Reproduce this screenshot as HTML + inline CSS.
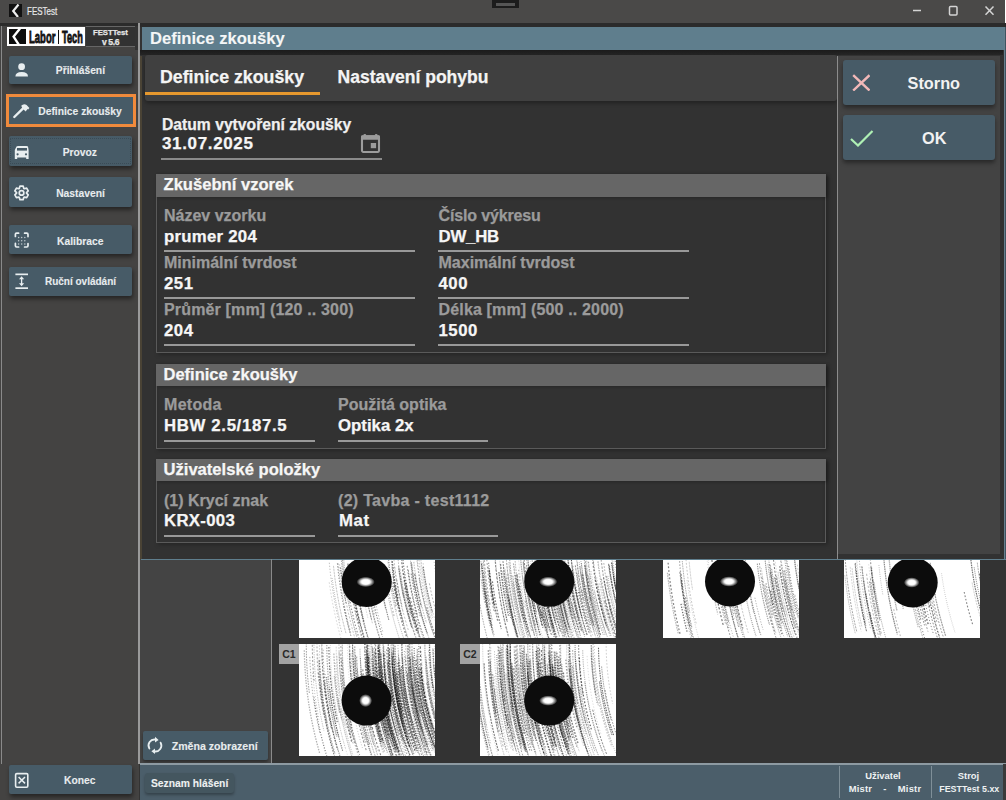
<!DOCTYPE html>
<html><head><meta charset="utf-8"><style>
html,body{margin:0;padding:0;width:1006px;height:800px;overflow:hidden;background:#333;}
body{position:relative;font-family:"Liberation Sans",sans-serif;}
body>div,body>svg{position:absolute;}
.t{white-space:nowrap;-webkit-text-stroke:0.25px currentColor;}
</style></head><body>
<div style="left:0px;top:0px;width:1006px;height:23px;background:#4a4948"></div>
<div style="left:1005px;top:0px;width:1px;height:23px;background:#ffffff"></div>
<div style="left:0px;top:23px;width:1006px;height:3px;background:#2b2b2b"></div>
<div style="left:492px;top:0px;width:27px;height:8px;background:#1c1c1c"></div>
<div style="left:496px;top:3px;width:19px;height:3px;background:#555"></div>
<div style="left:9px;top:4px;width:13px;height:13px;background:#111"></div>
<svg style="left:9px;top:4px" width="13" height="13"><path d="M9.5 0.5 L4.2 7 L9 13" stroke="#eee" stroke-width="2.2" fill="none"/></svg>
<div class="t" style="left:26.5px;top:6.46px;font-size:10.8px;line-height:10.8px;color:#e8e8e8;font-weight:normal;transform:scaleX(0.74);transform-origin:left;-webkit-text-stroke:0.2px currentColor;">FESTest</div>
<svg style="left:910px;top:4px" width="90" height="14"><path d="M3 6.5 H11" stroke="#d4d4d4" stroke-width="1.5"/><rect x="39.5" y="2.5" width="7.5" height="8.5" rx="1" fill="none" stroke="#d4d4d4" stroke-width="1.5"/><path d="M75.5 2.5 L83.5 10.8 M83.5 2.5 L75.5 10.8" stroke="#d4d4d4" stroke-width="1.5"/></svg>
<div style="left:0px;top:26px;width:139px;height:774px;background:#444342"></div>
<div style="left:1px;top:26px;width:1px;height:738px;background:#8a8a8a"></div>
<div style="left:7px;top:27px;width:78px;height:19px;background:#ffffff"></div>
<svg style="left:8.8px;top:28.8px" width="17" height="15.2"><rect width="17" height="15.2" fill="#0d0d0d"/><path d="M11 -0.5 L4.6 7.6 L9.8 15.7" stroke="#fff" stroke-width="2.4" fill="none"/></svg>
<div class="t" style="left:28.6px;top:28.71px;font-size:17px;line-height:17px;color:#111;font-weight:bold;transform:scaleX(0.56);transform-origin:left;-webkit-text-stroke:0.9px #111;">Labor</div>
<div style="left:58px;top:29.5px;width:1.2px;height:14.5px;background:#111"></div>
<div class="t" style="left:61.6px;top:28.71px;font-size:17px;line-height:17px;color:#111;font-weight:bold;transform:scaleX(0.54);transform-origin:left;-webkit-text-stroke:0.9px #111;">Tech</div>
<div style="left:86px;top:26px;width:49px;height:1px;background:#666"></div>
<div style="left:86px;top:46px;width:49px;height:1px;background:#666"></div>
<div style="left:86px;top:27px;width:49px;height:19px;background:#323232"></div>
<div style="left:135px;top:26px;width:3px;height:24px;background:#333"></div>
<div class="t" style="left:-89.5px;top:28.58px;font-size:7.7px;line-height:7.7px;color:#e6e6e6;font-weight:bold;width:400px;text-align:center;">FESTTest</div>
<div class="t" style="left:-89.5px;top:37.52px;font-size:8.6px;line-height:8.6px;color:#e6e6e6;font-weight:bold;letter-spacing:-0.4px;width:400px;text-align:center;">v 5.6</div>
<div style="left:9px;top:56px;width:123px;height:28px;background:#475b67;border-radius:2px;box-shadow:1px 3px 4px rgba(0,0,0,0.45)"></div>
<div class="t" style="left:-119.6px;top:66.38px;font-size:10.3px;line-height:10.3px;color:#e8ecee;font-weight:bold;width:400px;text-align:center;-webkit-text-stroke:0.1px currentColor">Přihlášení</div>
<div style="left:6px;top:94px;width:130px;height:33px;background:#f08a3c"></div>
<div style="left:9px;top:97px;width:124px;height:27px;background:#475b67"></div>
<div class="t" style="left:-120.0px;top:107.08px;font-size:10.3px;line-height:10.3px;color:#e8ecee;font-weight:bold;width:400px;text-align:center;-webkit-text-stroke:0.1px currentColor">Definice zkoušky</div>
<div style="left:9px;top:136px;width:123px;height:30px;background:#475b67;border-radius:2px;box-shadow:1px 3px 4px rgba(0,0,0,0.45)"></div>
<div class="t" style="left:-120.2px;top:148.48px;font-size:10.3px;line-height:10.3px;color:#e8ecee;font-weight:bold;width:400px;text-align:center;-webkit-text-stroke:0.1px currentColor">Provoz</div>
<div style="left:10px;top:138px;width:121px;height:26px;border:1px dotted rgba(30,40,48,0.3);box-sizing:border-box"></div>
<div style="left:9px;top:177px;width:123px;height:30px;background:#475b67;border-radius:2px;box-shadow:1px 3px 4px rgba(0,0,0,0.45)"></div>
<div class="t" style="left:-119.5px;top:188.88px;font-size:10.3px;line-height:10.3px;color:#e8ecee;font-weight:bold;width:400px;text-align:center;-webkit-text-stroke:0.1px currentColor">Nastavení</div>
<div style="left:9px;top:225px;width:123px;height:29px;background:#475b67;border-radius:2px;box-shadow:1px 3px 4px rgba(0,0,0,0.45)"></div>
<div class="t" style="left:-119.8px;top:236.58px;font-size:10.3px;line-height:10.3px;color:#e8ecee;font-weight:bold;width:400px;text-align:center;-webkit-text-stroke:0.1px currentColor">Kalibrace</div>
<div style="left:9px;top:267px;width:123px;height:29px;background:#475b67;border-radius:2px;box-shadow:1px 3px 4px rgba(0,0,0,0.45)"></div>
<div class="t" style="left:-119.5px;top:277.04px;font-size:10.0px;line-height:10.0px;color:#e8ecee;font-weight:bold;width:400px;text-align:center;-webkit-text-stroke:0.1px currentColor">Ruční ovládání</div>
<div style="left:9px;top:765px;width:123px;height:29px;background:#475b67;border-radius:2px;box-shadow:1px 3px 4px rgba(0,0,0,0.45)"></div>
<div class="t" style="left:-120.3px;top:775.78px;font-size:10.3px;line-height:10.3px;color:#e8ecee;font-weight:bold;width:400px;text-align:center;-webkit-text-stroke:0.1px currentColor">Konec</div>
<svg style="left:10px;top:58px" width="24" height="24" viewBox="0 0 24 24"><circle cx="11.6" cy="8.7" r="3.4" fill="#e8eef0"/><path d="M5.4 18.6 Q5.4 14 11.7 14 Q18 14 18 18.6 Z" fill="#e8eef0"/></svg>
<svg style="left:10px;top:98px" width="24" height="24" viewBox="0 0 24 24"><path d="M4.3 19 L13.6 9.8" stroke="#e8eef0" stroke-width="2.4" stroke-linecap="round"/><path d="M11.2 7.8 Q13.6 5 16.6 6.9 L19.4 10 L18.2 11.6 L17.6 11.1 L15.6 13.4 L12.6 10.4 Z" fill="#e8eef0"/></svg>
<svg style="left:10px;top:139px" width="24" height="24" viewBox="0 0 24 24"><path d="M6.5 7.5 Q7 6.9 8 6.9 L16.5 6.9 Q17.5 6.9 18 7.6 L18.6 11 L18.6 20 L16.2 20 L16.2 18.6 L7.2 18.6 L7.2 20 L4.8 20 L4.8 11 Z" fill="#e8eef0"/><rect x="7" y="9" width="10" height="2.6" fill="#475b67"/><circle cx="7.6" cy="15.3" r="1.1" fill="#475b67"/><circle cx="16" cy="15.3" r="1.1" fill="#475b67"/></svg>
<svg style="left:10px;top:180px" width="24" height="24" viewBox="0 0 24 24"><path d="M9.28 8.44 L9.98 6.08 L13.12 6.08 L13.82 8.44 L14.27 8.71 L16.67 8.13 L18.24 10.85 L16.54 12.64 L16.54 13.16 L18.24 14.95 L16.67 17.67 L14.27 17.09 L13.82 17.36 L13.12 19.72 L9.98 19.72 L9.28 17.36 L8.83 17.09 L6.43 17.67 L4.86 14.95 L6.56 13.16 L6.56 12.64 L4.86 10.85 L6.43 8.13 L8.83 8.71Z" fill="none" stroke="#e8eef0" stroke-width="1.7" stroke-linejoin="round"/><circle cx="11.55" cy="12.9" r="2.3" fill="none" stroke="#e8eef0" stroke-width="1.7"/></svg>
<svg style="left:10px;top:228px" width="24" height="24" viewBox="0 0 24 24"><path d="M5.4 8.5 V6.2 Q5.4 5.2 6.6 5.2 H8.6 M14.6 5.2 H16.8 Q18 5.2 18 6.4 V8.6 M5.4 15.4 V17.8 Q5.4 19 6.6 19 H8.6 M14.6 19 H16.8 Q18 19 18 17.8 V15.6" fill="none" stroke="#e8eef0" stroke-width="1.7" stroke-linecap="round"/><circle cx="8.6" cy="9.6" r="0.75" fill="#e8eef0" opacity="0.75"/><circle cx="8.6" cy="12.8" r="0.75" fill="#e8eef0" opacity="0.75"/><circle cx="8.6" cy="16" r="0.75" fill="#e8eef0" opacity="0.75"/><circle cx="11.7" cy="9.6" r="0.75" fill="#e8eef0" opacity="0.75"/><circle cx="11.7" cy="12.8" r="0.75" fill="#e8eef0" opacity="0.75"/><circle cx="11.7" cy="16" r="0.75" fill="#e8eef0" opacity="0.75"/><circle cx="14.8" cy="9.6" r="0.75" fill="#e8eef0" opacity="0.75"/><circle cx="14.8" cy="12.8" r="0.75" fill="#e8eef0" opacity="0.75"/><circle cx="14.8" cy="16" r="0.75" fill="#e8eef0" opacity="0.75"/></svg>
<svg style="left:10px;top:270px" width="24" height="24" viewBox="0 0 24 24"><rect x="5.4" y="3.5" width="12.6" height="1.7" fill="#e8eef0"/><rect x="5.4" y="17.3" width="12.6" height="1.7" fill="#e8eef0"/><path d="M11.6 8 V14.5" stroke="#e8eef0" stroke-width="1.3"/><path d="M9 9.3 L11.6 6.2 L14.2 9.3 Z M9 13.2 L11.6 16.3 L14.2 13.2 Z" fill="#e8eef0"/></svg>
<svg style="left:10px;top:768px" width="24" height="24" viewBox="0 0 24 24"><rect x="5.6" y="5.6" width="12.2" height="13.6" rx="1.2" fill="none" stroke="#e8eef0" stroke-width="1.6"/><path d="M8.6 9 L15 15.4 M15 9 L8.6 15.4" stroke="#e8eef0" stroke-width="1.5"/></svg>
<div style="left:140px;top:23px;width:866px;height:4px;background:#2b2b2b"></div>
<div style="left:142px;top:27px;width:863px;height:23px;background:#5f7e8d"></div>
<div style="left:1004px;top:27px;width:1px;height:23px;background:#66808e"></div>
<div style="left:1005px;top:27px;width:1px;height:23px;background:#3f5360"></div>
<div class="t" style="left:150px;top:30.95px;font-size:16.6px;line-height:16.6px;color:#f4f6f7;font-weight:bold;-webkit-text-stroke:0.1px currentColor">Definice zkoušky</div>
<div style="left:140px;top:50px;width:866px;height:509px;background:#323232"></div>
<div style="left:1004px;top:50px;width:1px;height:509px;background:#66808e"></div>
<div style="left:1005px;top:50px;width:1px;height:509px;background:#3f5360"></div>
<div style="left:140px;top:50px;width:863px;height:5px;background:linear-gradient(#1b1b1b,#262626)"></div>
<div style="left:145px;top:55px;width:692px;height:46px;background:#404040;border-radius:3px;box-shadow:0 2px 4px rgba(0,0,0,0.35)"></div>
<div style="left:145px;top:92px;width:175px;height:3px;background:#e6982e"></div>
<div class="t" style="left:160px;top:68.57px;font-size:17.75px;line-height:17.75px;color:#f4f4f4;font-weight:bold;">Definice zkoušky</div>
<div class="t" style="left:337.5px;top:68.74px;font-size:17.55px;line-height:17.55px;color:#f4f4f4;font-weight:bold;">Nastavení pohybu</div>
<div style="left:837px;top:56px;width:1px;height:503px;background:#8c8c8c"></div>
<div style="left:838px;top:56px;width:162px;height:498px;background:#434343"></div>
<div style="left:843px;top:60px;width:152px;height:45px;background:#475b67;border-radius:3px;box-shadow:0 3px 4px rgba(0,0,0,0.4)"></div>
<div class="t" style="left:733.8px;top:74.90px;font-size:16.3px;line-height:16.3px;color:#f2f2f2;font-weight:bold;width:400px;text-align:center;-webkit-text-stroke:0">Storno</div>
<div style="left:843px;top:115px;width:152px;height:45px;background:#475b67;border-radius:3px;box-shadow:0 3px 4px rgba(0,0,0,0.4)"></div>
<div class="t" style="left:734.2px;top:129.60px;font-size:16.3px;line-height:16.3px;color:#f2f2f2;font-weight:bold;width:400px;text-align:center;-webkit-text-stroke:0">OK</div>
<svg style="left:852px;top:74px" width="18" height="17"><path d="M1.2 1.2 L17.5 16.5 M17.5 1.2 L1.2 16.5" stroke="#f2b8b8" stroke-width="2.4"/></svg>
<svg style="left:850px;top:129px" width="24" height="18"><path d="M1 10 L8 16.5 L22.5 2" stroke="#aef0b4" stroke-width="2.2" fill="none"/></svg>
<div class="t" style="left:162px;top:116.81px;font-size:15.7px;line-height:15.7px;color:#f0f0f0;font-weight:bold;">Datum vytvoření zkoušky</div>
<div class="t" style="left:162px;top:134.71px;font-size:17px;line-height:17px;color:#f6f6f6;font-weight:bold;letter-spacing:0.65px;">31.07.2025</div>
<div style="left:161px;top:158px;width:221px;height:2px;background:#8a8a8a"></div>
<svg style="left:360px;top:133px" width="21" height="20"><rect x="2" y="3.2" width="17" height="15.8" rx="1.6" fill="none" stroke="#9c9c9c" stroke-width="2.1"/><rect x="1" y="2.2" width="19" height="4.6" rx="1.2" fill="#9c9c9c"/><ellipse cx="4.8" cy="1.9" rx="1.4" ry="1" fill="#9c9c9c"/><ellipse cx="16.2" cy="1.9" rx="1.4" ry="1" fill="#9c9c9c"/><rect x="10.8" y="10" width="5.3" height="5.2" fill="#9c9c9c"/></svg>
<div style="left:156px;top:174px;width:670px;height:179px;border:1.5px solid #5a5a5a;box-sizing:border-box;box-shadow:2px 2px 4px rgba(0,0,0,0.25), inset 0 4px 5px -2px rgba(0,0,0,0.3)"></div>
<div style="left:156px;top:174px;width:670px;height:23px;background:#666666;box-shadow:2px 1px 3px rgba(0,0,0,0.25)"></div>
<div class="t" style="left:163.5px;top:177.25px;font-size:16.6px;line-height:16.6px;color:#f6f6f6;font-weight:bold;">Zkušební vzorek</div>
<div class="t" style="left:164px;top:208.26px;font-size:16px;line-height:16px;color:#9b9b9b;font-weight:bold;">Název vzorku</div>
<div class="t" style="left:164px;top:229.28px;font-size:16.8px;line-height:16.8px;color:#f6f6f6;font-weight:bold;letter-spacing:0.25px;">prumer 204</div>
<div style="left:163.5px;top:250.0px;width:251px;height:2px;background:#999999"></div>
<div class="t" style="left:164px;top:255.26px;font-size:16px;line-height:16px;color:#9b9b9b;font-weight:bold;">Minimální tvrdost</div>
<div class="t" style="left:164px;top:276.28px;font-size:16.8px;line-height:16.8px;color:#f6f6f6;font-weight:bold;letter-spacing:0.5px;">251</div>
<div style="left:163.5px;top:297.0px;width:251px;height:2px;background:#999999"></div>
<div class="t" style="left:164px;top:302.26px;font-size:16px;line-height:16px;color:#9b9b9b;font-weight:bold;letter-spacing:0.16px;">Průměr [mm] (120 .. 300)</div>
<div class="t" style="left:164px;top:323.28px;font-size:16.8px;line-height:16.8px;color:#f6f6f6;font-weight:bold;letter-spacing:0.5px;">204</div>
<div style="left:163.5px;top:344.0px;width:251px;height:2px;background:#999999"></div>
<div class="t" style="left:438.5px;top:208.26px;font-size:16px;line-height:16px;color:#9b9b9b;font-weight:bold;letter-spacing:-0.15px;">Číslo výkresu</div>
<div class="t" style="left:438.5px;top:229.28px;font-size:16.8px;line-height:16.8px;color:#f6f6f6;font-weight:bold;letter-spacing:-0.2px;">DW_HB</div>
<div style="left:438.0px;top:250.0px;width:251px;height:2px;background:#999999"></div>
<div class="t" style="left:438.5px;top:255.26px;font-size:16px;line-height:16px;color:#9b9b9b;font-weight:bold;">Maximální tvrdost</div>
<div class="t" style="left:438.5px;top:276.28px;font-size:16.8px;line-height:16.8px;color:#f6f6f6;font-weight:bold;letter-spacing:0.5px;">400</div>
<div style="left:438.0px;top:297.0px;width:251px;height:2px;background:#999999"></div>
<div class="t" style="left:438.5px;top:302.26px;font-size:16px;line-height:16px;color:#9b9b9b;font-weight:bold;letter-spacing:0.16px;">Délka [mm] (500 .. 2000)</div>
<div class="t" style="left:438.5px;top:323.28px;font-size:16.8px;line-height:16.8px;color:#f6f6f6;font-weight:bold;letter-spacing:0.5px;">1500</div>
<div style="left:438.0px;top:344.0px;width:251px;height:2px;background:#999999"></div>
<div style="left:156px;top:364px;width:670px;height:84.5px;border:1.5px solid #5a5a5a;box-sizing:border-box;box-shadow:2px 2px 4px rgba(0,0,0,0.25), inset 0 4px 5px -2px rgba(0,0,0,0.3)"></div>
<div style="left:156px;top:364px;width:670px;height:22px;background:#666666;box-shadow:2px 1px 3px rgba(0,0,0,0.25)"></div>
<div class="t" style="left:163.5px;top:365.73px;font-size:16.5px;line-height:16.5px;color:#f6f6f6;font-weight:bold;">Definice zkoušky</div>
<div class="t" style="left:164px;top:397.06px;font-size:16px;line-height:16px;color:#9b9b9b;font-weight:bold;letter-spacing:0.3px;">Metoda</div>
<div class="t" style="left:164px;top:418.28px;font-size:16.8px;line-height:16.8px;color:#f6f6f6;font-weight:bold;letter-spacing:0.65px;">HBW 2.5/187.5</div>
<div style="left:163.5px;top:440.0px;width:151px;height:2px;background:#999999"></div>
<div class="t" style="left:338px;top:397.06px;font-size:16px;line-height:16px;color:#9b9b9b;font-weight:bold;">Použitá optika</div>
<div class="t" style="left:338px;top:418.28px;font-size:16.8px;line-height:16.8px;color:#f6f6f6;font-weight:bold;">Optika 2x</div>
<div style="left:337.5px;top:440.0px;width:150px;height:2px;background:#999999"></div>
<div style="left:156px;top:458.5px;width:670px;height:84.5px;border:1.5px solid #5a5a5a;box-sizing:border-box;box-shadow:2px 2px 4px rgba(0,0,0,0.25), inset 0 4px 5px -2px rgba(0,0,0,0.3)"></div>
<div style="left:156px;top:458.5px;width:670px;height:22px;background:#666666;box-shadow:2px 1px 3px rgba(0,0,0,0.25)"></div>
<div class="t" style="left:163.5px;top:461.95px;font-size:16.6px;line-height:16.6px;color:#f6f6f6;font-weight:bold;">Uživatelské položky</div>
<div class="t" style="left:164px;top:492.76px;font-size:16px;line-height:16px;color:#9b9b9b;font-weight:bold;">(1) Krycí znak</div>
<div class="t" style="left:164px;top:513.28px;font-size:16.8px;line-height:16.8px;color:#f6f6f6;font-weight:bold;letter-spacing:0.3px;">KRX-003</div>
<div style="left:163.5px;top:535.0px;width:151px;height:2px;background:#999999"></div>
<div class="t" style="left:338px;top:492.76px;font-size:16px;line-height:16px;color:#9b9b9b;font-weight:bold;letter-spacing:0.3px;">(2) Tavba - test1112</div>
<div class="t" style="left:339px;top:513.28px;font-size:16.8px;line-height:16.8px;color:#f6f6f6;font-weight:bold;letter-spacing:0.6px;">Mat</div>
<div style="left:337.5px;top:535.0px;width:160px;height:2px;background:#999999"></div>
<div style="left:140px;top:559px;width:866px;height:205px;background:#333333"></div>
<div style="left:140px;top:559px;width:131px;height:205px;background:#444444"></div>
<div style="left:141px;top:559px;width:865px;height:1px;background:#5f7e8d"></div>
<div style="left:138px;top:762.5px;width:134px;height:1.5px;background:#9a9a9a"></div>
<div style="left:138px;top:23px;width:2px;height:741px;background:#9a9a9a"></div>
<div style="left:140px;top:56px;width:1.5px;height:503px;background:#4a4335"></div>
<div style="left:271px;top:559px;width:1px;height:205px;background:#8a8a8a"></div>
<div style="left:143px;top:731px;width:125px;height:29px;background:#475b67;border-radius:2px;box-shadow:0 2px 3px rgba(0,0,0,0.35)"></div>
<div class="t" style="left:171.7px;top:741.13px;font-size:10.6px;line-height:10.6px;color:#e8ecee;font-weight:bold;-webkit-text-stroke:0.1px currentColor">Změna zobrazení</div>
<svg style="left:143px;top:733px" width="24" height="24" viewBox="0 0 24 24"><path d="M6.4 15.6 A6 6 0 0 1 12.6 6.6" fill="none" stroke="#e8eef0" stroke-width="1.8" stroke-linecap="round"/><path d="M12 3.8 L15.6 7 L12 9.6 Z" fill="#e8eef0"/><path d="M17.6 9.6 A6 6 0 0 1 11.4 18.4" fill="none" stroke="#e8eef0" stroke-width="1.8" stroke-linecap="round"/><path d="M12 15.4 L8.4 18.2 L12 21 Z" fill="#e8eef0"/></svg>
<svg style="left:299px;top:559.5px" width="136" height="78.5" viewBox="0 0 136 78.5"><defs><radialGradient id="g1"><stop offset="0" stop-color="#fff"/><stop offset="0.5" stop-color="#f0f0f0"/><stop offset="1" stop-color="#fff" stop-opacity="0"/></radialGradient></defs><rect width="136" height="78.5" fill="#ffffff"/><path d="M64.7 19.4 A379.1 379.1 0 0 0 72.6 59.5" stroke="#000" stroke-opacity="0.38" stroke-width="1.0" stroke-dasharray="1.9 0.7" fill="none"/><path d="M30.3 2.7 A411.3 411.3 0 0 0 43.1 73.7" stroke="#000" stroke-opacity="0.50" stroke-width="0.5" stroke-dasharray="1.4 1.6" fill="none"/><path d="M76.4 -3.4 A364.8 364.8 0 0 0 80.0 25.2" stroke="#000" stroke-opacity="0.42" stroke-width="1.3" stroke-dasharray="1.3 0.9" fill="none"/><path d="M99.6 8.7 A343.0 343.0 0 0 0 104.4 37.1" stroke="#000" stroke-opacity="0.38" stroke-width="0.9" stroke-dasharray="1.1 0.9" fill="none"/><path d="M44.8 46.4 A403.3 403.3 0 0 0 51.4 73.8" stroke="#000" stroke-opacity="0.42" stroke-width="1.0" stroke-dasharray="1.1 2.0" fill="none"/><path d="M115.7 13.9 A327.8 327.8 0 0 0 122.4 47.2" stroke="#000" stroke-opacity="0.49" stroke-width="1.1" stroke-dasharray="2.1 1.2" fill="none"/><path d="M106.9 22.7 A337.9 337.9 0 0 0 122.0 80.0" stroke="#000" stroke-opacity="0.54" stroke-width="0.9" stroke-dasharray="1.6 0.6" fill="none"/><path d="M39.2 3.3 A402.5 402.5 0 0 0 51.7 72.3" stroke="#000" stroke-opacity="0.27" stroke-width="0.9" stroke-dasharray="1.8 1.5" fill="none"/><path d="M34.5 5.9 A407.4 407.4 0 0 0 47.1 73.8" stroke="#000" stroke-opacity="0.36" stroke-width="0.9" stroke-dasharray="0.8 0.7" fill="none"/><path d="M118.0 0.9 A323.9 323.9 0 0 0 136.7 79.7" stroke="#000" stroke-opacity="0.36" stroke-width="0.6" stroke-dasharray="1.5 2.0" fill="none"/><path d="M81.6 20.9 A362.6 362.6 0 0 0 89.8 59.9" stroke="#000" stroke-opacity="0.58" stroke-width="1.0" stroke-dasharray="1.4 1.0" fill="none"/><path d="M102.1 -4.9 A339.2 339.2 0 0 0 118.1 72.8" stroke="#000" stroke-opacity="0.51" stroke-width="1.2" stroke-dasharray="2.0 1.6" fill="none"/><path d="M89.4 -2.7 A352.0 352.0 0 0 0 97.4 47.0" stroke="#000" stroke-opacity="0.55" stroke-width="1.0" stroke-dasharray="1.1 1.3" fill="none"/><path d="M109.3 10.2 A333.7 333.7 0 0 0 118.7 56.0" stroke="#000" stroke-opacity="0.42" stroke-width="1.0" stroke-dasharray="1.7 1.2" fill="none"/><path d="M52.7 22.0 A391.3 391.3 0 0 0 65.4 79.3" stroke="#000" stroke-opacity="0.52" stroke-width="1.1" stroke-dasharray="1.9 1.0" fill="none"/><path d="M120.4 -2.8 A321.1 321.1 0 0 0 133.0 60.1" stroke="#000" stroke-opacity="0.21" stroke-width="0.5" stroke-dasharray="1.9 0.9" fill="none"/><path d="M40.6 4.4 A401.2 401.2 0 0 0 44.7 35.0" stroke="#000" stroke-opacity="0.41" stroke-width="0.6" stroke-dasharray="1.2 1.6" fill="none"/><path d="M102.0 16.7 A341.8 341.8 0 0 0 111.5 60.5" stroke="#000" stroke-opacity="0.21" stroke-width="0.8" stroke-dasharray="1.4 0.9" fill="none"/><path d="M65.5 26.2 A379.3 379.3 0 0 0 73.6 63.9" stroke="#000" stroke-opacity="0.53" stroke-width="0.5" stroke-dasharray="0.8 0.8" fill="none"/><path d="M104.0 33.3 A342.7 342.7 0 0 0 112.9 68.1" stroke="#000" stroke-opacity="0.47" stroke-width="0.9" stroke-dasharray="1.1 2.0" fill="none"/><path d="M99.6 6.1 A342.7 342.7 0 0 0 112.6 67.3" stroke="#000" stroke-opacity="0.43" stroke-width="0.8" stroke-dasharray="1.7 0.7" fill="none"/><path d="M48.5 4.4 A393.4 393.4 0 0 0 64.2 82.2" stroke="#000" stroke-opacity="0.32" stroke-width="1.2" stroke-dasharray="1.2 1.9" fill="none"/><path d="M108.4 49.7 A342.0 342.0 0 0 0 116.3 76.3" stroke="#000" stroke-opacity="0.22" stroke-width="1.2" stroke-dasharray="2.1 1.4" fill="none"/><path d="M55.4 10.7 A387.2 387.2 0 0 0 70.9 83.1" stroke="#000" stroke-opacity="0.48" stroke-width="0.9" stroke-dasharray="1.3 1.1" fill="none"/><path d="M42.4 0.5 A399.0 399.0 0 0 0 47.5 37.7" stroke="#000" stroke-opacity="0.47" stroke-width="0.7" stroke-dasharray="1.5 1.1" fill="none"/><path d="M94.6 -4.7 A346.6 346.6 0 0 0 109.3 70.0" stroke="#000" stroke-opacity="0.28" stroke-width="0.8" stroke-dasharray="2.2 1.7" fill="none"/><path d="M55.0 11.5 A387.7 387.7 0 0 0 70.2 82.3" stroke="#000" stroke-opacity="0.34" stroke-width="1.2" stroke-dasharray="1.8 1.3" fill="none"/><path d="M139.7 31.7 A307.4 307.4 0 0 0 150.9 70.4" stroke="#000" stroke-opacity="0.23" stroke-width="0.6" stroke-dasharray="2.1 0.9" fill="none"/><path d="M86.2 9.7 A356.5 356.5 0 0 0 95.1 56.1" stroke="#000" stroke-opacity="0.32" stroke-width="1.2" stroke-dasharray="1.6 1.9" fill="none"/><path d="M95.5 25.7 A349.6 349.6 0 0 0 103.1 59.5" stroke="#000" stroke-opacity="0.24" stroke-width="0.5" stroke-dasharray="0.9 1.8" fill="none"/><path d="M120.1 18.4 A324.1 324.1 0 0 0 135.6 77.3" stroke="#000" stroke-opacity="0.35" stroke-width="1.0" stroke-dasharray="1.1 0.7" fill="none"/><path d="M38.4 3.4 A403.3 403.3 0 0 0 52.3 77.3" stroke="#000" stroke-opacity="0.57" stroke-width="0.9" stroke-dasharray="1.2 1.7" fill="none"/><path d="M135.1 1.8 A307.0 307.0 0 0 0 140.6 33.8" stroke="#000" stroke-opacity="0.55" stroke-width="0.5" stroke-dasharray="1.1 2.0" fill="none"/><path d="M113.0 4.6 A329.3 329.3 0 0 0 118.6 37.7" stroke="#000" stroke-opacity="0.30" stroke-width="1.1" stroke-dasharray="0.9 1.9" fill="none"/><path d="M79.2 7.0 A363.1 363.1 0 0 0 86.6 49.5" stroke="#000" stroke-opacity="0.39" stroke-width="0.6" stroke-dasharray="1.7 0.7" fill="none"/><path d="M43.3 -2.1 A397.9 397.9 0 0 0 57.8 76.8" stroke="#000" stroke-opacity="0.44" stroke-width="0.9" stroke-dasharray="1.2 0.7" fill="none"/><path d="M154.2 7.4 A288.8 288.8 0 0 0 161.0 40.5" stroke="#000" stroke-opacity="0.45" stroke-width="1.3" stroke-dasharray="1.6 1.6" fill="none"/><path d="M105.2 21.6 A339.3 339.3 0 0 0 114.5 62.0" stroke="#000" stroke-opacity="0.32" stroke-width="0.7" stroke-dasharray="0.9 1.0" fill="none"/><path d="M90.7 21.6 A353.7 353.7 0 0 0 105.9 81.9" stroke="#000" stroke-opacity="0.36" stroke-width="0.7" stroke-dasharray="1.3 1.0" fill="none"/><path d="M118.2 -0.5 A323.6 323.6 0 0 0 134.9 73.7" stroke="#000" stroke-opacity="0.33" stroke-width="0.9" stroke-dasharray="1.6 1.4" fill="none"/><path d="M62.7 27.5 A382.3 382.3 0 0 0 68.9 57.9" stroke="#000" stroke-opacity="0.23" stroke-width="0.6" stroke-dasharray="1.7 1.0" fill="none"/><path d="M115.9 26.4 A329.6 329.6 0 0 0 130.2 78.8" stroke="#000" stroke-opacity="0.26" stroke-width="0.9" stroke-dasharray="1.9 0.7" fill="none"/><path d="M124.1 3.1 A318.1 318.1 0 0 0 143.7 81.8" stroke="#000" stroke-opacity="0.33" stroke-width="0.6" stroke-dasharray="1.5 1.9" fill="none"/><path d="M69.8 -2.9 A371.6 371.6 0 0 0 83.7 71.4" stroke="#000" stroke-opacity="0.56" stroke-width="0.5" stroke-dasharray="1.2 1.9" fill="none"/><path d="M138.2 10.8 A305.1 305.1 0 0 0 155.8 76.9" stroke="#000" stroke-opacity="0.27" stroke-width="0.8" stroke-dasharray="1.0 1.6" fill="none"/><path d="M93.1 -1.8 A348.4 348.4 0 0 0 99.2 38.7" stroke="#000" stroke-opacity="0.59" stroke-width="1.1" stroke-dasharray="1.6 1.4" fill="none"/><path d="M95.5 6.6 A346.9 346.9 0 0 0 103.8 51.5" stroke="#000" stroke-opacity="0.21" stroke-width="1.0" stroke-dasharray="1.4 1.4" fill="none"/><path d="M53.1 1.1 A388.5 388.5 0 0 0 60.1 46.9" stroke="#000" stroke-opacity="0.25" stroke-width="0.7" stroke-dasharray="2.0 1.2" fill="none"/><path d="M105.5 28.1 A340.3 340.3 0 0 0 111.6 55.1" stroke="#000" stroke-opacity="0.40" stroke-width="1.0" stroke-dasharray="1.4 1.6" fill="none"/><path d="M105.4 19.9 A338.9 338.9 0 0 0 114.1 59.2" stroke="#000" stroke-opacity="0.39" stroke-width="0.7" stroke-dasharray="1.4 1.4" fill="none"/><path d="M121.6 -3.6 A319.8 319.8 0 0 0 133.7 57.9" stroke="#000" stroke-opacity="0.23" stroke-width="0.9" stroke-dasharray="2.0 0.8" fill="none"/><path d="M104.0 -0.2 A337.7 337.7 0 0 0 119.9 73.5" stroke="#000" stroke-opacity="0.48" stroke-width="1.2" stroke-dasharray="1.3 1.6" fill="none"/><path d="M84.8 9.0 A357.8 357.8 0 0 0 101.8 82.9" stroke="#000" stroke-opacity="0.43" stroke-width="0.6" stroke-dasharray="1.2 0.9" fill="none"/><path d="M92.1 -3.8 A349.2 349.2 0 0 0 104.7 63.4" stroke="#000" stroke-opacity="0.47" stroke-width="1.1" stroke-dasharray="1.3 1.3" fill="none"/><path d="M48.9 3.1 A392.9 392.9 0 0 0 64.5 81.7" stroke="#000" stroke-opacity="0.45" stroke-width="0.7" stroke-dasharray="2.1 1.9" fill="none"/><path d="M46.5 12.7 A396.3 396.3 0 0 0 60.6 80.3" stroke="#000" stroke-opacity="0.46" stroke-width="1.1" stroke-dasharray="1.4 1.9" fill="none"/><path d="M88.9 1.6 A352.9 352.9 0 0 0 97.6 51.6" stroke="#000" stroke-opacity="0.33" stroke-width="0.6" stroke-dasharray="2.1 1.9" fill="none"/><path d="M66.4 7.5 A375.9 375.9 0 0 0 77.7 66.1" stroke="#000" stroke-opacity="0.25" stroke-width="0.7" stroke-dasharray="1.1 1.6" fill="none"/><path d="M59.0 33.7 A387.0 387.0 0 0 0 64.9 61.3" stroke="#000" stroke-opacity="0.44" stroke-width="1.2" stroke-dasharray="1.1 1.0" fill="none"/><path d="M130.4 23.4 A314.9 314.9 0 0 0 140.9 64.4" stroke="#000" stroke-opacity="0.30" stroke-width="1.0" stroke-dasharray="1.9 1.7" fill="none"/><path d="M93.1 8.0 A349.4 349.4 0 0 0 109.7 79.8" stroke="#000" stroke-opacity="0.43" stroke-width="0.8" stroke-dasharray="1.2 0.8" fill="none"/><path d="M111.1 37.3 A336.5 336.5 0 0 0 119.9 69.8" stroke="#000" stroke-opacity="0.42" stroke-width="1.3" stroke-dasharray="1.9 2.0" fill="none"/><path d="M33.2 18.2 A410.1 410.1 0 0 0 41.1 61.3" stroke="#000" stroke-opacity="0.34" stroke-width="0.9" stroke-dasharray="0.8 1.2" fill="none"/><path d="M112.2 13.7 A331.2 331.2 0 0 0 121.4 56.7" stroke="#000" stroke-opacity="0.51" stroke-width="1.0" stroke-dasharray="1.5 1.5" fill="none"/><path d="M52.2 23.6 A392.1 392.1 0 0 0 60.6 64.9" stroke="#000" stroke-opacity="0.55" stroke-width="1.2" stroke-dasharray="1.5 2.0" fill="none"/><path d="M112.2 2.4 A329.8 329.8 0 0 0 128.2 73.4" stroke="#000" stroke-opacity="0.50" stroke-width="1.3" stroke-dasharray="1.2 0.8" fill="none"/><path d="M97.8 19.5 A346.3 346.3 0 0 0 103.2 46.4" stroke="#000" stroke-opacity="0.37" stroke-width="0.8" stroke-dasharray="2.0 1.4" fill="none"/><path d="M108.2 5.9 A334.2 334.2 0 0 0 125.9 80.0" stroke="#000" stroke-opacity="0.40" stroke-width="1.1" stroke-dasharray="1.7 1.5" fill="none"/><path d="M94.1 22.0 A350.4 350.4 0 0 0 109.3 81.8" stroke="#000" stroke-opacity="0.51" stroke-width="1.2" stroke-dasharray="1.9 1.7" fill="none"/><path d="M124.1 6.8 A318.5 318.5 0 0 0 133.4 52.3" stroke="#000" stroke-opacity="0.48" stroke-width="1.2" stroke-dasharray="1.6 0.8" fill="none"/><path d="M95.7 25.9 A349.4 349.4 0 0 0 102.1 54.9" stroke="#000" stroke-opacity="0.50" stroke-width="0.8" stroke-dasharray="1.3 1.5" fill="none"/><path d="M54.1 28.6 A390.9 390.9 0 0 0 66.6 81.7" stroke="#000" stroke-opacity="0.48" stroke-width="0.8" stroke-dasharray="1.8 1.4" fill="none"/><path d="M56.4 -1.4 A385.0 385.0 0 0 0 62.2 39.9" stroke="#000" stroke-opacity="0.53" stroke-width="0.9" stroke-dasharray="1.3 1.3" fill="none"/><path d="M148.7 30.4 A298.4 298.4 0 0 0 158.8 65.8" stroke="#000" stroke-opacity="0.49" stroke-width="1.2" stroke-dasharray="1.2 1.5" fill="none"/><path d="M42.6 12.6 A400.2 400.2 0 0 0 56.7 80.9" stroke="#000" stroke-opacity="0.33" stroke-width="0.7" stroke-dasharray="2.1 1.6" fill="none"/><path d="M115.7 49.9 A335.0 335.0 0 0 0 124.2 77.6" stroke="#000" stroke-opacity="0.45" stroke-width="0.8" stroke-dasharray="1.4 1.7" fill="none"/><path d="M127.7 47.5 A322.8 322.8 0 0 0 138.9 82.1" stroke="#000" stroke-opacity="0.38" stroke-width="1.2" stroke-dasharray="1.8 1.4" fill="none"/><path d="M66.9 -0.2 A374.7 374.7 0 0 0 76.0 54.7" stroke="#000" stroke-opacity="0.26" stroke-width="1.1" stroke-dasharray="1.3 1.7" fill="none"/><path d="M44.8 -0.1 A396.7 396.7 0 0 0 50.9 43.1" stroke="#000" stroke-opacity="0.36" stroke-width="0.9" stroke-dasharray="0.9 0.9" fill="none"/><path d="M30.2 22.2 A413.6 413.6 0 0 0 42.5 80.2" stroke="#000" stroke-opacity="0.29" stroke-width="0.5" stroke-dasharray="1.8 1.7" fill="none"/><path d="M98.9 -2.9 A342.5 342.5 0 0 0 113.2 68.5" stroke="#000" stroke-opacity="0.48" stroke-width="0.6" stroke-dasharray="1.4 1.3" fill="none"/><path d="M41.6 7.5 A400.5 400.5 0 0 0 47.0 43.3" stroke="#000" stroke-opacity="0.53" stroke-width="0.9" stroke-dasharray="1.6 0.9" fill="none"/><path d="M100.9 8.9 A341.8 341.8 0 0 0 119.0 83.4" stroke="#000" stroke-opacity="0.22" stroke-width="1.1" stroke-dasharray="2.0 1.0" fill="none"/><path d="M68.1 24.0 A376.4 376.4 0 0 0 81.6 81.0" stroke="#000" stroke-opacity="0.36" stroke-width="1.2" stroke-dasharray="1.9 0.8" fill="none"/><path d="M119.4 -3.4 A322.1 322.1 0 0 0 131.6 59.0" stroke="#000" stroke-opacity="0.35" stroke-width="0.6" stroke-dasharray="1.4 1.8" fill="none"/><path d="M111.3 -1.3 A330.3 330.3 0 0 0 115.5 27.7" stroke="#000" stroke-opacity="0.54" stroke-width="0.5" stroke-dasharray="1.2 0.8" fill="none"/><path d="M69.4 10.7 A373.3 373.3 0 0 0 83.5 76.7" stroke="#000" stroke-opacity="0.54" stroke-width="1.0" stroke-dasharray="1.3 1.5" fill="none"/><path d="M114.8 1.9 A327.2 327.2 0 0 0 127.5 63.0" stroke="#000" stroke-opacity="0.22" stroke-width="1.2" stroke-dasharray="1.6 1.1" fill="none"/><path d="M94.0 16.1 A349.6 349.6 0 0 0 99.7 46.1" stroke="#000" stroke-opacity="0.37" stroke-width="0.7" stroke-dasharray="2.0 1.2" fill="none"/><path d="M104.8 13.3 A338.5 338.5 0 0 0 120.4 77.5" stroke="#000" stroke-opacity="0.49" stroke-width="1.1" stroke-dasharray="1.2 2.0" fill="none"/><circle cx="67.7" cy="21.9" r="25" fill="#0c0c0c"/><ellipse cx="66.7" cy="21.9" rx="9.1" ry="5.2" fill="url(#g1)"/><ellipse cx="66.7" cy="21.9" rx="3.8500000000000005" ry="2.2" fill="#fff"/></svg>
<svg style="left:480px;top:559.5px" width="136" height="78" viewBox="0 0 136 78"><defs><radialGradient id="g2"><stop offset="0" stop-color="#fff"/><stop offset="0.5" stop-color="#f0f0f0"/><stop offset="1" stop-color="#fff" stop-opacity="0"/></radialGradient></defs><rect width="136" height="78" fill="#ffffff"/><path d="M91.9 43.3 A356.6 356.6 0 0 0 100.1 73.9" stroke="#000" stroke-opacity="0.49" stroke-width="1.0" stroke-dasharray="1.2 1.4" fill="none"/><path d="M64.3 -0.0 A377.2 377.2 0 0 0 74.0 57.5" stroke="#000" stroke-opacity="0.37" stroke-width="0.8" stroke-dasharray="1.8 2.0" fill="none"/><path d="M19.5 -3.3 A421.7 421.7 0 0 0 24.5 37.7" stroke="#000" stroke-opacity="0.21" stroke-width="0.9" stroke-dasharray="1.2 1.1" fill="none"/><path d="M56.9 14.3 A386.2 386.2 0 0 0 67.7 68.4" stroke="#000" stroke-opacity="0.29" stroke-width="0.5" stroke-dasharray="1.3 0.8" fill="none"/><path d="M149.2 42.3 A300.7 300.7 0 0 0 160.8 77.7" stroke="#000" stroke-opacity="0.52" stroke-width="1.1" stroke-dasharray="2.1 1.7" fill="none"/><path d="M74.4 37.6 A372.6 372.6 0 0 0 86.0 82.2" stroke="#000" stroke-opacity="0.58" stroke-width="0.6" stroke-dasharray="1.9 1.6" fill="none"/><path d="M15.2 1.5 A426.2 426.2 0 0 0 28.4 76.8" stroke="#000" stroke-opacity="0.53" stroke-width="0.8" stroke-dasharray="2.0 1.9" fill="none"/><path d="M62.0 24.5 A382.5 382.5 0 0 0 75.1 80.5" stroke="#000" stroke-opacity="0.49" stroke-width="0.9" stroke-dasharray="1.1 1.1" fill="none"/><path d="M128.8 39.0 A319.7 319.7 0 0 0 140.9 79.0" stroke="#000" stroke-opacity="0.32" stroke-width="1.3" stroke-dasharray="1.8 1.3" fill="none"/><path d="M161.5 11.5 A282.2 282.2 0 0 0 178.6 72.3" stroke="#000" stroke-opacity="0.32" stroke-width="0.7" stroke-dasharray="1.5 1.9" fill="none"/><path d="M150.9 16.7 A293.5 293.5 0 0 0 169.9 81.0" stroke="#000" stroke-opacity="0.28" stroke-width="1.1" stroke-dasharray="0.9 1.5" fill="none"/><path d="M116.4 39.1 A331.8 331.8 0 0 0 127.4 77.0" stroke="#000" stroke-opacity="0.24" stroke-width="0.9" stroke-dasharray="2.0 0.9" fill="none"/><path d="M105.8 -4.2 A335.5 335.5 0 0 0 118.1 60.6" stroke="#000" stroke-opacity="0.34" stroke-width="0.6" stroke-dasharray="1.7 0.7" fill="none"/><path d="M40.7 39.4 A406.0 406.0 0 0 0 46.7 67.0" stroke="#000" stroke-opacity="0.21" stroke-width="0.7" stroke-dasharray="1.9 0.8" fill="none"/><path d="M61.2 54.2 A388.9 388.9 0 0 0 69.0 82.4" stroke="#000" stroke-opacity="0.26" stroke-width="0.5" stroke-dasharray="1.3 1.5" fill="none"/><path d="M26.9 14.0 A415.8 415.8 0 0 0 32.0 46.6" stroke="#000" stroke-opacity="0.21" stroke-width="0.9" stroke-dasharray="1.9 1.6" fill="none"/><path d="M73.6 6.7 A368.6 368.6 0 0 0 86.5 70.5" stroke="#000" stroke-opacity="0.29" stroke-width="1.0" stroke-dasharray="1.2 0.7" fill="none"/><path d="M-25.7 -3.0 A466.8 466.8 0 0 0 -15.1 69.8" stroke="#000" stroke-opacity="0.43" stroke-width="0.8" stroke-dasharray="1.5 0.8" fill="none"/><path d="M65.5 -4.3 A375.7 375.7 0 0 0 72.6 44.8" stroke="#000" stroke-opacity="0.42" stroke-width="0.6" stroke-dasharray="0.9 0.6" fill="none"/><path d="M140.0 31.7 A307.1 307.1 0 0 0 148.6 63.0" stroke="#000" stroke-opacity="0.40" stroke-width="1.3" stroke-dasharray="2.1 2.0" fill="none"/><path d="M36.9 14.2 A406.0 406.0 0 0 0 48.0 71.8" stroke="#000" stroke-opacity="0.52" stroke-width="1.1" stroke-dasharray="1.2 1.2" fill="none"/><path d="M81.7 -2.8 A359.7 359.7 0 0 0 85.1 24.3" stroke="#000" stroke-opacity="0.36" stroke-width="0.6" stroke-dasharray="1.8 0.9" fill="none"/><path d="M86.7 21.5 A357.6 357.6 0 0 0 94.8 59.5" stroke="#000" stroke-opacity="0.39" stroke-width="0.7" stroke-dasharray="1.7 0.9" fill="none"/><path d="M101.4 3.0 A340.6 340.6 0 0 0 119.1 80.2" stroke="#000" stroke-opacity="0.37" stroke-width="0.9" stroke-dasharray="1.6 0.7" fill="none"/><path d="M45.3 40.9 A401.7 401.7 0 0 0 52.5 72.1" stroke="#000" stroke-opacity="0.35" stroke-width="0.9" stroke-dasharray="2.1 1.5" fill="none"/><path d="M64.7 -1.3 A376.7 376.7 0 0 0 80.0 77.1" stroke="#000" stroke-opacity="0.21" stroke-width="1.0" stroke-dasharray="0.9 1.0" fill="none"/><path d="M66.7 10.8 A376.0 376.0 0 0 0 76.3 61.2" stroke="#000" stroke-opacity="0.39" stroke-width="0.7" stroke-dasharray="1.6 0.7" fill="none"/><path d="M66.8 34.7 A379.5 379.5 0 0 0 78.2 80.4" stroke="#000" stroke-opacity="0.23" stroke-width="1.1" stroke-dasharray="1.1 1.4" fill="none"/><path d="M-8.3 0.0 A449.6 449.6 0 0 0 -2.1 47.6" stroke="#000" stroke-opacity="0.25" stroke-width="0.6" stroke-dasharray="2.0 1.5" fill="none"/><path d="M87.5 -4.4 A353.8 353.8 0 0 0 98.7 59.1" stroke="#000" stroke-opacity="0.46" stroke-width="1.1" stroke-dasharray="1.8 1.3" fill="none"/><path d="M-10.9 20.2 A454.1 454.1 0 0 0 -4.1 60.8" stroke="#000" stroke-opacity="0.39" stroke-width="1.3" stroke-dasharray="1.9 1.9" fill="none"/><path d="M93.0 5.9 A349.3 349.3 0 0 0 100.6 48.3" stroke="#000" stroke-opacity="0.40" stroke-width="0.7" stroke-dasharray="1.4 1.6" fill="none"/><path d="M-4.6 15.4 A447.4 447.4 0 0 0 0.0 47.0" stroke="#000" stroke-opacity="0.60" stroke-width="0.6" stroke-dasharray="1.4 0.7" fill="none"/><path d="M25.1 9.4 A417.1 417.1 0 0 0 39.6 82.8" stroke="#000" stroke-opacity="0.46" stroke-width="0.6" stroke-dasharray="1.2 0.9" fill="none"/><path d="M47.9 -1.1 A393.5 393.5 0 0 0 56.3 53.3" stroke="#000" stroke-opacity="0.42" stroke-width="1.3" stroke-dasharray="1.9 0.7" fill="none"/><path d="M23.0 1.2 A418.4 418.4 0 0 0 33.6 65.6" stroke="#000" stroke-opacity="0.56" stroke-width="0.9" stroke-dasharray="1.8 1.2" fill="none"/><path d="M84.7 19.2 A359.3 359.3 0 0 0 91.5 53.4" stroke="#000" stroke-opacity="0.21" stroke-width="1.0" stroke-dasharray="2.0 0.9" fill="none"/><path d="M9.4 9.8 A432.8 432.8 0 0 0 17.9 61.8" stroke="#000" stroke-opacity="0.48" stroke-width="1.2" stroke-dasharray="1.8 1.3" fill="none"/><path d="M32.8 15.7 A410.3 410.3 0 0 0 45.0 76.7" stroke="#000" stroke-opacity="0.54" stroke-width="0.7" stroke-dasharray="1.7 1.2" fill="none"/><path d="M138.9 1.5 A303.2 303.2 0 0 0 158.9 79.5" stroke="#000" stroke-opacity="0.20" stroke-width="0.9" stroke-dasharray="1.8 1.8" fill="none"/><path d="M73.5 3.8 A368.4 368.4 0 0 0 89.6 79.9" stroke="#000" stroke-opacity="0.44" stroke-width="1.2" stroke-dasharray="2.0 0.7" fill="none"/><path d="M61.4 -0.7 A380.1 380.1 0 0 0 73.4 66.5" stroke="#000" stroke-opacity="0.50" stroke-width="1.0" stroke-dasharray="1.1 1.7" fill="none"/><path d="M33.2 22.6 A410.7 410.7 0 0 0 40.8 62.4" stroke="#000" stroke-opacity="0.39" stroke-width="0.7" stroke-dasharray="2.2 0.7" fill="none"/><path d="M39.4 25.5 A405.0 405.0 0 0 0 50.6 77.3" stroke="#000" stroke-opacity="0.46" stroke-width="1.1" stroke-dasharray="1.5 1.5" fill="none"/><path d="M63.5 -0.1 A378.0 378.0 0 0 0 67.2 28.1" stroke="#000" stroke-opacity="0.50" stroke-width="0.6" stroke-dasharray="1.9 1.7" fill="none"/><path d="M127.9 15.9 A316.0 316.0 0 0 0 144.4 77.7" stroke="#000" stroke-opacity="0.55" stroke-width="0.6" stroke-dasharray="1.0 1.1" fill="none"/><path d="M71.0 26.6 A373.9 373.9 0 0 0 84.5 82.0" stroke="#000" stroke-opacity="0.35" stroke-width="0.9" stroke-dasharray="1.3 1.2" fill="none"/><path d="M79.4 24.9 A365.4 365.4 0 0 0 89.0 67.5" stroke="#000" stroke-opacity="0.39" stroke-width="0.9" stroke-dasharray="2.1 0.7" fill="none"/><path d="M47.3 8.0 A394.9 394.9 0 0 0 60.8 76.4" stroke="#000" stroke-opacity="0.36" stroke-width="1.2" stroke-dasharray="0.9 1.5" fill="none"/><path d="M138.3 24.2 A307.3 307.3 0 0 0 153.9 78.2" stroke="#000" stroke-opacity="0.52" stroke-width="1.0" stroke-dasharray="1.2 0.9" fill="none"/><path d="M73.6 -3.7 A367.7 367.7 0 0 0 88.4 73.5" stroke="#000" stroke-opacity="0.53" stroke-width="0.8" stroke-dasharray="1.3 1.0" fill="none"/><path d="M108.0 1.4 A333.9 333.9 0 0 0 117.5 52.4" stroke="#000" stroke-opacity="0.38" stroke-width="0.7" stroke-dasharray="2.1 1.9" fill="none"/><path d="M-0.8 -0.5 A442.1 442.1 0 0 0 4.7 43.4" stroke="#000" stroke-opacity="0.30" stroke-width="0.7" stroke-dasharray="1.7 1.1" fill="none"/><path d="M-15.1 -0.4 A456.3 456.3 0 0 0 -4.7 68.2" stroke="#000" stroke-opacity="0.52" stroke-width="1.0" stroke-dasharray="1.4 1.8" fill="none"/><path d="M151.5 19.8 A293.5 293.5 0 0 0 166.5 72.6" stroke="#000" stroke-opacity="0.58" stroke-width="1.1" stroke-dasharray="1.9 1.8" fill="none"/><path d="M-4.2 16.6 A447.0 447.0 0 0 0 8.4 82.6" stroke="#000" stroke-opacity="0.32" stroke-width="1.0" stroke-dasharray="1.7 1.1" fill="none"/><path d="M126.5 15.9 A317.5 317.5 0 0 0 137.1 61.2" stroke="#000" stroke-opacity="0.56" stroke-width="0.6" stroke-dasharray="2.1 0.8" fill="none"/><path d="M178.4 11.0 A265.4 265.4 0 0 0 190.5 56.4" stroke="#000" stroke-opacity="0.57" stroke-width="1.2" stroke-dasharray="1.9 1.2" fill="none"/><path d="M77.8 6.9 A364.5 364.5 0 0 0 86.3 54.2" stroke="#000" stroke-opacity="0.46" stroke-width="0.6" stroke-dasharray="1.2 1.9" fill="none"/><path d="M160.7 6.4 A282.2 282.2 0 0 0 168.0 40.9" stroke="#000" stroke-opacity="0.30" stroke-width="0.8" stroke-dasharray="1.2 1.1" fill="none"/><path d="M74.9 11.6 A367.9 367.9 0 0 0 83.2 56.0" stroke="#000" stroke-opacity="0.51" stroke-width="0.5" stroke-dasharray="1.0 1.8" fill="none"/><path d="M134.9 -2.2 A306.8 306.8 0 0 0 149.9 65.8" stroke="#000" stroke-opacity="0.41" stroke-width="1.2" stroke-dasharray="1.3 1.7" fill="none"/><path d="M-58.9 14.5 A501.3 501.3 0 0 0 -52.1 61.7" stroke="#000" stroke-opacity="0.45" stroke-width="0.8" stroke-dasharray="2.0 1.4" fill="none"/><path d="M176.2 28.6 A271.2 271.2 0 0 0 195.2 82.5" stroke="#000" stroke-opacity="0.60" stroke-width="1.2" stroke-dasharray="1.4 1.2" fill="none"/><path d="M91.1 -3.8 A350.2 350.2 0 0 0 107.3 75.3" stroke="#000" stroke-opacity="0.57" stroke-width="1.0" stroke-dasharray="2.1 0.7" fill="none"/><path d="M75.7 -4.8 A365.5 365.5 0 0 0 87.9 64.1" stroke="#000" stroke-opacity="0.24" stroke-width="0.8" stroke-dasharray="1.0 0.8" fill="none"/><path d="M176.1 -3.6 A265.6 265.6 0 0 0 190.8 58.0" stroke="#000" stroke-opacity="0.56" stroke-width="0.7" stroke-dasharray="1.5 1.4" fill="none"/><path d="M138.9 -2.8 A302.7 302.7 0 0 0 149.5 50.9" stroke="#000" stroke-opacity="0.28" stroke-width="1.2" stroke-dasharray="2.0 1.3" fill="none"/><path d="M88.2 -0.2 A353.5 353.5 0 0 0 97.3 52.7" stroke="#000" stroke-opacity="0.25" stroke-width="0.6" stroke-dasharray="1.1 0.7" fill="none"/><path d="M53.5 21.3 A390.4 390.4 0 0 0 63.0 67.6" stroke="#000" stroke-opacity="0.54" stroke-width="1.2" stroke-dasharray="1.8 1.3" fill="none"/><path d="M82.0 6.8 A360.3 360.3 0 0 0 97.0 76.3" stroke="#000" stroke-opacity="0.28" stroke-width="0.8" stroke-dasharray="1.2 1.2" fill="none"/><path d="M92.7 27.9 A352.8 352.8 0 0 0 104.5 75.0" stroke="#000" stroke-opacity="0.52" stroke-width="0.9" stroke-dasharray="1.5 1.0" fill="none"/><path d="M105.4 12.5 A337.8 337.8 0 0 0 120.6 75.9" stroke="#000" stroke-opacity="0.46" stroke-width="0.5" stroke-dasharray="1.6 0.9" fill="none"/><path d="M68.4 15.3 A374.8 374.8 0 0 0 80.6 72.3" stroke="#000" stroke-opacity="0.45" stroke-width="1.1" stroke-dasharray="1.8 1.3" fill="none"/><path d="M82.5 5.7 A359.7 359.7 0 0 0 97.6 76.2" stroke="#000" stroke-opacity="0.22" stroke-width="0.7" stroke-dasharray="1.0 1.5" fill="none"/><path d="M-12.9 44.8 A459.7 459.7 0 0 0 -5.2 80.8" stroke="#000" stroke-opacity="0.59" stroke-width="1.2" stroke-dasharray="1.4 1.0" fill="none"/><path d="M109.0 38.0 A338.8 338.8 0 0 0 120.5 78.6" stroke="#000" stroke-opacity="0.43" stroke-width="0.8" stroke-dasharray="1.4 1.6" fill="none"/><path d="M3.1 -1.7 A438.1 438.1 0 0 0 12.1 59.8" stroke="#000" stroke-opacity="0.48" stroke-width="0.7" stroke-dasharray="2.1 0.9" fill="none"/><path d="M26.3 26.6 A418.2 418.2 0 0 0 37.8 80.5" stroke="#000" stroke-opacity="0.28" stroke-width="1.1" stroke-dasharray="1.8 1.7" fill="none"/><path d="M59.1 8.2 A383.2 383.2 0 0 0 68.2 58.8" stroke="#000" stroke-opacity="0.39" stroke-width="0.7" stroke-dasharray="1.1 1.3" fill="none"/><path d="M8.6 2.8 A433.0 433.0 0 0 0 14.5 45.8" stroke="#000" stroke-opacity="0.44" stroke-width="1.2" stroke-dasharray="1.1 1.5" fill="none"/><path d="M82.0 5.3 A360.1 360.1 0 0 0 97.9 78.4" stroke="#000" stroke-opacity="0.32" stroke-width="0.7" stroke-dasharray="2.0 1.0" fill="none"/><path d="M92.4 9.7 A350.3 350.3 0 0 0 100.7 52.9" stroke="#000" stroke-opacity="0.30" stroke-width="1.1" stroke-dasharray="1.3 1.2" fill="none"/><path d="M46.1 -4.7 A395.0 395.0 0 0 0 57.9 66.1" stroke="#000" stroke-opacity="0.43" stroke-width="0.6" stroke-dasharray="1.0 1.4" fill="none"/><path d="M128.5 3.8 A313.8 313.8 0 0 0 147.1 78.5" stroke="#000" stroke-opacity="0.40" stroke-width="1.1" stroke-dasharray="2.1 0.8" fill="none"/><path d="M95.3 5.1 A346.9 346.9 0 0 0 113.2 82.2" stroke="#000" stroke-opacity="0.28" stroke-width="1.1" stroke-dasharray="2.0 1.4" fill="none"/><path d="M34.9 -1.8 A406.4 406.4 0 0 0 39.7 36.2" stroke="#000" stroke-opacity="0.47" stroke-width="0.6" stroke-dasharray="1.7 1.1" fill="none"/><path d="M64.2 -0.9 A377.2 377.2 0 0 0 79.4 76.9" stroke="#000" stroke-opacity="0.39" stroke-width="0.8" stroke-dasharray="1.1 0.9" fill="none"/><path d="M78.4 3.0 A363.5 363.5 0 0 0 94.6 79.3" stroke="#000" stroke-opacity="0.22" stroke-width="1.1" stroke-dasharray="1.4 1.3" fill="none"/><path d="M52.0 13.3 A390.9 390.9 0 0 0 62.3 66.7" stroke="#000" stroke-opacity="0.51" stroke-width="1.0" stroke-dasharray="1.8 1.6" fill="none"/><path d="M123.8 3.0 A318.3 318.3 0 0 0 129.6 36.7" stroke="#000" stroke-opacity="0.33" stroke-width="0.9" stroke-dasharray="1.7 1.5" fill="none"/><path d="M81.5 26.9 A363.6 363.6 0 0 0 88.4 58.6" stroke="#000" stroke-opacity="0.23" stroke-width="1.0" stroke-dasharray="1.4 0.8" fill="none"/><path d="M40.7 -0.8 A400.7 400.7 0 0 0 54.6 75.6" stroke="#000" stroke-opacity="0.34" stroke-width="1.2" stroke-dasharray="1.6 0.7" fill="none"/><path d="M28.2 35.6 A417.6 417.6 0 0 0 38.5 80.8" stroke="#000" stroke-opacity="0.45" stroke-width="1.1" stroke-dasharray="2.1 1.3" fill="none"/><path d="M112.2 -4.9 A329.1 329.1 0 0 0 126.5 66.3" stroke="#000" stroke-opacity="0.47" stroke-width="1.3" stroke-dasharray="1.8 1.8" fill="none"/><path d="M78.3 15.5 A365.1 365.1 0 0 0 90.2 70.4" stroke="#000" stroke-opacity="0.37" stroke-width="0.8" stroke-dasharray="1.9 0.8" fill="none"/><path d="M-33.6 7.2 A475.4 475.4 0 0 0 -22.2 77.2" stroke="#000" stroke-opacity="0.32" stroke-width="1.2" stroke-dasharray="0.9 0.9" fill="none"/><path d="M0.9 0.9 A440.5 440.5 0 0 0 13.1 74.6" stroke="#000" stroke-opacity="0.56" stroke-width="0.6" stroke-dasharray="1.6 0.7" fill="none"/><path d="M73.3 15.4 A370.0 370.0 0 0 0 83.0 63.3" stroke="#000" stroke-opacity="0.31" stroke-width="1.0" stroke-dasharray="0.9 1.3" fill="none"/><path d="M79.0 32.4 A367.0 367.0 0 0 0 91.0 79.7" stroke="#000" stroke-opacity="0.25" stroke-width="0.8" stroke-dasharray="1.4 1.1" fill="none"/><path d="M18.9 12.0 A423.6 423.6 0 0 0 27.3 61.8" stroke="#000" stroke-opacity="0.58" stroke-width="1.1" stroke-dasharray="1.7 0.8" fill="none"/><path d="M45.9 14.5 A397.0 397.0 0 0 0 51.5 47.9" stroke="#000" stroke-opacity="0.21" stroke-width="1.1" stroke-dasharray="2.2 1.5" fill="none"/><path d="M70.6 11.0 A372.1 372.1 0 0 0 80.5 62.0" stroke="#000" stroke-opacity="0.31" stroke-width="0.7" stroke-dasharray="1.9 1.9" fill="none"/><path d="M120.8 -4.2 A320.6 320.6 0 0 0 132.3 55.7" stroke="#000" stroke-opacity="0.32" stroke-width="1.2" stroke-dasharray="2.2 1.4" fill="none"/><path d="M55.9 3.9 A386.0 386.0 0 0 0 67.8 68.1" stroke="#000" stroke-opacity="0.54" stroke-width="0.9" stroke-dasharray="1.7 1.4" fill="none"/><path d="M40.2 30.9 A405.0 405.0 0 0 0 51.7 81.3" stroke="#000" stroke-opacity="0.50" stroke-width="0.8" stroke-dasharray="1.5 1.9" fill="none"/><path d="M3.7 28.5 A440.8 440.8 0 0 0 9.6 61.0" stroke="#000" stroke-opacity="0.45" stroke-width="0.9" stroke-dasharray="2.1 2.0" fill="none"/><path d="M-27.8 17.5 A470.6 470.6 0 0 0 -17.5 76.3" stroke="#000" stroke-opacity="0.48" stroke-width="0.8" stroke-dasharray="1.9 1.1" fill="none"/><path d="M35.8 15.2 A407.2 407.2 0 0 0 44.6 63.3" stroke="#000" stroke-opacity="0.60" stroke-width="1.1" stroke-dasharray="1.4 1.9" fill="none"/><path d="M12.4 21.3 A431.2 431.2 0 0 0 21.3 69.0" stroke="#000" stroke-opacity="0.51" stroke-width="1.2" stroke-dasharray="1.7 1.5" fill="none"/><path d="M129.4 48.1 A321.2 321.2 0 0 0 139.6 79.9" stroke="#000" stroke-opacity="0.34" stroke-width="1.0" stroke-dasharray="1.8 0.9" fill="none"/><path d="M82.6 -1.4 A358.9 358.9 0 0 0 89.4 42.8" stroke="#000" stroke-opacity="0.44" stroke-width="0.8" stroke-dasharray="2.1 1.2" fill="none"/><path d="M83.9 20.8 A360.3 360.3 0 0 0 96.0 73.1" stroke="#000" stroke-opacity="0.22" stroke-width="0.8" stroke-dasharray="1.5 1.9" fill="none"/><path d="M71.4 5.0 A370.6 370.6 0 0 0 86.6 77.6" stroke="#000" stroke-opacity="0.43" stroke-width="0.7" stroke-dasharray="1.7 0.8" fill="none"/><path d="M100.1 6.1 A342.2 342.2 0 0 0 114.3 70.9" stroke="#000" stroke-opacity="0.31" stroke-width="0.9" stroke-dasharray="1.6 0.9" fill="none"/><path d="M15.1 -3.2 A426.0 426.0 0 0 0 28.2 75.1" stroke="#000" stroke-opacity="0.30" stroke-width="1.1" stroke-dasharray="1.8 0.9" fill="none"/><path d="M77.8 10.9 A364.9 364.9 0 0 0 89.7 68.4" stroke="#000" stroke-opacity="0.26" stroke-width="0.8" stroke-dasharray="1.5 1.1" fill="none"/><path d="M170.5 31.7 A277.4 277.4 0 0 0 182.2 68.3" stroke="#000" stroke-opacity="0.57" stroke-width="1.2" stroke-dasharray="1.7 1.7" fill="none"/><path d="M88.1 0.3 A353.5 353.5 0 0 0 91.8 27.2" stroke="#000" stroke-opacity="0.51" stroke-width="0.7" stroke-dasharray="1.1 1.2" fill="none"/><path d="M151.7 49.4 A300.1 300.1 0 0 0 160.7 75.8" stroke="#000" stroke-opacity="0.32" stroke-width="1.0" stroke-dasharray="1.5 0.8" fill="none"/><path d="M108.6 2.1 A333.3 333.3 0 0 0 125.0 75.0" stroke="#000" stroke-opacity="0.58" stroke-width="0.6" stroke-dasharray="1.0 1.3" fill="none"/><path d="M147.5 5.3 A295.1 295.1 0 0 0 165.5 74.4" stroke="#000" stroke-opacity="0.52" stroke-width="0.7" stroke-dasharray="0.8 1.8" fill="none"/><path d="M49.0 9.4 A393.4 393.4 0 0 0 59.8 66.9" stroke="#000" stroke-opacity="0.28" stroke-width="0.5" stroke-dasharray="1.3 1.7" fill="none"/><path d="M85.4 26.1 A359.7 359.7 0 0 0 94.0 64.5" stroke="#000" stroke-opacity="0.45" stroke-width="1.1" stroke-dasharray="1.7 1.8" fill="none"/><path d="M79.8 0.8 A361.8 361.8 0 0 0 84.6 34.0" stroke="#000" stroke-opacity="0.51" stroke-width="0.9" stroke-dasharray="2.1 2.0" fill="none"/><path d="M64.6 5.4 A377.4 377.4 0 0 0 75.7 64.5" stroke="#000" stroke-opacity="0.58" stroke-width="1.1" stroke-dasharray="1.1 1.4" fill="none"/><path d="M139.6 15.9 A304.5 304.5 0 0 0 157.6 79.9" stroke="#000" stroke-opacity="0.50" stroke-width="0.6" stroke-dasharray="1.8 2.0" fill="none"/><path d="M77.6 5.9 A364.6 364.6 0 0 0 87.2 58.0" stroke="#000" stroke-opacity="0.23" stroke-width="1.0" stroke-dasharray="2.1 0.8" fill="none"/><path d="M105.0 -2.3 A336.5 336.5 0 0 0 119.7 69.1" stroke="#000" stroke-opacity="0.32" stroke-width="1.0" stroke-dasharray="2.0 1.4" fill="none"/><path d="M43.1 2.3 A398.6 398.6 0 0 0 57.4 77.8" stroke="#000" stroke-opacity="0.51" stroke-width="0.7" stroke-dasharray="1.3 0.7" fill="none"/><path d="M26.0 17.7 A417.2 417.2 0 0 0 38.3 78.6" stroke="#000" stroke-opacity="0.33" stroke-width="1.2" stroke-dasharray="1.7 1.1" fill="none"/><path d="M88.8 2.5 A353.1 353.1 0 0 0 105.5 79.3" stroke="#000" stroke-opacity="0.22" stroke-width="1.0" stroke-dasharray="1.3 1.2" fill="none"/><path d="M79.2 25.4 A365.7 365.7 0 0 0 92.5 79.9" stroke="#000" stroke-opacity="0.23" stroke-width="1.2" stroke-dasharray="1.8 0.8" fill="none"/><path d="M108.8 15.9 A334.9 334.9 0 0 0 123.3 74.9" stroke="#000" stroke-opacity="0.41" stroke-width="0.8" stroke-dasharray="1.5 0.9" fill="none"/><path d="M52.0 12.3 A390.8 390.8 0 0 0 58.6 51.1" stroke="#000" stroke-opacity="0.36" stroke-width="1.0" stroke-dasharray="1.8 1.0" fill="none"/><path d="M82.7 5.1 A359.4 359.4 0 0 0 90.5 49.7" stroke="#000" stroke-opacity="0.26" stroke-width="1.3" stroke-dasharray="2.1 1.8" fill="none"/><path d="M84.4 14.8 A359.0 359.0 0 0 0 92.8 57.3" stroke="#000" stroke-opacity="0.20" stroke-width="0.8" stroke-dasharray="1.8 1.8" fill="none"/><path d="M95.0 44.5 A353.8 353.8 0 0 0 102.0 70.7" stroke="#000" stroke-opacity="0.35" stroke-width="0.8" stroke-dasharray="1.0 1.0" fill="none"/><path d="M70.9 23.3 A373.5 373.5 0 0 0 83.3 76.8" stroke="#000" stroke-opacity="0.32" stroke-width="0.8" stroke-dasharray="1.5 1.8" fill="none"/><path d="M104.0 -3.3 A337.4 337.4 0 0 0 120.8 75.3" stroke="#000" stroke-opacity="0.52" stroke-width="0.7" stroke-dasharray="1.6 1.3" fill="none"/><path d="M69.9 52.2 A380.0 380.0 0 0 0 77.1 78.7" stroke="#000" stroke-opacity="0.55" stroke-width="0.9" stroke-dasharray="0.9 1.8" fill="none"/><path d="M88.5 18.9 A355.4 355.4 0 0 0 100.1 70.1" stroke="#000" stroke-opacity="0.26" stroke-width="0.7" stroke-dasharray="1.9 1.6" fill="none"/><path d="M-46.8 2.5 A488.1 488.1 0 0 0 -35.6 75.9" stroke="#000" stroke-opacity="0.56" stroke-width="0.6" stroke-dasharray="0.9 1.7" fill="none"/><path d="M124.4 20.9 A320.3 320.3 0 0 0 138.5 74.3" stroke="#000" stroke-opacity="0.47" stroke-width="0.7" stroke-dasharray="1.9 0.7" fill="none"/><path d="M124.8 41.2 A324.1 324.1 0 0 0 137.7 82.9" stroke="#000" stroke-opacity="0.49" stroke-width="1.1" stroke-dasharray="2.1 1.9" fill="none"/><path d="M33.9 4.2 A407.9 407.9 0 0 0 46.7 74.2" stroke="#000" stroke-opacity="0.30" stroke-width="0.7" stroke-dasharray="1.2 0.6" fill="none"/><path d="M-10.4 41.5 A456.7 456.7 0 0 0 -4.6 70.4" stroke="#000" stroke-opacity="0.28" stroke-width="0.8" stroke-dasharray="1.2 1.9" fill="none"/><path d="M131.4 2.0 A310.7 310.7 0 0 0 141.9 53.6" stroke="#000" stroke-opacity="0.22" stroke-width="0.8" stroke-dasharray="2.2 1.2" fill="none"/><path d="M82.1 14.0 A361.1 361.1 0 0 0 90.6 57.5" stroke="#000" stroke-opacity="0.29" stroke-width="0.8" stroke-dasharray="1.8 0.8" fill="none"/><path d="M62.5 25.6 A382.1 382.1 0 0 0 71.6 67.6" stroke="#000" stroke-opacity="0.27" stroke-width="1.1" stroke-dasharray="1.4 1.8" fill="none"/><path d="M66.0 36.8 A380.6 380.6 0 0 0 77.5 82.0" stroke="#000" stroke-opacity="0.46" stroke-width="1.1" stroke-dasharray="1.5 1.9" fill="none"/><path d="M66.1 12.5 A376.8 376.8 0 0 0 78.2 71.3" stroke="#000" stroke-opacity="0.24" stroke-width="0.5" stroke-dasharray="1.1 1.6" fill="none"/><path d="M81.6 -3.2 A359.7 359.7 0 0 0 85.2 25.2" stroke="#000" stroke-opacity="0.30" stroke-width="0.5" stroke-dasharray="1.6 1.9" fill="none"/><path d="M-25.9 32.5 A470.6 470.6 0 0 0 -20.2 64.4" stroke="#000" stroke-opacity="0.47" stroke-width="1.0" stroke-dasharray="1.4 0.9" fill="none"/><path d="M131.6 -3.9 A309.9 309.9 0 0 0 142.3 52.0" stroke="#000" stroke-opacity="0.31" stroke-width="0.7" stroke-dasharray="1.1 0.9" fill="none"/><path d="M26.4 -0.4 A415.0 415.0 0 0 0 36.3 62.2" stroke="#000" stroke-opacity="0.56" stroke-width="0.5" stroke-dasharray="2.1 1.4" fill="none"/><path d="M55.0 -1.8 A386.4 386.4 0 0 0 68.2 71.1" stroke="#000" stroke-opacity="0.25" stroke-width="1.1" stroke-dasharray="1.1 0.7" fill="none"/><path d="M142.3 6.4 A300.4 300.4 0 0 0 149.6 43.2" stroke="#000" stroke-opacity="0.31" stroke-width="0.6" stroke-dasharray="1.9 1.4" fill="none"/><path d="M48.6 6.0 A393.5 393.5 0 0 0 64.3 83.0" stroke="#000" stroke-opacity="0.22" stroke-width="0.7" stroke-dasharray="0.9 1.3" fill="none"/><path d="M150.1 5.8 A292.6 292.6 0 0 0 164.5 64.6" stroke="#000" stroke-opacity="0.59" stroke-width="1.0" stroke-dasharray="2.2 1.2" fill="none"/><path d="M117.8 1.6 A324.1 324.1 0 0 0 130.6 62.5" stroke="#000" stroke-opacity="0.45" stroke-width="0.6" stroke-dasharray="1.4 1.4" fill="none"/><path d="M104.7 5.4 A337.6 337.6 0 0 0 110.7 40.3" stroke="#000" stroke-opacity="0.35" stroke-width="1.0" stroke-dasharray="1.4 0.9" fill="none"/><path d="M61.2 9.6 A381.3 381.3 0 0 0 72.4 67.2" stroke="#000" stroke-opacity="0.33" stroke-width="0.5" stroke-dasharray="2.1 0.7" fill="none"/><path d="M98.5 32.0 A347.8 347.8 0 0 0 109.2 73.6" stroke="#000" stroke-opacity="0.57" stroke-width="1.1" stroke-dasharray="1.1 1.8" fill="none"/><path d="M89.0 14.3 A354.4 354.4 0 0 0 101.4 70.4" stroke="#000" stroke-opacity="0.45" stroke-width="1.3" stroke-dasharray="1.9 1.6" fill="none"/><path d="M85.5 7.7 A357.0 357.0 0 0 0 102.4 81.9" stroke="#000" stroke-opacity="0.53" stroke-width="0.6" stroke-dasharray="1.8 1.3" fill="none"/><path d="M61.4 9.9 A381.2 381.2 0 0 0 75.9 78.7" stroke="#000" stroke-opacity="0.32" stroke-width="1.1" stroke-dasharray="0.9 1.6" fill="none"/><path d="M151.6 1.6 A290.5 290.5 0 0 0 156.4 28.9" stroke="#000" stroke-opacity="0.46" stroke-width="1.3" stroke-dasharray="1.5 1.5" fill="none"/><path d="M138.4 1.3 A303.7 303.7 0 0 0 155.1 71.1" stroke="#000" stroke-opacity="0.23" stroke-width="1.2" stroke-dasharray="1.2 1.7" fill="none"/><path d="M-36.1 5.3 A477.7 477.7 0 0 0 -31.8 40.8" stroke="#000" stroke-opacity="0.37" stroke-width="1.2" stroke-dasharray="2.0 2.0" fill="none"/><path d="M2.0 19.8 A441.3 441.3 0 0 0 10.2 66.0" stroke="#000" stroke-opacity="0.29" stroke-width="1.2" stroke-dasharray="1.4 1.3" fill="none"/><path d="M5.5 31.7 A439.5 439.5 0 0 0 14.2 74.8" stroke="#000" stroke-opacity="0.38" stroke-width="0.8" stroke-dasharray="1.8 1.5" fill="none"/><path d="M134.2 21.4 A310.8 310.8 0 0 0 146.9 69.2" stroke="#000" stroke-opacity="0.55" stroke-width="0.5" stroke-dasharray="1.7 1.3" fill="none"/><path d="M9.1 11.1 A433.3 433.3 0 0 0 13.8 44.0" stroke="#000" stroke-opacity="0.50" stroke-width="1.2" stroke-dasharray="2.2 1.7" fill="none"/><path d="M84.8 17.2 A358.8 358.8 0 0 0 99.7 79.8" stroke="#000" stroke-opacity="0.50" stroke-width="0.7" stroke-dasharray="1.8 1.1" fill="none"/><path d="M45.2 10.8 A397.4 397.4 0 0 0 58.1 75.7" stroke="#000" stroke-opacity="0.25" stroke-width="1.0" stroke-dasharray="0.9 0.9" fill="none"/><path d="M100.7 -1.0 A340.9 340.9 0 0 0 114.2 66.1" stroke="#000" stroke-opacity="0.40" stroke-width="0.8" stroke-dasharray="0.9 1.2" fill="none"/><path d="M50.2 -3.3 A391.0 391.0 0 0 0 62.7 68.4" stroke="#000" stroke-opacity="0.32" stroke-width="0.5" stroke-dasharray="1.1 1.0" fill="none"/><path d="M102.1 14.3 A341.3 341.3 0 0 0 113.7 66.2" stroke="#000" stroke-opacity="0.40" stroke-width="1.3" stroke-dasharray="2.1 0.7" fill="none"/><path d="M59.0 17.3 A384.4 384.4 0 0 0 70.3 71.5" stroke="#000" stroke-opacity="0.41" stroke-width="1.2" stroke-dasharray="0.9 1.2" fill="none"/><path d="M83.6 -0.7 A357.9 357.9 0 0 0 94.3 58.7" stroke="#000" stroke-opacity="0.42" stroke-width="0.6" stroke-dasharray="1.1 1.1" fill="none"/><path d="M97.1 13.2 A346.2 346.2 0 0 0 110.4 71.8" stroke="#000" stroke-opacity="0.45" stroke-width="0.8" stroke-dasharray="2.2 1.4" fill="none"/><path d="M106.1 24.9 A339.1 339.1 0 0 0 121.3 81.7" stroke="#000" stroke-opacity="0.48" stroke-width="0.5" stroke-dasharray="1.9 0.9" fill="none"/><path d="M84.3 -1.8 A357.2 357.2 0 0 0 89.6 35.2" stroke="#000" stroke-opacity="0.51" stroke-width="0.9" stroke-dasharray="1.6 1.6" fill="none"/><path d="M33.4 3.4 A408.3 408.3 0 0 0 42.2 58.0" stroke="#000" stroke-opacity="0.30" stroke-width="1.1" stroke-dasharray="1.3 1.6" fill="none"/><path d="M93.9 24.6 A351.0 351.0 0 0 0 106.5 75.3" stroke="#000" stroke-opacity="0.33" stroke-width="0.5" stroke-dasharray="2.0 1.6" fill="none"/><path d="M115.1 19.5 A329.3 329.3 0 0 0 127.0 68.3" stroke="#000" stroke-opacity="0.55" stroke-width="0.7" stroke-dasharray="1.9 1.9" fill="none"/><path d="M46.5 5.0 A395.5 395.5 0 0 0 50.2 32.6" stroke="#000" stroke-opacity="0.46" stroke-width="0.7" stroke-dasharray="2.1 0.7" fill="none"/><path d="M4.3 -0.1 A437.1 437.1 0 0 0 10.1 44.5" stroke="#000" stroke-opacity="0.47" stroke-width="0.7" stroke-dasharray="2.1 1.8" fill="none"/><path d="M157.2 15.2 A287.0 287.0 0 0 0 171.6 67.6" stroke="#000" stroke-opacity="0.51" stroke-width="0.7" stroke-dasharray="1.6 1.3" fill="none"/><path d="M22.9 11.5 A419.6 419.6 0 0 0 30.7 58.5" stroke="#000" stroke-opacity="0.60" stroke-width="0.9" stroke-dasharray="0.9 1.2" fill="none"/><path d="M51.9 -2.9 A389.3 389.3 0 0 0 62.2 59.9" stroke="#000" stroke-opacity="0.37" stroke-width="0.9" stroke-dasharray="2.0 1.0" fill="none"/><path d="M74.9 14.2 A368.3 368.3 0 0 0 85.8 66.9" stroke="#000" stroke-opacity="0.45" stroke-width="1.2" stroke-dasharray="1.1 1.8" fill="none"/><path d="M60.7 -0.3 A380.7 380.7 0 0 0 73.8 70.3" stroke="#000" stroke-opacity="0.21" stroke-width="1.2" stroke-dasharray="2.2 1.5" fill="none"/><path d="M42.6 16.7 A400.7 400.7 0 0 0 55.3 78.0" stroke="#000" stroke-opacity="0.31" stroke-width="0.8" stroke-dasharray="1.2 1.0" fill="none"/><path d="M91.0 -3.6 A350.4 350.4 0 0 0 94.4 23.6" stroke="#000" stroke-opacity="0.27" stroke-width="1.1" stroke-dasharray="1.6 1.7" fill="none"/><path d="M118.2 1.3 A323.7 323.7 0 0 0 122.6 29.4" stroke="#000" stroke-opacity="0.36" stroke-width="0.6" stroke-dasharray="1.2 1.0" fill="none"/><path d="M28.7 2.3 A412.9 412.9 0 0 0 43.1 79.6" stroke="#000" stroke-opacity="0.37" stroke-width="0.8" stroke-dasharray="0.9 1.2" fill="none"/><path d="M-14.2 23.8 A457.9 457.9 0 0 0 -5.6 71.3" stroke="#000" stroke-opacity="0.53" stroke-width="1.2" stroke-dasharray="1.4 0.9" fill="none"/><path d="M52.4 4.8 A389.6 389.6 0 0 0 61.4 57.8" stroke="#000" stroke-opacity="0.47" stroke-width="1.2" stroke-dasharray="2.2 1.1" fill="none"/><path d="M75.7 41.6 A372.0 372.0 0 0 0 85.6 79.1" stroke="#000" stroke-opacity="0.45" stroke-width="0.5" stroke-dasharray="0.9 0.9" fill="none"/><path d="M114.4 30.7 A331.9 331.9 0 0 0 126.4 74.8" stroke="#000" stroke-opacity="0.29" stroke-width="0.7" stroke-dasharray="2.1 0.7" fill="none"/><path d="M28.3 13.8 A414.5 414.5 0 0 0 41.5 79.9" stroke="#000" stroke-opacity="0.29" stroke-width="0.7" stroke-dasharray="1.5 1.3" fill="none"/><path d="M61.8 2.2 A379.9 379.9 0 0 0 74.5 69.6" stroke="#000" stroke-opacity="0.58" stroke-width="0.9" stroke-dasharray="0.8 1.2" fill="none"/><path d="M111.1 11.0 A332.0 332.0 0 0 0 124.4 69.0" stroke="#000" stroke-opacity="0.31" stroke-width="0.6" stroke-dasharray="1.2 1.5" fill="none"/><path d="M159.0 -4.2 A282.6 282.6 0 0 0 173.2 59.2" stroke="#000" stroke-opacity="0.51" stroke-width="1.1" stroke-dasharray="1.8 1.3" fill="none"/><path d="M133.4 16.5 A310.8 310.8 0 0 0 145.7 65.8" stroke="#000" stroke-opacity="0.52" stroke-width="1.0" stroke-dasharray="1.9 1.0" fill="none"/><path d="M57.6 23.8 A386.7 386.7 0 0 0 65.6 62.6" stroke="#000" stroke-opacity="0.21" stroke-width="0.9" stroke-dasharray="1.8 1.9" fill="none"/><path d="M95.9 29.3 A349.8 349.8 0 0 0 102.0 56.3" stroke="#000" stroke-opacity="0.34" stroke-width="0.8" stroke-dasharray="1.6 1.7" fill="none"/><path d="M49.1 21.3 A394.8 394.8 0 0 0 57.7 64.8" stroke="#000" stroke-opacity="0.45" stroke-width="1.0" stroke-dasharray="1.6 1.3" fill="none"/><path d="M153.6 4.9 A289.0 289.0 0 0 0 160.8 40.8" stroke="#000" stroke-opacity="0.47" stroke-width="0.9" stroke-dasharray="1.3 0.7" fill="none"/><path d="M80.0 -0.3 A361.6 361.6 0 0 0 86.2 40.7" stroke="#000" stroke-opacity="0.48" stroke-width="0.7" stroke-dasharray="1.3 1.2" fill="none"/><path d="M97.2 2.0 A344.7 344.7 0 0 0 103.4 40.4" stroke="#000" stroke-opacity="0.42" stroke-width="0.8" stroke-dasharray="1.8 0.9" fill="none"/><path d="M8.4 7.1 A433.5 433.5 0 0 0 15.2 52.7" stroke="#000" stroke-opacity="0.27" stroke-width="1.1" stroke-dasharray="1.5 1.4" fill="none"/><path d="M129.5 6.1 A313.1 313.1 0 0 0 138.5 50.3" stroke="#000" stroke-opacity="0.53" stroke-width="0.7" stroke-dasharray="1.4 1.2" fill="none"/><path d="M79.2 -4.8 A361.9 361.9 0 0 0 85.4 38.5" stroke="#000" stroke-opacity="0.40" stroke-width="1.0" stroke-dasharray="2.2 1.9" fill="none"/><path d="M94.6 24.0 A350.3 350.3 0 0 0 102.1 58.3" stroke="#000" stroke-opacity="0.47" stroke-width="1.0" stroke-dasharray="0.9 1.2" fill="none"/><path d="M67.8 26.8 A377.1 377.1 0 0 0 78.5 73.4" stroke="#000" stroke-opacity="0.50" stroke-width="0.6" stroke-dasharray="1.5 1.6" fill="none"/><path d="M1.5 4.0 A440.1 440.1 0 0 0 12.3 69.6" stroke="#000" stroke-opacity="0.53" stroke-width="1.0" stroke-dasharray="1.6 1.4" fill="none"/><path d="M-42.3 6.2 A484.0 484.0 0 0 0 -32.7 70.1" stroke="#000" stroke-opacity="0.51" stroke-width="0.8" stroke-dasharray="1.8 1.9" fill="none"/><path d="M132.4 5.9 A310.2 310.2 0 0 0 139.8 44.1" stroke="#000" stroke-opacity="0.22" stroke-width="0.8" stroke-dasharray="1.4 1.7" fill="none"/><path d="M157.7 27.9 A289.0 289.0 0 0 0 171.9 73.8" stroke="#000" stroke-opacity="0.21" stroke-width="0.8" stroke-dasharray="1.0 1.7" fill="none"/><path d="M88.6 31.1 A357.3 357.3 0 0 0 97.6 68.4" stroke="#000" stroke-opacity="0.25" stroke-width="0.5" stroke-dasharray="1.1 0.7" fill="none"/><path d="M88.3 6.7 A354.0 354.0 0 0 0 102.6 73.2" stroke="#000" stroke-opacity="0.33" stroke-width="0.5" stroke-dasharray="1.8 0.9" fill="none"/><path d="M105.6 6.3 A336.8 336.8 0 0 0 119.4 69.2" stroke="#000" stroke-opacity="0.41" stroke-width="0.8" stroke-dasharray="1.8 1.3" fill="none"/><path d="M66.8 -0.5 A374.7 374.7 0 0 0 79.9 69.4" stroke="#000" stroke-opacity="0.34" stroke-width="0.9" stroke-dasharray="1.6 1.7" fill="none"/><path d="M20.5 4.1 A421.2 421.2 0 0 0 28.5 55.6" stroke="#000" stroke-opacity="0.52" stroke-width="1.3" stroke-dasharray="1.7 1.3" fill="none"/><path d="M117.7 24.1 A327.5 327.5 0 0 0 131.3 75.5" stroke="#000" stroke-opacity="0.33" stroke-width="0.9" stroke-dasharray="1.4 1.0" fill="none"/><path d="M38.7 0.4 A402.8 402.8 0 0 0 51.2 71.2" stroke="#000" stroke-opacity="0.23" stroke-width="0.5" stroke-dasharray="1.9 1.2" fill="none"/><path d="M181.9 42.2 A269.1 269.1 0 0 0 192.1 70.7" stroke="#000" stroke-opacity="0.28" stroke-width="1.2" stroke-dasharray="1.3 1.5" fill="none"/><path d="M54.9 0.9 A386.7 386.7 0 0 0 60.8 41.8" stroke="#000" stroke-opacity="0.23" stroke-width="1.0" stroke-dasharray="2.2 0.6" fill="none"/><path d="M48.0 2.6 A393.7 393.7 0 0 0 54.2 44.5" stroke="#000" stroke-opacity="0.21" stroke-width="0.8" stroke-dasharray="0.9 1.3" fill="none"/><path d="M121.4 18.9 A322.9 322.9 0 0 0 136.3 75.9" stroke="#000" stroke-opacity="0.30" stroke-width="1.1" stroke-dasharray="1.8 1.7" fill="none"/><path d="M155.8 0.4 A286.3 286.3 0 0 0 176.1 77.1" stroke="#000" stroke-opacity="0.23" stroke-width="1.2" stroke-dasharray="1.2 1.9" fill="none"/><path d="M123.5 17.5 A320.7 320.7 0 0 0 137.6 72.7" stroke="#000" stroke-opacity="0.46" stroke-width="0.8" stroke-dasharray="1.9 1.3" fill="none"/><path d="M95.5 6.1 A346.9 346.9 0 0 0 107.1 63.6" stroke="#000" stroke-opacity="0.42" stroke-width="0.6" stroke-dasharray="1.2 1.0" fill="none"/><path d="M123.4 31.0 A323.1 323.1 0 0 0 136.9 78.1" stroke="#000" stroke-opacity="0.25" stroke-width="0.9" stroke-dasharray="1.9 1.2" fill="none"/><path d="M79.2 19.3 A364.7 364.7 0 0 0 87.4 59.2" stroke="#000" stroke-opacity="0.32" stroke-width="0.7" stroke-dasharray="0.9 1.7" fill="none"/><path d="M102.0 29.9 A344.0 344.0 0 0 0 110.8 65.8" stroke="#000" stroke-opacity="0.57" stroke-width="0.9" stroke-dasharray="1.2 1.3" fill="none"/><path d="M23.6 6.7 A418.4 418.4 0 0 0 36.4 76.3" stroke="#000" stroke-opacity="0.50" stroke-width="0.5" stroke-dasharray="1.0 0.6" fill="none"/><path d="M61.1 5.2 A380.9 380.9 0 0 0 75.0 74.9" stroke="#000" stroke-opacity="0.49" stroke-width="1.3" stroke-dasharray="1.9 1.6" fill="none"/><path d="M72.7 21.4 A371.4 371.4 0 0 0 85.0 75.3" stroke="#000" stroke-opacity="0.51" stroke-width="0.7" stroke-dasharray="1.9 0.8" fill="none"/><path d="M99.2 2.2 A342.7 342.7 0 0 0 115.3 75.7" stroke="#000" stroke-opacity="0.49" stroke-width="0.6" stroke-dasharray="0.9 1.0" fill="none"/><path d="M53.8 3.3 A388.0 388.0 0 0 0 68.1 76.8" stroke="#000" stroke-opacity="0.41" stroke-width="0.8" stroke-dasharray="1.5 1.6" fill="none"/><path d="M29.4 6.1 A412.6 412.6 0 0 0 36.3 51.1" stroke="#000" stroke-opacity="0.22" stroke-width="0.8" stroke-dasharray="1.7 1.3" fill="none"/><path d="M129.0 4.7 A313.4 313.4 0 0 0 145.0 71.9" stroke="#000" stroke-opacity="0.48" stroke-width="0.9" stroke-dasharray="2.1 1.1" fill="none"/><path d="M74.2 1.5 A367.6 367.6 0 0 0 87.5 70.0" stroke="#000" stroke-opacity="0.26" stroke-width="0.9" stroke-dasharray="1.6 1.0" fill="none"/><path d="M29.7 -0.4 A411.6 411.6 0 0 0 44.1 78.7" stroke="#000" stroke-opacity="0.48" stroke-width="0.8" stroke-dasharray="1.6 1.0" fill="none"/><path d="M107.3 13.9 A336.1 336.1 0 0 0 116.3 56.6" stroke="#000" stroke-opacity="0.42" stroke-width="0.6" stroke-dasharray="1.7 2.0" fill="none"/><path d="M6.8 -0.5 A434.5 434.5 0 0 0 13.9 50.8" stroke="#000" stroke-opacity="0.42" stroke-width="1.0" stroke-dasharray="1.8 1.8" fill="none"/><path d="M173.8 25.5 A272.8 272.8 0 0 0 192.0 79.4" stroke="#000" stroke-opacity="0.44" stroke-width="1.2" stroke-dasharray="1.6 1.6" fill="none"/><path d="M147.4 3.7 A295.1 295.1 0 0 0 168.0 80.3" stroke="#000" stroke-opacity="0.59" stroke-width="0.8" stroke-dasharray="1.1 0.9" fill="none"/><path d="M4.6 31.1 A440.2 440.2 0 0 0 15.2 81.7" stroke="#000" stroke-opacity="0.36" stroke-width="0.5" stroke-dasharray="1.5 1.5" fill="none"/><path d="M44.1 -0.5 A397.3 397.3 0 0 0 55.3 65.3" stroke="#000" stroke-opacity="0.56" stroke-width="0.9" stroke-dasharray="2.1 1.5" fill="none"/><path d="M96.4 -3.6 A344.9 344.9 0 0 0 112.8 75.3" stroke="#000" stroke-opacity="0.43" stroke-width="0.6" stroke-dasharray="2.0 1.8" fill="none"/><path d="M165.0 3.4 A277.5 277.5 0 0 0 183.0 70.7" stroke="#000" stroke-opacity="0.45" stroke-width="0.5" stroke-dasharray="0.9 1.4" fill="none"/><path d="M69.1 14.9 A374.1 374.1 0 0 0 74.1 43.9" stroke="#000" stroke-opacity="0.35" stroke-width="1.2" stroke-dasharray="1.8 1.8" fill="none"/><path d="M78.7 14.1 A364.5 364.5 0 0 0 92.9 77.3" stroke="#000" stroke-opacity="0.29" stroke-width="1.1" stroke-dasharray="1.6 1.5" fill="none"/><path d="M-17.6 -1.2 A458.8 458.8 0 0 0 -7.4 67.6" stroke="#000" stroke-opacity="0.54" stroke-width="0.9" stroke-dasharray="0.9 1.7" fill="none"/><path d="M100.8 12.0 A342.3 342.3 0 0 0 111.3 61.5" stroke="#000" stroke-opacity="0.31" stroke-width="0.7" stroke-dasharray="1.5 1.2" fill="none"/><path d="M52.8 4.6 A389.1 389.1 0 0 0 65.6 71.8" stroke="#000" stroke-opacity="0.36" stroke-width="0.6" stroke-dasharray="1.7 1.6" fill="none"/><path d="M43.4 1.5 A398.2 398.2 0 0 0 56.0 71.4" stroke="#000" stroke-opacity="0.42" stroke-width="1.0" stroke-dasharray="1.3 0.6" fill="none"/><path d="M112.9 -4.3 A328.5 328.5 0 0 0 128.8 71.1" stroke="#000" stroke-opacity="0.43" stroke-width="0.8" stroke-dasharray="1.7 1.1" fill="none"/><path d="M38.5 9.8 A403.9 403.9 0 0 0 44.3 47.2" stroke="#000" stroke-opacity="0.36" stroke-width="0.8" stroke-dasharray="1.4 1.9" fill="none"/><path d="M48.7 20.9 A395.1 395.1 0 0 0 60.2 75.2" stroke="#000" stroke-opacity="0.48" stroke-width="1.3" stroke-dasharray="1.6 1.1" fill="none"/><path d="M60.6 4.8 A381.3 381.3 0 0 0 77.0 82.7" stroke="#000" stroke-opacity="0.25" stroke-width="1.0" stroke-dasharray="1.0 1.0" fill="none"/><path d="M116.7 17.2 A327.3 327.3 0 0 0 126.6 60.6" stroke="#000" stroke-opacity="0.32" stroke-width="0.7" stroke-dasharray="1.1 1.9" fill="none"/><path d="M29.0 39.3 A417.4 417.4 0 0 0 37.1 75.2" stroke="#000" stroke-opacity="0.50" stroke-width="1.1" stroke-dasharray="1.2 1.3" fill="none"/><path d="M37.4 14.7 A405.5 405.5 0 0 0 42.1 44.2" stroke="#000" stroke-opacity="0.35" stroke-width="0.8" stroke-dasharray="2.2 2.0" fill="none"/><path d="M-35.0 16.0 A477.6 477.6 0 0 0 -24.5 77.0" stroke="#000" stroke-opacity="0.54" stroke-width="0.7" stroke-dasharray="1.7 2.0" fill="none"/><path d="M26.7 2.8 A414.9 414.9 0 0 0 39.5 74.3" stroke="#000" stroke-opacity="0.26" stroke-width="0.8" stroke-dasharray="1.7 1.4" fill="none"/><path d="M85.0 0.4 A356.6 356.6 0 0 0 98.9 70.1" stroke="#000" stroke-opacity="0.21" stroke-width="1.0" stroke-dasharray="1.7 1.5" fill="none"/><path d="M145.2 -4.6 A296.3 296.3 0 0 0 155.7 49.5" stroke="#000" stroke-opacity="0.42" stroke-width="0.6" stroke-dasharray="1.5 1.6" fill="none"/><path d="M82.6 24.4 A362.1 362.1 0 0 0 93.8 72.0" stroke="#000" stroke-opacity="0.31" stroke-width="1.0" stroke-dasharray="0.9 1.6" fill="none"/><path d="M-70.0 -1.2 A511.1 511.1 0 0 0 -61.1 66.5" stroke="#000" stroke-opacity="0.52" stroke-width="0.8" stroke-dasharray="1.5 1.0" fill="none"/><path d="M132.6 -1.2 A309.1 309.1 0 0 0 151.6 77.4" stroke="#000" stroke-opacity="0.28" stroke-width="1.1" stroke-dasharray="0.9 1.2" fill="none"/><path d="M207.3 19.4 A238.8 238.8 0 0 0 225.7 71.4" stroke="#000" stroke-opacity="0.26" stroke-width="0.8" stroke-dasharray="0.9 1.8" fill="none"/><path d="M99.8 6.8 A342.6 342.6 0 0 0 117.8 82.6" stroke="#000" stroke-opacity="0.28" stroke-width="0.7" stroke-dasharray="1.0 0.6" fill="none"/><path d="M-28.0 1.4 A469.3 469.3 0 0 0 -21.1 53.5" stroke="#000" stroke-opacity="0.37" stroke-width="0.6" stroke-dasharray="0.8 1.1" fill="none"/><path d="M61.7 51.3 A387.8 387.8 0 0 0 69.8 81.5" stroke="#000" stroke-opacity="0.54" stroke-width="1.3" stroke-dasharray="1.6 1.0" fill="none"/><path d="M104.7 4.7 A337.6 337.6 0 0 0 120.5 75.1" stroke="#000" stroke-opacity="0.51" stroke-width="0.6" stroke-dasharray="2.0 0.8" fill="none"/><path d="M119.6 23.4 A325.5 325.5 0 0 0 135.4 80.6" stroke="#000" stroke-opacity="0.25" stroke-width="0.7" stroke-dasharray="1.9 0.9" fill="none"/><path d="M131.7 2.8 A310.5 310.5 0 0 0 147.8 71.0" stroke="#000" stroke-opacity="0.60" stroke-width="1.2" stroke-dasharray="1.2 0.7" fill="none"/><path d="M202.5 2.8 A240.3 240.3 0 0 0 220.3 63.5" stroke="#000" stroke-opacity="0.20" stroke-width="0.7" stroke-dasharray="2.1 1.6" fill="none"/><path d="M57.4 2.3 A384.3 384.3 0 0 0 71.5 75.2" stroke="#000" stroke-opacity="0.57" stroke-width="1.0" stroke-dasharray="1.8 1.8" fill="none"/><path d="M35.6 17.9 A407.7 407.7 0 0 0 49.1 81.7" stroke="#000" stroke-opacity="0.36" stroke-width="0.8" stroke-dasharray="1.2 1.1" fill="none"/><path d="M57.8 36.4 A388.6 388.6 0 0 0 64.8 67.4" stroke="#000" stroke-opacity="0.57" stroke-width="0.8" stroke-dasharray="1.0 1.7" fill="none"/><path d="M103.1 14.4 A340.3 340.3 0 0 0 113.6 62.4" stroke="#000" stroke-opacity="0.35" stroke-width="0.9" stroke-dasharray="1.7 1.9" fill="none"/><path d="M138.0 27.2 A308.2 308.2 0 0 0 152.6 77.4" stroke="#000" stroke-opacity="0.30" stroke-width="0.9" stroke-dasharray="2.1 1.8" fill="none"/><path d="M56.2 17.0 A387.1 387.1 0 0 0 67.5 71.3" stroke="#000" stroke-opacity="0.51" stroke-width="0.7" stroke-dasharray="2.2 1.7" fill="none"/><path d="M-23.6 11.9 A465.9 465.9 0 0 0 -20.1 39.1" stroke="#000" stroke-opacity="0.55" stroke-width="0.5" stroke-dasharray="1.8 1.0" fill="none"/><path d="M3.5 12.0 A439.0 439.0 0 0 0 7.5 41.2" stroke="#000" stroke-opacity="0.35" stroke-width="1.0" stroke-dasharray="1.9 1.4" fill="none"/><path d="M-35.4 29.6 A479.6 479.6 0 0 0 -28.6 68.3" stroke="#000" stroke-opacity="0.29" stroke-width="0.7" stroke-dasharray="1.6 1.8" fill="none"/><path d="M55.9 25.0 A388.6 388.6 0 0 0 63.3 61.5" stroke="#000" stroke-opacity="0.22" stroke-width="1.1" stroke-dasharray="1.6 1.1" fill="none"/><path d="M37.2 19.8 A406.4 406.4 0 0 0 49.0 77.0" stroke="#000" stroke-opacity="0.28" stroke-width="1.3" stroke-dasharray="2.0 0.9" fill="none"/><path d="M118.9 35.8 A328.6 328.6 0 0 0 130.3 76.0" stroke="#000" stroke-opacity="0.29" stroke-width="1.2" stroke-dasharray="2.0 1.4" fill="none"/><path d="M75.5 29.3 A370.0 370.0 0 0 0 85.9 73.2" stroke="#000" stroke-opacity="0.56" stroke-width="0.9" stroke-dasharray="2.0 1.1" fill="none"/><path d="M2.0 3.3 A439.6 439.6 0 0 0 11.9 65.8" stroke="#000" stroke-opacity="0.52" stroke-width="1.1" stroke-dasharray="1.1 1.2" fill="none"/><path d="M56.6 -1.5 A384.8 384.8 0 0 0 68.9 67.9" stroke="#000" stroke-opacity="0.39" stroke-width="1.2" stroke-dasharray="1.9 1.6" fill="none"/><path d="M68.3 0.7 A373.3 373.3 0 0 0 74.3 40.6" stroke="#000" stroke-opacity="0.59" stroke-width="0.7" stroke-dasharray="1.0 1.6" fill="none"/><circle cx="69.2" cy="21.8" r="25" fill="#0c0c0c"/><ellipse cx="68.2" cy="21.8" rx="9.1" ry="5.2" fill="url(#g2)"/><ellipse cx="68.2" cy="21.8" rx="3.8500000000000005" ry="2.2" fill="#fff"/></svg>
<svg style="left:663px;top:559.5px" width="136" height="78.5" viewBox="0 0 136 78.5"><defs><radialGradient id="g3"><stop offset="0" stop-color="#fff"/><stop offset="0.5" stop-color="#f0f0f0"/><stop offset="1" stop-color="#fff" stop-opacity="0"/></radialGradient></defs><rect width="136" height="78.5" fill="#ffffff"/><path d="M54.1 14.0 A388.9 388.9 0 0 0 66.0 72.6" stroke="#000" stroke-opacity="0.23" stroke-width="0.5" stroke-dasharray="2.0 1.0" fill="none"/><path d="M59.8 -0.7 A381.7 381.7 0 0 0 75.4 78.8" stroke="#000" stroke-opacity="0.53" stroke-width="0.9" stroke-dasharray="1.7 0.8" fill="none"/><path d="M120.3 10.5 A322.7 322.7 0 0 0 136.7 76.3" stroke="#000" stroke-opacity="0.23" stroke-width="1.1" stroke-dasharray="1.6 1.0" fill="none"/><path d="M5.1 2.7 A436.4 436.4 0 0 0 17.4 75.2" stroke="#000" stroke-opacity="0.49" stroke-width="1.2" stroke-dasharray="1.8 1.9" fill="none"/><path d="M67.0 6.0 A375.1 375.1 0 0 0 83.3 82.1" stroke="#000" stroke-opacity="0.24" stroke-width="0.6" stroke-dasharray="1.1 2.0" fill="none"/><path d="M51.8 3.8 A390.0 390.0 0 0 0 62.5 63.8" stroke="#000" stroke-opacity="0.40" stroke-width="0.8" stroke-dasharray="1.3 1.4" fill="none"/><path d="M125.6 6.1 A317.0 317.0 0 0 0 144.9 81.8" stroke="#000" stroke-opacity="0.60" stroke-width="1.0" stroke-dasharray="1.0 1.8" fill="none"/><path d="M96.4 3.1 A345.6 345.6 0 0 0 113.0 77.7" stroke="#000" stroke-opacity="0.49" stroke-width="0.7" stroke-dasharray="2.0 1.4" fill="none"/><path d="M82.1 -4.2 A359.1 359.1 0 0 0 97.9 75.2" stroke="#000" stroke-opacity="0.52" stroke-width="0.8" stroke-dasharray="1.0 1.0" fill="none"/><path d="M117.8 -4.3 A323.6 323.6 0 0 0 133.3 69.0" stroke="#000" stroke-opacity="0.45" stroke-width="0.5" stroke-dasharray="1.8 1.1" fill="none"/><path d="M123.7 -2.2 A317.9 317.9 0 0 0 142.3 77.6" stroke="#000" stroke-opacity="0.23" stroke-width="1.0" stroke-dasharray="0.8 0.9" fill="none"/><path d="M61.1 -0.3 A380.4 380.4 0 0 0 71.2 59.0" stroke="#000" stroke-opacity="0.22" stroke-width="1.2" stroke-dasharray="1.2 1.9" fill="none"/><path d="M99.1 17.5 A344.8 344.8 0 0 0 111.8 71.6" stroke="#000" stroke-opacity="0.44" stroke-width="0.9" stroke-dasharray="1.7 1.9" fill="none"/><path d="M74.1 23.6 A370.4 370.4 0 0 0 85.3 72.9" stroke="#000" stroke-opacity="0.30" stroke-width="0.7" stroke-dasharray="2.2 1.3" fill="none"/><path d="M121.5 -4.4 A319.9 319.9 0 0 0 132.4 53.7" stroke="#000" stroke-opacity="0.45" stroke-width="1.0" stroke-dasharray="0.9 1.5" fill="none"/><path d="M64.0 4.3 A378.0 378.0 0 0 0 75.8 67.1" stroke="#000" stroke-opacity="0.48" stroke-width="1.1" stroke-dasharray="0.8 0.7" fill="none"/><path d="M120.3 17.9 A323.9 323.9 0 0 0 132.8 68.6" stroke="#000" stroke-opacity="0.33" stroke-width="0.8" stroke-dasharray="1.2 1.1" fill="none"/><path d="M107.0 12.7 A336.3 336.3 0 0 0 115.8 55.5" stroke="#000" stroke-opacity="0.51" stroke-width="0.5" stroke-dasharray="1.6 1.6" fill="none"/><path d="M66.5 4.4 A375.4 375.4 0 0 0 72.8 44.0" stroke="#000" stroke-opacity="0.37" stroke-width="1.1" stroke-dasharray="0.9 1.1" fill="none"/><path d="M82.4 2.9 A359.5 359.5 0 0 0 97.1 73.8" stroke="#000" stroke-opacity="0.54" stroke-width="0.6" stroke-dasharray="1.3 1.5" fill="none"/><path d="M101.9 24.9 A343.2 343.2 0 0 0 109.4 58.0" stroke="#000" stroke-opacity="0.28" stroke-width="1.1" stroke-dasharray="2.0 0.9" fill="none"/><path d="M65.8 7.5 A376.5 376.5 0 0 0 80.2 76.8" stroke="#000" stroke-opacity="0.52" stroke-width="0.8" stroke-dasharray="1.0 1.0" fill="none"/><path d="M107.6 12.1 A335.6 335.6 0 0 0 118.1 61.0" stroke="#000" stroke-opacity="0.36" stroke-width="1.2" stroke-dasharray="1.0 0.6" fill="none"/><path d="M121.6 10.4 A321.5 321.5 0 0 0 140.7 83.3" stroke="#000" stroke-opacity="0.37" stroke-width="1.3" stroke-dasharray="2.1 0.9" fill="none"/><path d="M118.9 5.2 A323.5 323.5 0 0 0 130.3 59.7" stroke="#000" stroke-opacity="0.34" stroke-width="0.7" stroke-dasharray="0.9 1.4" fill="none"/><path d="M48.6 -4.1 A392.5 392.5 0 0 0 60.4 65.8" stroke="#000" stroke-opacity="0.56" stroke-width="1.1" stroke-dasharray="2.1 1.9" fill="none"/><path d="M105.7 -1.1 A335.9 335.9 0 0 0 119.2 65.5" stroke="#000" stroke-opacity="0.32" stroke-width="1.0" stroke-dasharray="1.5 1.2" fill="none"/><path d="M107.4 5.3 A334.9 334.9 0 0 0 119.9 64.6" stroke="#000" stroke-opacity="0.30" stroke-width="1.2" stroke-dasharray="1.5 1.7" fill="none"/><path d="M67.0 -1.8 A374.4 374.4 0 0 0 79.9 68.5" stroke="#000" stroke-opacity="0.52" stroke-width="1.2" stroke-dasharray="1.9 1.8" fill="none"/><path d="M23.9 20.0 A419.6 419.6 0 0 0 36.1 79.7" stroke="#000" stroke-opacity="0.22" stroke-width="0.7" stroke-dasharray="1.2 1.3" fill="none"/><path d="M44.0 -1.6 A397.4 397.4 0 0 0 47.1 25.4" stroke="#000" stroke-opacity="0.25" stroke-width="0.6" stroke-dasharray="0.9 2.0" fill="none"/><path d="M115.3 24.4 A329.9 329.9 0 0 0 122.5 55.6" stroke="#000" stroke-opacity="0.33" stroke-width="0.8" stroke-dasharray="1.3 1.5" fill="none"/><path d="M102.2 0.6 A339.6 339.6 0 0 0 109.8 45.2" stroke="#000" stroke-opacity="0.42" stroke-width="1.1" stroke-dasharray="1.3 0.7" fill="none"/><path d="M18.5 20.8 A425.0 425.0 0 0 0 27.2 67.1" stroke="#000" stroke-opacity="0.51" stroke-width="0.8" stroke-dasharray="1.9 1.5" fill="none"/><path d="M54.4 5.5 A387.7 387.7 0 0 0 66.4 69.5" stroke="#000" stroke-opacity="0.48" stroke-width="0.9" stroke-dasharray="1.1 1.4" fill="none"/><path d="M122.1 20.2 A322.5 322.5 0 0 0 128.9 50.8" stroke="#000" stroke-opacity="0.37" stroke-width="1.2" stroke-dasharray="2.1 1.1" fill="none"/><path d="M110.5 -0.3 A331.2 331.2 0 0 0 120.0 51.5" stroke="#000" stroke-opacity="0.53" stroke-width="1.0" stroke-dasharray="2.0 1.7" fill="none"/><path d="M98.4 8.2 A344.2 344.2 0 0 0 113.1 73.8" stroke="#000" stroke-opacity="0.24" stroke-width="1.0" stroke-dasharray="0.8 0.8" fill="none"/><path d="M121.6 45.6 A328.2 328.2 0 0 0 131.1 77.0" stroke="#000" stroke-opacity="0.27" stroke-width="0.5" stroke-dasharray="2.0 0.8" fill="none"/><path d="M111.7 17.4 A332.3 332.3 0 0 0 127.7 79.4" stroke="#000" stroke-opacity="0.58" stroke-width="1.0" stroke-dasharray="1.9 0.7" fill="none"/><path d="M91.9 37.7 A355.4 355.4 0 0 0 100.1 69.7" stroke="#000" stroke-opacity="0.57" stroke-width="0.5" stroke-dasharray="1.3 1.4" fill="none"/><path d="M106.7 4.0 A335.5 335.5 0 0 0 113.7 43.9" stroke="#000" stroke-opacity="0.30" stroke-width="1.0" stroke-dasharray="1.9 1.2" fill="none"/><path d="M54.5 -1.6 A386.8 386.8 0 0 0 61.9 47.6" stroke="#000" stroke-opacity="0.40" stroke-width="1.3" stroke-dasharray="1.4 1.6" fill="none"/><path d="M18.2 14.4 A424.5 424.5 0 0 0 30.4 77.5" stroke="#000" stroke-opacity="0.47" stroke-width="0.9" stroke-dasharray="1.5 1.5" fill="none"/><path d="M113.5 15.8 A330.3 330.3 0 0 0 130.6 81.7" stroke="#000" stroke-opacity="0.41" stroke-width="0.9" stroke-dasharray="1.8 0.9" fill="none"/><path d="M69.9 25.5 A374.9 374.9 0 0 0 77.8 62.6" stroke="#000" stroke-opacity="0.33" stroke-width="0.7" stroke-dasharray="1.8 1.9" fill="none"/><path d="M60.1 4.9 A381.9 381.9 0 0 0 74.5 76.8" stroke="#000" stroke-opacity="0.31" stroke-width="0.7" stroke-dasharray="0.8 1.3" fill="none"/><path d="M53.4 14.3 A389.6 389.6 0 0 0 59.6 50.2" stroke="#000" stroke-opacity="0.33" stroke-width="1.1" stroke-dasharray="1.0 2.0" fill="none"/><path d="M53.7 9.7 A388.7 388.7 0 0 0 68.5 80.4" stroke="#000" stroke-opacity="0.42" stroke-width="0.9" stroke-dasharray="1.8 1.8" fill="none"/><path d="M57.5 17.4 A385.9 385.9 0 0 0 72.1 82.6" stroke="#000" stroke-opacity="0.39" stroke-width="0.7" stroke-dasharray="1.1 1.6" fill="none"/><path d="M134.3 4.6 A308.1 308.1 0 0 0 142.0 44.5" stroke="#000" stroke-opacity="0.30" stroke-width="0.6" stroke-dasharray="1.8 1.8" fill="none"/><path d="M106.8 37.5 A340.8 340.8 0 0 0 117.9 77.2" stroke="#000" stroke-opacity="0.33" stroke-width="0.8" stroke-dasharray="1.8 0.7" fill="none"/><path d="M17.8 20.3 A425.7 425.7 0 0 0 26.1 65.7" stroke="#000" stroke-opacity="0.47" stroke-width="0.5" stroke-dasharray="1.3 1.2" fill="none"/><path d="M57.9 25.1 A386.6 386.6 0 0 0 65.7 62.8" stroke="#000" stroke-opacity="0.58" stroke-width="0.8" stroke-dasharray="1.6 0.8" fill="none"/><path d="M60.9 8.7 A381.5 381.5 0 0 0 76.6 82.2" stroke="#000" stroke-opacity="0.24" stroke-width="1.3" stroke-dasharray="1.3 1.7" fill="none"/><path d="M105.8 26.8 A339.6 339.6 0 0 0 116.3 68.9" stroke="#000" stroke-opacity="0.46" stroke-width="1.1" stroke-dasharray="1.2 1.7" fill="none"/><path d="M103.0 23.1 A341.8 341.8 0 0 0 110.2 55.8" stroke="#000" stroke-opacity="0.34" stroke-width="1.1" stroke-dasharray="1.7 1.4" fill="none"/><path d="M4.4 12.7 A438.1 438.1 0 0 0 15.3 73.5" stroke="#000" stroke-opacity="0.27" stroke-width="1.2" stroke-dasharray="1.7 0.8" fill="none"/><path d="M116.7 9.5 A326.2 326.2 0 0 0 132.3 74.3" stroke="#000" stroke-opacity="0.42" stroke-width="1.0" stroke-dasharray="1.4 1.0" fill="none"/><path d="M22.6 37.1 A423.4 423.4 0 0 0 28.8 67.2" stroke="#000" stroke-opacity="0.50" stroke-width="0.9" stroke-dasharray="1.8 1.1" fill="none"/><path d="M49.3 25.5 A395.2 395.2 0 0 0 54.8 54.4" stroke="#000" stroke-opacity="0.30" stroke-width="1.1" stroke-dasharray="1.3 1.1" fill="none"/><path d="M80.2 21.0 A364.0 364.0 0 0 0 93.0 76.1" stroke="#000" stroke-opacity="0.34" stroke-width="1.2" stroke-dasharray="1.0 1.0" fill="none"/><path d="M23.0 -0.6 A418.3 418.3 0 0 0 33.5 64.8" stroke="#000" stroke-opacity="0.28" stroke-width="0.8" stroke-dasharray="1.8 1.7" fill="none"/><path d="M123.2 -0.4 A318.6 318.6 0 0 0 135.1 58.1" stroke="#000" stroke-opacity="0.36" stroke-width="0.7" stroke-dasharray="1.5 1.4" fill="none"/><path d="M18.0 43.9 A429.1 429.1 0 0 0 24.1 71.8" stroke="#000" stroke-opacity="0.56" stroke-width="1.3" stroke-dasharray="1.3 1.4" fill="none"/><path d="M135.1 23.3 A310.2 310.2 0 0 0 152.7 82.9" stroke="#000" stroke-opacity="0.47" stroke-width="0.7" stroke-dasharray="2.0 1.3" fill="none"/><path d="M108.8 9.2 A334.1 334.1 0 0 0 124.8 76.6" stroke="#000" stroke-opacity="0.40" stroke-width="0.9" stroke-dasharray="1.4 0.9" fill="none"/><path d="M65.1 25.5 A379.5 379.5 0 0 0 70.8 54.0" stroke="#000" stroke-opacity="0.46" stroke-width="0.9" stroke-dasharray="1.6 1.9" fill="none"/><path d="M123.4 -3.5 A318.0 318.0 0 0 0 135.2 56.8" stroke="#000" stroke-opacity="0.34" stroke-width="0.7" stroke-dasharray="0.9 1.4" fill="none"/><path d="M131.8 34.7 A315.8 315.8 0 0 0 144.7 77.9" stroke="#000" stroke-opacity="0.48" stroke-width="0.6" stroke-dasharray="2.0 1.4" fill="none"/><path d="M107.6 30.9 A338.7 338.7 0 0 0 119.5 75.3" stroke="#000" stroke-opacity="0.57" stroke-width="1.2" stroke-dasharray="1.4 1.7" fill="none"/><path d="M45.0 -2.6 A396.2 396.2 0 0 0 49.0 30.2" stroke="#000" stroke-opacity="0.23" stroke-width="0.7" stroke-dasharray="1.0 1.3" fill="none"/><path d="M94.3 3.6 A347.8 347.8 0 0 0 106.6 64.9" stroke="#000" stroke-opacity="0.39" stroke-width="1.1" stroke-dasharray="1.4 0.9" fill="none"/><path d="M104.9 3.9 A337.2 337.2 0 0 0 118.8 68.9" stroke="#000" stroke-opacity="0.35" stroke-width="0.9" stroke-dasharray="1.6 0.9" fill="none"/><path d="M18.0 20.3 A425.5 425.5 0 0 0 23.8 54.6" stroke="#000" stroke-opacity="0.28" stroke-width="0.7" stroke-dasharray="1.0 1.2" fill="none"/><path d="M26.2 1.8 A415.3 415.3 0 0 0 29.6 30.1" stroke="#000" stroke-opacity="0.27" stroke-width="0.9" stroke-dasharray="0.9 0.6" fill="none"/><path d="M50.6 19.2 A393.0 393.0 0 0 0 55.8 48.6" stroke="#000" stroke-opacity="0.36" stroke-width="0.5" stroke-dasharray="2.2 0.9" fill="none"/><path d="M19.3 1.1 A422.2 422.2 0 0 0 27.0 53.2" stroke="#000" stroke-opacity="0.45" stroke-width="0.8" stroke-dasharray="1.0 0.7" fill="none"/><path d="M108.5 30.4 A337.7 337.7 0 0 0 122.5 81.1" stroke="#000" stroke-opacity="0.32" stroke-width="0.7" stroke-dasharray="1.2 1.7" fill="none"/><path d="M131.5 -0.8 A310.3 310.3 0 0 0 139.9 44.8" stroke="#000" stroke-opacity="0.47" stroke-width="1.3" stroke-dasharray="1.6 0.6" fill="none"/><path d="M16.3 -1.7 A424.9 424.9 0 0 0 19.5 27.1" stroke="#000" stroke-opacity="0.46" stroke-width="1.2" stroke-dasharray="1.1 2.0" fill="none"/><path d="M67.7 13.0 A375.2 375.2 0 0 0 83.1 82.0" stroke="#000" stroke-opacity="0.58" stroke-width="0.5" stroke-dasharray="1.2 1.4" fill="none"/><path d="M117.2 -3.0 A324.3 324.3 0 0 0 132.6 69.1" stroke="#000" stroke-opacity="0.36" stroke-width="0.8" stroke-dasharray="1.8 1.9" fill="none"/><path d="M16.9 11.9 A425.6 425.6 0 0 0 29.3 77.6" stroke="#000" stroke-opacity="0.53" stroke-width="0.9" stroke-dasharray="2.1 1.1" fill="none"/><path d="M65.7 5.0 A376.4 376.4 0 0 0 74.9 57.4" stroke="#000" stroke-opacity="0.27" stroke-width="1.1" stroke-dasharray="1.6 1.6" fill="none"/><path d="M81.6 0.7 A360.0 360.0 0 0 0 90.8 53.5" stroke="#000" stroke-opacity="0.48" stroke-width="0.5" stroke-dasharray="1.5 1.7" fill="none"/><path d="M116.8 6.3 A325.7 325.7 0 0 0 134.0 77.6" stroke="#000" stroke-opacity="0.55" stroke-width="1.2" stroke-dasharray="1.4 1.9" fill="none"/><path d="M115.0 11.7 A328.2 328.2 0 0 0 124.5 56.3" stroke="#000" stroke-opacity="0.23" stroke-width="0.8" stroke-dasharray="2.1 0.7" fill="none"/><path d="M112.3 1.8 A329.6 329.6 0 0 0 125.0 63.2" stroke="#000" stroke-opacity="0.22" stroke-width="0.6" stroke-dasharray="1.7 1.4" fill="none"/><path d="M20.1 43.5 A427.0 427.0 0 0 0 29.1 81.9" stroke="#000" stroke-opacity="0.29" stroke-width="0.9" stroke-dasharray="1.4 1.7" fill="none"/><circle cx="67.0" cy="21.5" r="25" fill="#0c0c0c"/><ellipse cx="66.0" cy="21.5" rx="9.1" ry="5.2" fill="url(#g3)"/><ellipse cx="66.0" cy="21.5" rx="3.8500000000000005" ry="2.2" fill="#fff"/></svg>
<svg style="left:844px;top:559.5px" width="136" height="78.5" viewBox="0 0 136 78.5"><defs><radialGradient id="g4"><stop offset="0" stop-color="#fff"/><stop offset="0.5" stop-color="#f0f0f0"/><stop offset="1" stop-color="#fff" stop-opacity="0"/></radialGradient></defs><rect width="136" height="78.5" fill="#ffffff"/><path d="M26.3 -1.4 A415.0 415.0 0 0 0 30.6 33.8" stroke="#000" stroke-opacity="0.36" stroke-width="1.2" stroke-dasharray="1.9 1.7" fill="none"/><path d="M24.7 4.4 A417.1 417.1 0 0 0 33.6 59.7" stroke="#000" stroke-opacity="0.27" stroke-width="0.6" stroke-dasharray="1.1 1.9" fill="none"/><path d="M79.3 11.3 A363.5 363.5 0 0 0 86.0 48.4" stroke="#000" stroke-opacity="0.45" stroke-width="1.1" stroke-dasharray="2.0 1.8" fill="none"/><path d="M0.8 15.2 A442.0 442.0 0 0 0 11.4 73.9" stroke="#000" stroke-opacity="0.40" stroke-width="0.6" stroke-dasharray="1.5 0.7" fill="none"/><path d="M143.4 37.6 A305.1 305.1 0 0 0 156.8 79.5" stroke="#000" stroke-opacity="0.43" stroke-width="1.2" stroke-dasharray="2.0 1.3" fill="none"/><path d="M8.1 8.2 A433.9 433.9 0 0 0 17.9 66.6" stroke="#000" stroke-opacity="0.26" stroke-width="0.7" stroke-dasharray="1.9 0.7" fill="none"/><path d="M12.5 11.0 A429.9 429.9 0 0 0 21.9 66.0" stroke="#000" stroke-opacity="0.34" stroke-width="1.3" stroke-dasharray="1.1 1.2" fill="none"/><path d="M11.6 2.9 A430.0 430.0 0 0 0 21.2 63.3" stroke="#000" stroke-opacity="0.34" stroke-width="1.1" stroke-dasharray="1.2 1.4" fill="none"/><path d="M138.7 33.9 A308.8 308.8 0 0 0 150.0 72.2" stroke="#000" stroke-opacity="0.45" stroke-width="0.7" stroke-dasharray="1.3 0.8" fill="none"/><path d="M77.8 37.2 A369.1 369.1 0 0 0 84.6 65.8" stroke="#000" stroke-opacity="0.56" stroke-width="1.3" stroke-dasharray="1.8 1.9" fill="none"/><path d="M11.1 3.6 A430.5 430.5 0 0 0 22.6 71.5" stroke="#000" stroke-opacity="0.58" stroke-width="1.0" stroke-dasharray="1.9 1.0" fill="none"/><path d="M45.3 0.3 A396.2 396.2 0 0 0 53.0 50.8" stroke="#000" stroke-opacity="0.35" stroke-width="1.3" stroke-dasharray="1.3 0.6" fill="none"/><path d="M27.6 7.6 A414.5 414.5 0 0 0 34.9 53.6" stroke="#000" stroke-opacity="0.24" stroke-width="1.3" stroke-dasharray="1.4 0.9" fill="none"/><path d="M34.9 5.1 A407.0 407.0 0 0 0 38.9 34.9" stroke="#000" stroke-opacity="0.47" stroke-width="0.6" stroke-dasharray="0.9 1.3" fill="none"/><path d="M25.6 21.5 A418.1 418.1 0 0 0 36.6 76.0" stroke="#000" stroke-opacity="0.36" stroke-width="1.3" stroke-dasharray="1.5 0.9" fill="none"/><path d="M19.8 20.6 A423.8 423.8 0 0 0 24.5 49.2" stroke="#000" stroke-opacity="0.30" stroke-width="1.2" stroke-dasharray="2.0 1.3" fill="none"/><path d="M18.1 6.9 A423.9 423.9 0 0 0 23.5 44.8" stroke="#000" stroke-opacity="0.55" stroke-width="0.6" stroke-dasharray="0.9 1.9" fill="none"/><path d="M79.6 -1.2 A361.9 361.9 0 0 0 95.9 78.1" stroke="#000" stroke-opacity="0.56" stroke-width="1.0" stroke-dasharray="1.9 1.6" fill="none"/><path d="M78.4 9.3 A364.2 364.2 0 0 0 94.8 82.0" stroke="#000" stroke-opacity="0.57" stroke-width="0.8" stroke-dasharray="1.7 1.7" fill="none"/><path d="M75.2 5.1 A366.8 366.8 0 0 0 89.7 74.9" stroke="#000" stroke-opacity="0.46" stroke-width="1.0" stroke-dasharray="1.2 1.9" fill="none"/><path d="M147.6 2.5 A294.6 294.6 0 0 0 168.3 80.1" stroke="#000" stroke-opacity="0.22" stroke-width="1.2" stroke-dasharray="1.0 2.0" fill="none"/><path d="M86.5 5.0 A355.7 355.7 0 0 0 91.1 35.2" stroke="#000" stroke-opacity="0.45" stroke-width="1.0" stroke-dasharray="1.8 1.9" fill="none"/><path d="M49.7 49.2 A399.1 399.1 0 0 0 56.4 76.1" stroke="#000" stroke-opacity="0.25" stroke-width="1.1" stroke-dasharray="1.9 1.8" fill="none"/><path d="M70.0 -1.9 A371.4 371.4 0 0 0 84.0 71.6" stroke="#000" stroke-opacity="0.47" stroke-width="0.8" stroke-dasharray="2.0 1.7" fill="none"/><path d="M70.6 31.2 A375.1 375.1 0 0 0 76.8 59.6" stroke="#000" stroke-opacity="0.40" stroke-width="1.2" stroke-dasharray="1.7 0.8" fill="none"/><path d="M17.8 6.2 A424.1 424.1 0 0 0 29.8 73.6" stroke="#000" stroke-opacity="0.20" stroke-width="1.2" stroke-dasharray="2.0 0.7" fill="none"/><path d="M52.5 5.8 A389.6 389.6 0 0 0 59.4 49.2" stroke="#000" stroke-opacity="0.39" stroke-width="1.3" stroke-dasharray="0.9 0.8" fill="none"/><path d="M86.2 2.8 A355.7 355.7 0 0 0 101.8 76.4" stroke="#000" stroke-opacity="0.37" stroke-width="1.2" stroke-dasharray="1.9 0.7" fill="none"/><path d="M133.3 2.6 A308.9 308.9 0 0 0 150.5 73.8" stroke="#000" stroke-opacity="0.52" stroke-width="0.6" stroke-dasharray="2.0 0.8" fill="none"/><path d="M27.1 7.3 A415.0 415.0 0 0 0 35.9 60.3" stroke="#000" stroke-opacity="0.42" stroke-width="1.2" stroke-dasharray="1.8 0.6" fill="none"/><path d="M6.2 6.8 A435.7 435.7 0 0 0 17.2 71.4" stroke="#000" stroke-opacity="0.23" stroke-width="0.7" stroke-dasharray="2.0 1.1" fill="none"/><path d="M65.3 1.1 A376.4 376.4 0 0 0 81.3 80.0" stroke="#000" stroke-opacity="0.47" stroke-width="1.0" stroke-dasharray="1.2 1.9" fill="none"/><path d="M80.3 7.7 A362.1 362.1 0 0 0 96.3 80.2" stroke="#000" stroke-opacity="0.45" stroke-width="0.9" stroke-dasharray="1.0 1.7" fill="none"/><path d="M12.7 -1.4 A428.6 428.6 0 0 0 22.0 60.6" stroke="#000" stroke-opacity="0.23" stroke-width="0.6" stroke-dasharray="1.9 0.8" fill="none"/><path d="M128.1 22.5 A317.0 317.0 0 0 0 139.7 67.6" stroke="#000" stroke-opacity="0.24" stroke-width="0.8" stroke-dasharray="2.1 0.9" fill="none"/><path d="M83.4 8.7 A359.2 359.2 0 0 0 91.5 52.9" stroke="#000" stroke-opacity="0.21" stroke-width="0.5" stroke-dasharray="2.1 1.8" fill="none"/><path d="M85.0 26.8 A360.1 360.1 0 0 0 92.8 61.7" stroke="#000" stroke-opacity="0.40" stroke-width="1.0" stroke-dasharray="2.1 1.7" fill="none"/><path d="M120.2 32.0 A326.6 326.6 0 0 0 128.7 64.6" stroke="#000" stroke-opacity="0.47" stroke-width="1.1" stroke-dasharray="1.7 1.8" fill="none"/><path d="M30.2 22.4 A413.7 413.7 0 0 0 42.5 80.5" stroke="#000" stroke-opacity="0.48" stroke-width="0.7" stroke-dasharray="1.1 1.1" fill="none"/><path d="M63.8 3.3 A378.1 378.1 0 0 0 80.4 82.6" stroke="#000" stroke-opacity="0.36" stroke-width="0.8" stroke-dasharray="1.9 1.0" fill="none"/><path d="M26.5 18.4 A416.8 416.8 0 0 0 37.3 73.5" stroke="#000" stroke-opacity="0.45" stroke-width="0.8" stroke-dasharray="2.1 1.5" fill="none"/><path d="M25.8 52.2 A423.1 423.1 0 0 0 33.1 82.0" stroke="#000" stroke-opacity="0.60" stroke-width="1.2" stroke-dasharray="1.6 1.0" fill="none"/><path d="M17.9 6.5 A424.1 424.1 0 0 0 32.2 82.2" stroke="#000" stroke-opacity="0.51" stroke-width="0.6" stroke-dasharray="1.1 1.0" fill="none"/><path d="M142.6 37.9 A306.0 306.0 0 0 0 153.2 72.8" stroke="#000" stroke-opacity="0.47" stroke-width="0.9" stroke-dasharray="2.1 1.0" fill="none"/><path d="M74.6 14.4 A368.6 368.6 0 0 0 79.5 42.9" stroke="#000" stroke-opacity="0.25" stroke-width="0.5" stroke-dasharray="2.2 1.0" fill="none"/><path d="M135.4 13.5 A308.2 308.2 0 0 0 152.5 77.1" stroke="#000" stroke-opacity="0.46" stroke-width="1.3" stroke-dasharray="2.0 1.6" fill="none"/><path d="M63.2 11.7 A379.5 379.5 0 0 0 74.3 67.6" stroke="#000" stroke-opacity="0.26" stroke-width="1.2" stroke-dasharray="1.5 0.7" fill="none"/><path d="M1.2 -1.0 A440.1 440.1 0 0 0 12.9 72.2" stroke="#000" stroke-opacity="0.36" stroke-width="1.0" stroke-dasharray="2.0 1.1" fill="none"/><path d="M15.0 -4.7 A426.0 426.0 0 0 0 26.6 68.7" stroke="#000" stroke-opacity="0.58" stroke-width="0.6" stroke-dasharray="1.0 1.8" fill="none"/><path d="M73.9 22.9 A370.5 370.5 0 0 0 82.1 61.8" stroke="#000" stroke-opacity="0.39" stroke-width="1.1" stroke-dasharray="1.1 1.8" fill="none"/><path d="M126.9 -0.2 A314.9 314.9 0 0 0 145.0 76.2" stroke="#000" stroke-opacity="0.54" stroke-width="1.2" stroke-dasharray="1.6 0.8" fill="none"/><path d="M39.9 -0.8 A401.5 401.5 0 0 0 53.4 74.3" stroke="#000" stroke-opacity="0.46" stroke-width="1.2" stroke-dasharray="1.6 0.7" fill="none"/><path d="M68.9 3.4 A373.0 373.0 0 0 0 80.5 65.3" stroke="#000" stroke-opacity="0.56" stroke-width="1.0" stroke-dasharray="1.3 1.8" fill="none"/><path d="M145.6 8.2 A297.4 297.4 0 0 0 166.1 81.9" stroke="#000" stroke-opacity="0.46" stroke-width="1.1" stroke-dasharray="1.6 1.3" fill="none"/><path d="M130.2 7.3 A312.5 312.5 0 0 0 146.0 71.8" stroke="#000" stroke-opacity="0.42" stroke-width="1.0" stroke-dasharray="1.1 0.9" fill="none"/><path d="M22.6 13.8 A420.1 420.1 0 0 0 36.1 81.7" stroke="#000" stroke-opacity="0.48" stroke-width="0.6" stroke-dasharray="2.2 1.8" fill="none"/><path d="M97.5 13.3 A345.8 345.8 0 0 0 111.2 72.9" stroke="#000" stroke-opacity="0.21" stroke-width="1.1" stroke-dasharray="0.8 1.3" fill="none"/><path d="M21.9 33.5 A423.6 423.6 0 0 0 31.8 78.9" stroke="#000" stroke-opacity="0.50" stroke-width="1.2" stroke-dasharray="1.2 1.1" fill="none"/><path d="M83.6 2.8 A358.3 358.3 0 0 0 100.7 81.1" stroke="#000" stroke-opacity="0.55" stroke-width="0.7" stroke-dasharray="1.8 1.7" fill="none"/><path d="M72.7 1.9 A369.0 369.0 0 0 0 81.2 52.1" stroke="#000" stroke-opacity="0.21" stroke-width="1.2" stroke-dasharray="2.1 1.0" fill="none"/><circle cx="68.7" cy="22.5" r="25" fill="#0c0c0c"/><ellipse cx="67.7" cy="22.5" rx="7.800000000000001" ry="5.2" fill="url(#g4)"/><ellipse cx="67.7" cy="22.5" rx="3.3000000000000003" ry="2.2" fill="#fff"/></svg>
<svg style="left:299px;top:643.5px" width="136" height="112" viewBox="0 0 136 112"><defs><radialGradient id="g5"><stop offset="0" stop-color="#fff"/><stop offset="0.5" stop-color="#f0f0f0"/><stop offset="1" stop-color="#fff" stop-opacity="0"/></radialGradient></defs><rect width="136" height="112" fill="#ffffff"/><path d="M86.0 7.4 A314.1 314.1 0 0 0 106.9 112.9" stroke="#000" stroke-opacity="0.57" stroke-width="0.5" stroke-dasharray="1.5 1.9" fill="none"/><path d="M40.0 -2.8 A360.0 360.0 0 0 0 54.3 100.3" stroke="#000" stroke-opacity="0.39" stroke-width="0.7" stroke-dasharray="1.6 1.4" fill="none"/><path d="M93.1 9.4 A307.0 307.0 0 0 0 114.5 112.9" stroke="#000" stroke-opacity="0.26" stroke-width="1.1" stroke-dasharray="1.0 1.5" fill="none"/><path d="M118.7 70.7 A290.1 290.1 0 0 0 130.2 106.6" stroke="#000" stroke-opacity="0.28" stroke-width="0.7" stroke-dasharray="2.2 1.8" fill="none"/><path d="M121.3 2.6 A278.7 278.7 0 0 0 136.1 89.8" stroke="#000" stroke-opacity="0.58" stroke-width="1.1" stroke-dasharray="2.2 1.9" fill="none"/><path d="M80.3 5.0 A319.7 319.7 0 0 0 87.8 68.9" stroke="#000" stroke-opacity="0.26" stroke-width="0.6" stroke-dasharray="1.2 1.4" fill="none"/><path d="M81.1 47.3 A322.4 322.4 0 0 0 95.5 106.1" stroke="#000" stroke-opacity="0.39" stroke-width="0.8" stroke-dasharray="1.5 1.6" fill="none"/><path d="M66.2 -4.7 A333.8 333.8 0 0 0 82.7 103.8" stroke="#000" stroke-opacity="0.50" stroke-width="1.2" stroke-dasharray="0.8 1.7" fill="none"/><path d="M85.3 10.2 A314.8 314.8 0 0 0 89.3 50.9" stroke="#000" stroke-opacity="0.58" stroke-width="0.7" stroke-dasharray="1.9 1.9" fill="none"/><path d="M20.2 16.7 A380.1 380.1 0 0 0 28.2 78.9" stroke="#000" stroke-opacity="0.41" stroke-width="1.1" stroke-dasharray="1.0 1.6" fill="none"/><path d="M93.1 -3.5 A306.9 306.9 0 0 0 110.9 102.9" stroke="#000" stroke-opacity="0.34" stroke-width="1.0" stroke-dasharray="2.1 1.1" fill="none"/><path d="M18.8 9.4 A381.3 381.3 0 0 0 28.6 86.4" stroke="#000" stroke-opacity="0.33" stroke-width="0.6" stroke-dasharray="0.9 0.8" fill="none"/><path d="M114.8 77.0 A295.5 295.5 0 0 0 128.3 116.0" stroke="#000" stroke-opacity="0.41" stroke-width="0.8" stroke-dasharray="1.1 1.4" fill="none"/><path d="M88.6 17.5 A311.9 311.9 0 0 0 100.7 87.9" stroke="#000" stroke-opacity="0.22" stroke-width="1.2" stroke-dasharray="0.8 1.3" fill="none"/><path d="M118.5 5.3 A281.5 281.5 0 0 0 141.5 111.5" stroke="#000" stroke-opacity="0.52" stroke-width="0.6" stroke-dasharray="1.4 0.8" fill="none"/><path d="M121.8 24.8 A279.3 279.3 0 0 0 133.4 83.5" stroke="#000" stroke-opacity="0.60" stroke-width="1.2" stroke-dasharray="2.2 1.2" fill="none"/><path d="M85.1 21.5 A315.6 315.6 0 0 0 94.7 79.9" stroke="#000" stroke-opacity="0.26" stroke-width="0.8" stroke-dasharray="2.2 1.9" fill="none"/><path d="M57.8 11.9 A342.4 342.4 0 0 0 68.5 85.5" stroke="#000" stroke-opacity="0.24" stroke-width="0.7" stroke-dasharray="1.9 1.8" fill="none"/><path d="M99.5 18.5 A301.1 301.1 0 0 0 118.2 105.9" stroke="#000" stroke-opacity="0.50" stroke-width="0.8" stroke-dasharray="1.8 1.0" fill="none"/><path d="M43.0 15.4 A357.4 357.4 0 0 0 59.4 108.3" stroke="#000" stroke-opacity="0.32" stroke-width="1.3" stroke-dasharray="1.7 1.4" fill="none"/><path d="M68.9 12.1 A331.4 331.4 0 0 0 83.5 98.2" stroke="#000" stroke-opacity="0.53" stroke-width="1.0" stroke-dasharray="1.9 1.1" fill="none"/><path d="M83.1 21.6 A317.6 317.6 0 0 0 102.7 111.9" stroke="#000" stroke-opacity="0.34" stroke-width="1.2" stroke-dasharray="2.0 1.6" fill="none"/><path d="M29.9 2.9 A370.1 370.1 0 0 0 38.4 78.9" stroke="#000" stroke-opacity="0.53" stroke-width="1.2" stroke-dasharray="1.5 1.6" fill="none"/><path d="M79.5 0.6 A320.5 320.5 0 0 0 92.9 91.4" stroke="#000" stroke-opacity="0.51" stroke-width="1.0" stroke-dasharray="1.7 1.2" fill="none"/><path d="M94.4 -4.1 A305.6 305.6 0 0 0 106.8 86.3" stroke="#000" stroke-opacity="0.26" stroke-width="0.9" stroke-dasharray="1.7 0.9" fill="none"/><path d="M50.2 -3.3 A349.9 349.9 0 0 0 59.5 80.3" stroke="#000" stroke-opacity="0.39" stroke-width="0.7" stroke-dasharray="0.9 0.8" fill="none"/><path d="M97.8 34.4 A304.2 304.2 0 0 0 105.0 74.0" stroke="#000" stroke-opacity="0.35" stroke-width="1.0" stroke-dasharray="1.6 0.9" fill="none"/><path d="M26.5 30.1 A374.7 374.7 0 0 0 31.3 67.0" stroke="#000" stroke-opacity="0.31" stroke-width="0.8" stroke-dasharray="1.0 1.8" fill="none"/><path d="M127.7 39.0 A275.1 275.1 0 0 0 137.7 82.7" stroke="#000" stroke-opacity="0.34" stroke-width="1.0" stroke-dasharray="2.1 1.7" fill="none"/><path d="M97.1 12.1 A303.2 303.2 0 0 0 116.8 108.2" stroke="#000" stroke-opacity="0.35" stroke-width="0.6" stroke-dasharray="1.6 1.4" fill="none"/><path d="M34.6 49.1 A368.6 368.6 0 0 0 48.4 110.8" stroke="#000" stroke-opacity="0.20" stroke-width="0.6" stroke-dasharray="1.6 1.5" fill="none"/><path d="M82.4 30.8 A319.0 319.0 0 0 0 101.6 112.9" stroke="#000" stroke-opacity="0.35" stroke-width="0.8" stroke-dasharray="1.1 1.0" fill="none"/><path d="M5.3 6.2 A394.7 394.7 0 0 0 20.8 109.7" stroke="#000" stroke-opacity="0.30" stroke-width="1.3" stroke-dasharray="1.5 1.2" fill="none"/><path d="M135.9 1.8 A264.1 264.1 0 0 0 160.2 110.7" stroke="#000" stroke-opacity="0.31" stroke-width="0.9" stroke-dasharray="1.0 1.5" fill="none"/><path d="M75.7 -4.7 A324.3 324.3 0 0 0 89.4 93.3" stroke="#000" stroke-opacity="0.41" stroke-width="0.7" stroke-dasharray="2.1 1.7" fill="none"/><path d="M134.2 5.5 A265.9 265.9 0 0 0 141.7 63.0" stroke="#000" stroke-opacity="0.60" stroke-width="0.7" stroke-dasharray="1.7 1.3" fill="none"/><path d="M57.0 54.3 A347.2 347.2 0 0 0 67.2 99.2" stroke="#000" stroke-opacity="0.32" stroke-width="0.9" stroke-dasharray="1.3 1.0" fill="none"/><path d="M61.4 13.9 A338.8 338.8 0 0 0 72.0 85.0" stroke="#000" stroke-opacity="0.50" stroke-width="1.0" stroke-dasharray="0.9 1.0" fill="none"/><path d="M137.7 -4.3 A262.3 262.3 0 0 0 148.3 73.9" stroke="#000" stroke-opacity="0.51" stroke-width="0.8" stroke-dasharray="1.6 1.6" fill="none"/><path d="M62.5 41.5 A340.1 340.1 0 0 0 79.2 112.8" stroke="#000" stroke-opacity="0.35" stroke-width="0.8" stroke-dasharray="2.0 0.9" fill="none"/><path d="M93.5 12.2 A306.8 306.8 0 0 0 113.6 110.0" stroke="#000" stroke-opacity="0.37" stroke-width="0.7" stroke-dasharray="1.9 1.9" fill="none"/><path d="M80.4 23.3 A320.4 320.4 0 0 0 94.0 95.1" stroke="#000" stroke-opacity="0.40" stroke-width="0.8" stroke-dasharray="1.0 1.4" fill="none"/><path d="M106.7 15.7 A293.7 293.7 0 0 0 128.5 112.0" stroke="#000" stroke-opacity="0.47" stroke-width="0.5" stroke-dasharray="1.8 2.0" fill="none"/><path d="M22.9 -3.3 A377.1 377.1 0 0 0 32.6 85.3" stroke="#000" stroke-opacity="0.54" stroke-width="0.7" stroke-dasharray="1.7 1.9" fill="none"/><path d="M103.4 -2.2 A296.6 296.6 0 0 0 121.6 102.2" stroke="#000" stroke-opacity="0.44" stroke-width="0.8" stroke-dasharray="1.0 1.5" fill="none"/><path d="M106.4 25.1 A294.7 294.7 0 0 0 113.8 70.2" stroke="#000" stroke-opacity="0.23" stroke-width="0.5" stroke-dasharray="1.6 1.6" fill="none"/><path d="M27.6 33.0 A373.8 373.8 0 0 0 37.8 92.7" stroke="#000" stroke-opacity="0.40" stroke-width="1.3" stroke-dasharray="1.3 0.7" fill="none"/><path d="M113.2 43.1 A290.0 290.0 0 0 0 124.6 90.7" stroke="#000" stroke-opacity="0.40" stroke-width="1.2" stroke-dasharray="1.6 1.5" fill="none"/><path d="M68.8 11.1 A331.3 331.3 0 0 0 85.0 102.8" stroke="#000" stroke-opacity="0.25" stroke-width="0.7" stroke-dasharray="1.3 1.6" fill="none"/><path d="M82.2 17.2 A318.2 318.2 0 0 0 99.9 106.0" stroke="#000" stroke-opacity="0.23" stroke-width="1.0" stroke-dasharray="0.9 0.8" fill="none"/><path d="M92.6 11.6 A307.6 307.6 0 0 0 104.1 84.1" stroke="#000" stroke-opacity="0.52" stroke-width="0.5" stroke-dasharray="1.8 0.7" fill="none"/><path d="M144.0 6.1 A256.1 256.1 0 0 0 169.9 112.4" stroke="#000" stroke-opacity="0.29" stroke-width="0.6" stroke-dasharray="2.2 1.5" fill="none"/><path d="M112.9 9.4 A287.3 287.3 0 0 0 122.1 72.9" stroke="#000" stroke-opacity="0.33" stroke-width="1.0" stroke-dasharray="1.3 1.1" fill="none"/><path d="M117.9 11.4 A282.3 282.3 0 0 0 139.5 108.8" stroke="#000" stroke-opacity="0.52" stroke-width="0.8" stroke-dasharray="2.0 1.3" fill="none"/><path d="M48.4 0.6 A351.6 351.6 0 0 0 54.8 66.9" stroke="#000" stroke-opacity="0.21" stroke-width="0.7" stroke-dasharray="0.9 1.8" fill="none"/><path d="M68.6 -5.0 A331.4 331.4 0 0 0 80.5 88.1" stroke="#000" stroke-opacity="0.39" stroke-width="1.2" stroke-dasharray="1.7 1.2" fill="none"/><path d="M102.1 23.3 A298.8 298.8 0 0 0 110.0 72.2" stroke="#000" stroke-opacity="0.35" stroke-width="1.2" stroke-dasharray="1.0 1.0" fill="none"/><path d="M98.1 16.7 A302.4 302.4 0 0 0 104.9 65.8" stroke="#000" stroke-opacity="0.29" stroke-width="0.9" stroke-dasharray="0.8 1.9" fill="none"/><path d="M127.1 12.6 A273.2 273.2 0 0 0 145.3 98.9" stroke="#000" stroke-opacity="0.58" stroke-width="0.6" stroke-dasharray="1.7 1.0" fill="none"/><path d="M72.6 0.3 A327.4 327.4 0 0 0 85.5 91.1" stroke="#000" stroke-opacity="0.28" stroke-width="0.5" stroke-dasharray="1.1 0.7" fill="none"/><path d="M115.0 25.1 A286.1 286.1 0 0 0 126.8 85.0" stroke="#000" stroke-opacity="0.31" stroke-width="1.1" stroke-dasharray="1.8 0.8" fill="none"/><path d="M85.5 29.8 A315.9 315.9 0 0 0 105.8 114.9" stroke="#000" stroke-opacity="0.46" stroke-width="0.8" stroke-dasharray="2.2 0.6" fill="none"/><path d="M96.3 41.0 A306.5 306.5 0 0 0 104.4 81.1" stroke="#000" stroke-opacity="0.60" stroke-width="0.9" stroke-dasharray="1.3 0.7" fill="none"/><path d="M61.0 4.8 A339.1 339.1 0 0 0 78.4 107.4" stroke="#000" stroke-opacity="0.57" stroke-width="0.5" stroke-dasharray="1.1 0.7" fill="none"/><path d="M108.1 12.5 A292.2 292.2 0 0 0 118.9 79.7" stroke="#000" stroke-opacity="0.22" stroke-width="0.5" stroke-dasharray="2.2 0.9" fill="none"/><path d="M97.2 25.5 A303.9 303.9 0 0 0 110.3 91.8" stroke="#000" stroke-opacity="0.23" stroke-width="0.8" stroke-dasharray="1.0 1.4" fill="none"/><path d="M7.3 -3.8 A392.7 392.7 0 0 0 10.4 49.2" stroke="#000" stroke-opacity="0.42" stroke-width="0.9" stroke-dasharray="1.6 1.1" fill="none"/><path d="M58.3 25.0 A342.6 342.6 0 0 0 77.0 114.3" stroke="#000" stroke-opacity="0.32" stroke-width="0.9" stroke-dasharray="2.0 0.9" fill="none"/><path d="M84.6 19.2 A316.0 316.0 0 0 0 104.5 112.0" stroke="#000" stroke-opacity="0.33" stroke-width="0.6" stroke-dasharray="0.9 0.9" fill="none"/><path d="M100.4 26.9 A300.8 300.8 0 0 0 114.6 95.1" stroke="#000" stroke-opacity="0.30" stroke-width="0.5" stroke-dasharray="1.8 0.7" fill="none"/><path d="M83.8 28.6 A317.5 317.5 0 0 0 91.0 72.8" stroke="#000" stroke-opacity="0.33" stroke-width="1.1" stroke-dasharray="1.6 1.9" fill="none"/><path d="M114.3 12.6 A286.0 286.0 0 0 0 134.0 105.0" stroke="#000" stroke-opacity="0.38" stroke-width="1.2" stroke-dasharray="1.7 1.9" fill="none"/><path d="M82.0 5.2 A318.1 318.1 0 0 0 98.6 101.6" stroke="#000" stroke-opacity="0.25" stroke-width="0.6" stroke-dasharray="1.0 1.0" fill="none"/><path d="M67.9 -0.8 A332.1 332.1 0 0 0 73.0 57.6" stroke="#000" stroke-opacity="0.51" stroke-width="0.9" stroke-dasharray="0.8 0.7" fill="none"/><path d="M54.8 4.9 A345.2 345.2 0 0 0 73.1 111.1" stroke="#000" stroke-opacity="0.29" stroke-width="0.8" stroke-dasharray="1.3 1.1" fill="none"/><path d="M132.4 31.3 A269.4 269.4 0 0 0 154.1 110.1" stroke="#000" stroke-opacity="0.49" stroke-width="0.6" stroke-dasharray="1.5 0.8" fill="none"/><path d="M27.8 -1.7 A372.2 372.2 0 0 0 39.8 93.6" stroke="#000" stroke-opacity="0.33" stroke-width="1.2" stroke-dasharray="1.4 1.2" fill="none"/><path d="M110.6 23.1 A290.3 290.3 0 0 0 133.6 115.2" stroke="#000" stroke-opacity="0.41" stroke-width="1.3" stroke-dasharray="1.6 0.7" fill="none"/><path d="M80.6 -4.5 A319.4 319.4 0 0 0 98.1 104.2" stroke="#000" stroke-opacity="0.43" stroke-width="0.9" stroke-dasharray="2.0 1.1" fill="none"/><path d="M92.8 8.4 A307.3 307.3 0 0 0 99.9 66.2" stroke="#000" stroke-opacity="0.42" stroke-width="0.8" stroke-dasharray="1.9 0.9" fill="none"/><path d="M89.7 15.8 A310.7 310.7 0 0 0 110.8 113.6" stroke="#000" stroke-opacity="0.45" stroke-width="0.8" stroke-dasharray="1.0 1.8" fill="none"/><path d="M165.9 9.6 A234.3 234.3 0 0 0 171.2 50.4" stroke="#000" stroke-opacity="0.24" stroke-width="1.1" stroke-dasharray="2.1 0.9" fill="none"/><path d="M70.0 9.1 A330.1 330.1 0 0 0 88.4 109.0" stroke="#000" stroke-opacity="0.52" stroke-width="0.8" stroke-dasharray="0.8 1.3" fill="none"/><path d="M126.3 23.8 A274.8 274.8 0 0 0 135.6 74.6" stroke="#000" stroke-opacity="0.33" stroke-width="0.5" stroke-dasharray="1.2 1.1" fill="none"/><path d="M80.5 6.3 A319.5 319.5 0 0 0 101.7 114.6" stroke="#000" stroke-opacity="0.57" stroke-width="1.1" stroke-dasharray="1.7 1.4" fill="none"/><path d="M63.5 30.6 A337.9 337.9 0 0 0 75.4 93.8" stroke="#000" stroke-opacity="0.47" stroke-width="0.9" stroke-dasharray="1.2 0.7" fill="none"/><path d="M66.7 16.7 A333.7 333.7 0 0 0 84.5 108.8" stroke="#000" stroke-opacity="0.32" stroke-width="1.2" stroke-dasharray="1.2 1.6" fill="none"/><path d="M117.0 15.9 A283.4 283.4 0 0 0 137.8 107.6" stroke="#000" stroke-opacity="0.58" stroke-width="1.2" stroke-dasharray="1.8 1.8" fill="none"/><path d="M76.4 38.5 A325.9 325.9 0 0 0 94.1 112.3" stroke="#000" stroke-opacity="0.30" stroke-width="1.3" stroke-dasharray="1.6 1.2" fill="none"/><path d="M76.5 5.3 A323.6 323.6 0 0 0 84.4 71.4" stroke="#000" stroke-opacity="0.46" stroke-width="1.2" stroke-dasharray="2.1 1.5" fill="none"/><path d="M122.0 28.0 A279.4 279.4 0 0 0 141.0 104.9" stroke="#000" stroke-opacity="0.35" stroke-width="1.2" stroke-dasharray="1.1 1.0" fill="none"/><path d="M116.4 31.7 A285.3 285.3 0 0 0 138.1 113.1" stroke="#000" stroke-opacity="0.27" stroke-width="1.0" stroke-dasharray="1.9 0.9" fill="none"/><path d="M41.7 10.6 A358.5 358.5 0 0 0 59.3 111.5" stroke="#000" stroke-opacity="0.37" stroke-width="0.8" stroke-dasharray="1.5 1.9" fill="none"/><path d="M69.6 35.0 A332.2 332.2 0 0 0 80.8 92.2" stroke="#000" stroke-opacity="0.59" stroke-width="0.6" stroke-dasharray="0.8 0.8" fill="none"/><path d="M76.9 38.3 A325.4 325.4 0 0 0 87.0 88.9" stroke="#000" stroke-opacity="0.46" stroke-width="1.1" stroke-dasharray="1.8 0.7" fill="none"/><path d="M78.5 18.8 A322.1 322.1 0 0 0 99.5 116.0" stroke="#000" stroke-opacity="0.33" stroke-width="1.2" stroke-dasharray="1.7 1.9" fill="none"/><path d="M71.3 0.2 A328.7 328.7 0 0 0 79.4 72.6" stroke="#000" stroke-opacity="0.28" stroke-width="0.6" stroke-dasharray="0.9 0.8" fill="none"/><path d="M43.3 54.7 A360.9 360.9 0 0 0 52.9 98.7" stroke="#000" stroke-opacity="0.49" stroke-width="1.2" stroke-dasharray="1.9 1.6" fill="none"/><path d="M31.4 -3.4 A368.6 368.6 0 0 0 46.4 104.2" stroke="#000" stroke-opacity="0.24" stroke-width="0.6" stroke-dasharray="1.1 1.1" fill="none"/><path d="M79.0 22.0 A321.8 321.8 0 0 0 97.0 108.2" stroke="#000" stroke-opacity="0.23" stroke-width="0.8" stroke-dasharray="1.6 1.1" fill="none"/><path d="M67.1 12.9 A333.2 333.2 0 0 0 82.1 99.8" stroke="#000" stroke-opacity="0.59" stroke-width="1.3" stroke-dasharray="0.9 1.7" fill="none"/><path d="M73.3 2.6 A326.7 326.7 0 0 0 79.2 61.8" stroke="#000" stroke-opacity="0.39" stroke-width="0.8" stroke-dasharray="1.8 1.9" fill="none"/><path d="M81.1 22.7 A319.7 319.7 0 0 0 99.9 110.1" stroke="#000" stroke-opacity="0.43" stroke-width="0.7" stroke-dasharray="1.3 1.8" fill="none"/><path d="M121.0 30.4 A280.7 280.7 0 0 0 128.5 71.1" stroke="#000" stroke-opacity="0.30" stroke-width="1.0" stroke-dasharray="0.9 1.0" fill="none"/><path d="M10.8 12.9 A389.4 389.4 0 0 0 21.0 89.5" stroke="#000" stroke-opacity="0.57" stroke-width="0.6" stroke-dasharray="1.3 1.7" fill="none"/><path d="M99.5 5.9 A300.6 300.6 0 0 0 116.2 99.1" stroke="#000" stroke-opacity="0.21" stroke-width="0.7" stroke-dasharray="1.4 1.1" fill="none"/><path d="M106.5 1.4 A293.6 293.6 0 0 0 127.7 109.6" stroke="#000" stroke-opacity="0.39" stroke-width="0.6" stroke-dasharray="1.2 1.9" fill="none"/><path d="M94.7 -2.4 A305.3 305.3 0 0 0 103.4 72.5" stroke="#000" stroke-opacity="0.36" stroke-width="1.1" stroke-dasharray="1.4 1.4" fill="none"/><path d="M13.3 -3.0 A386.7 386.7 0 0 0 15.1 36.8" stroke="#000" stroke-opacity="0.51" stroke-width="0.8" stroke-dasharray="2.0 1.8" fill="none"/><path d="M14.9 53.3 A388.8 388.8 0 0 0 29.2 116.9" stroke="#000" stroke-opacity="0.50" stroke-width="1.2" stroke-dasharray="1.0 1.7" fill="none"/><path d="M175.8 25.7 A225.7 225.7 0 0 0 188.6 79.1" stroke="#000" stroke-opacity="0.31" stroke-width="0.9" stroke-dasharray="1.2 1.5" fill="none"/><path d="M74.5 29.1 A326.8 326.8 0 0 0 82.7 78.4" stroke="#000" stroke-opacity="0.23" stroke-width="0.8" stroke-dasharray="2.1 1.8" fill="none"/><path d="M139.2 4.3 A260.9 260.9 0 0 0 164.1 111.4" stroke="#000" stroke-opacity="0.25" stroke-width="0.7" stroke-dasharray="2.1 1.9" fill="none"/><path d="M95.5 26.6 A305.7 305.7 0 0 0 104.2 77.2" stroke="#000" stroke-opacity="0.31" stroke-width="1.1" stroke-dasharray="1.3 1.7" fill="none"/><path d="M15.0 -1.9 A385.0 385.0 0 0 0 24.9 86.7" stroke="#000" stroke-opacity="0.24" stroke-width="1.0" stroke-dasharray="1.3 1.1" fill="none"/><path d="M82.1 37.2 A320.1 320.1 0 0 0 101.5 115.6" stroke="#000" stroke-opacity="0.30" stroke-width="1.0" stroke-dasharray="1.2 1.4" fill="none"/><path d="M109.2 -4.7 A290.8 290.8 0 0 0 121.8 84.8" stroke="#000" stroke-opacity="0.51" stroke-width="0.8" stroke-dasharray="1.5 1.5" fill="none"/><path d="M113.9 36.8 A288.4 288.4 0 0 0 122.3 77.7" stroke="#000" stroke-opacity="0.22" stroke-width="0.8" stroke-dasharray="1.3 0.6" fill="none"/><path d="M50.7 1.7 A349.3 349.3 0 0 0 67.2 106.2" stroke="#000" stroke-opacity="0.41" stroke-width="1.1" stroke-dasharray="2.1 1.9" fill="none"/><path d="M24.1 5.7 A375.9 375.9 0 0 0 29.7 65.0" stroke="#000" stroke-opacity="0.57" stroke-width="0.6" stroke-dasharray="1.4 1.6" fill="none"/><path d="M42.4 30.6 A358.9 358.9 0 0 0 52.3 89.3" stroke="#000" stroke-opacity="0.53" stroke-width="0.6" stroke-dasharray="1.3 1.3" fill="none"/><path d="M129.6 27.9 A271.8 271.8 0 0 0 140.3 80.2" stroke="#000" stroke-opacity="0.22" stroke-width="0.6" stroke-dasharray="1.3 0.8" fill="none"/><path d="M20.2 16.1 A380.1 380.1 0 0 0 36.1 110.0" stroke="#000" stroke-opacity="0.30" stroke-width="1.2" stroke-dasharray="1.7 1.1" fill="none"/><path d="M110.5 13.3 A289.8 289.8 0 0 0 118.4 68.7" stroke="#000" stroke-opacity="0.55" stroke-width="0.9" stroke-dasharray="2.1 0.8" fill="none"/><path d="M130.7 -4.6 A269.3 269.3 0 0 0 141.2 74.7" stroke="#000" stroke-opacity="0.22" stroke-width="1.2" stroke-dasharray="1.5 1.8" fill="none"/><path d="M102.7 0.1 A297.3 297.3 0 0 0 113.9 80.9" stroke="#000" stroke-opacity="0.49" stroke-width="1.0" stroke-dasharray="1.7 0.9" fill="none"/><path d="M22.7 -1.7 A377.3 377.3 0 0 0 32.5 85.6" stroke="#000" stroke-opacity="0.23" stroke-width="0.9" stroke-dasharray="1.7 1.8" fill="none"/><path d="M98.5 47.8 A305.2 305.2 0 0 0 108.1 89.4" stroke="#000" stroke-opacity="0.54" stroke-width="0.6" stroke-dasharray="1.9 1.0" fill="none"/><path d="M137.2 39.3 A265.8 265.8 0 0 0 159.3 112.6" stroke="#000" stroke-opacity="0.39" stroke-width="0.6" stroke-dasharray="1.1 1.0" fill="none"/><path d="M20.5 1.3 A379.5 379.5 0 0 0 24.3 53.6" stroke="#000" stroke-opacity="0.34" stroke-width="0.6" stroke-dasharray="1.4 1.5" fill="none"/><path d="M96.6 29.8 A304.8 304.8 0 0 0 112.8 102.2" stroke="#000" stroke-opacity="0.38" stroke-width="1.0" stroke-dasharray="2.1 0.8" fill="none"/><path d="M102.5 22.1 A298.4 298.4 0 0 0 117.2 95.1" stroke="#000" stroke-opacity="0.56" stroke-width="0.9" stroke-dasharray="1.7 1.2" fill="none"/><path d="M100.5 15.6 A299.9 299.9 0 0 0 106.3 60.8" stroke="#000" stroke-opacity="0.34" stroke-width="1.2" stroke-dasharray="1.2 1.5" fill="none"/><path d="M69.0 -3.2 A331.1 331.1 0 0 0 85.7 103.9" stroke="#000" stroke-opacity="0.51" stroke-width="0.8" stroke-dasharray="0.9 1.5" fill="none"/><path d="M80.8 0.6 A319.2 319.2 0 0 0 99.9 108.6" stroke="#000" stroke-opacity="0.45" stroke-width="1.1" stroke-dasharray="1.2 1.2" fill="none"/><path d="M84.1 0.2 A315.9 315.9 0 0 0 87.3 44.7" stroke="#000" stroke-opacity="0.49" stroke-width="0.8" stroke-dasharray="2.0 0.7" fill="none"/><path d="M116.8 20.4 A283.9 283.9 0 0 0 140.1 114.3" stroke="#000" stroke-opacity="0.40" stroke-width="0.6" stroke-dasharray="1.4 0.9" fill="none"/><path d="M147.5 8.3 A252.6 252.6 0 0 0 163.0 87.3" stroke="#000" stroke-opacity="0.24" stroke-width="0.9" stroke-dasharray="2.1 1.9" fill="none"/><path d="M128.2 37.6 A274.4 274.4 0 0 0 138.4 82.8" stroke="#000" stroke-opacity="0.23" stroke-width="1.3" stroke-dasharray="1.6 1.2" fill="none"/><path d="M119.2 40.0 A283.6 283.6 0 0 0 141.1 115.9" stroke="#000" stroke-opacity="0.37" stroke-width="0.7" stroke-dasharray="1.5 1.9" fill="none"/><path d="M50.7 45.7 A352.2 352.2 0 0 0 64.0 105.8" stroke="#000" stroke-opacity="0.41" stroke-width="0.6" stroke-dasharray="0.9 1.9" fill="none"/><path d="M45.7 44.4 A357.0 357.0 0 0 0 61.3 112.8" stroke="#000" stroke-opacity="0.43" stroke-width="0.9" stroke-dasharray="1.2 1.6" fill="none"/><path d="M43.3 0.6 A356.7 356.7 0 0 0 52.9 82.2" stroke="#000" stroke-opacity="0.28" stroke-width="1.1" stroke-dasharray="1.8 0.7" fill="none"/><path d="M23.0 7.9 A377.1 377.1 0 0 0 26.9 54.8" stroke="#000" stroke-opacity="0.24" stroke-width="0.9" stroke-dasharray="1.7 1.8" fill="none"/><path d="M84.4 6.1 A315.7 315.7 0 0 0 96.3 85.9" stroke="#000" stroke-opacity="0.34" stroke-width="0.5" stroke-dasharray="1.8 0.8" fill="none"/><path d="M77.8 31.7 A323.8 323.8 0 0 0 89.9 93.0" stroke="#000" stroke-opacity="0.46" stroke-width="0.9" stroke-dasharray="2.0 1.9" fill="none"/><path d="M61.5 27.4 A339.6 339.6 0 0 0 68.6 74.1" stroke="#000" stroke-opacity="0.37" stroke-width="1.3" stroke-dasharray="1.0 1.5" fill="none"/><path d="M136.6 -5.0 A263.5 263.5 0 0 0 151.1 86.4" stroke="#000" stroke-opacity="0.58" stroke-width="0.7" stroke-dasharray="2.0 1.5" fill="none"/><path d="M112.6 40.4 A290.2 290.2 0 0 0 128.1 101.5" stroke="#000" stroke-opacity="0.40" stroke-width="1.1" stroke-dasharray="1.7 1.7" fill="none"/><path d="M53.6 -4.9 A346.4 346.4 0 0 0 60.5 68.8" stroke="#000" stroke-opacity="0.52" stroke-width="1.1" stroke-dasharray="2.0 0.7" fill="none"/><path d="M81.3 64.8 A325.2 325.2 0 0 0 95.9 115.3" stroke="#000" stroke-opacity="0.54" stroke-width="0.7" stroke-dasharray="2.0 1.5" fill="none"/><path d="M90.3 4.0 A309.8 309.8 0 0 0 103.2 88.5" stroke="#000" stroke-opacity="0.31" stroke-width="0.5" stroke-dasharray="1.7 1.4" fill="none"/><path d="M62.0 42.1 A340.7 340.7 0 0 0 74.6 100.9" stroke="#000" stroke-opacity="0.35" stroke-width="1.0" stroke-dasharray="1.9 1.2" fill="none"/><path d="M88.1 16.6 A312.3 312.3 0 0 0 93.2 58.3" stroke="#000" stroke-opacity="0.54" stroke-width="0.6" stroke-dasharray="0.9 0.6" fill="none"/><path d="M114.7 38.9 A288.0 288.0 0 0 0 132.7 107.0" stroke="#000" stroke-opacity="0.39" stroke-width="0.9" stroke-dasharray="0.8 1.7" fill="none"/><path d="M108.5 29.1 A293.0 293.0 0 0 0 128.8 110.8" stroke="#000" stroke-opacity="0.45" stroke-width="1.1" stroke-dasharray="2.0 1.5" fill="none"/><path d="M149.8 -0.1 A250.2 250.2 0 0 0 155.5 52.8" stroke="#000" stroke-opacity="0.34" stroke-width="0.6" stroke-dasharray="1.3 0.7" fill="none"/><path d="M35.3 32.1 A366.1 366.1 0 0 0 40.5 69.2" stroke="#000" stroke-opacity="0.32" stroke-width="1.1" stroke-dasharray="1.3 0.8" fill="none"/><path d="M31.0 23.4 A369.8 369.8 0 0 0 38.2 76.3" stroke="#000" stroke-opacity="0.38" stroke-width="0.8" stroke-dasharray="0.8 1.2" fill="none"/><path d="M63.8 25.4 A337.2 337.2 0 0 0 82.1 112.4" stroke="#000" stroke-opacity="0.47" stroke-width="1.1" stroke-dasharray="2.0 1.9" fill="none"/><path d="M55.1 28.5 A346.1 346.1 0 0 0 72.8 112.8" stroke="#000" stroke-opacity="0.49" stroke-width="0.9" stroke-dasharray="1.1 1.1" fill="none"/><path d="M109.4 23.0 A291.5 291.5 0 0 0 129.7 109.2" stroke="#000" stroke-opacity="0.28" stroke-width="0.9" stroke-dasharray="2.0 1.1" fill="none"/><path d="M68.5 17.0 A331.9 331.9 0 0 0 74.4 64.7" stroke="#000" stroke-opacity="0.20" stroke-width="0.6" stroke-dasharray="1.4 0.7" fill="none"/><path d="M74.8 39.1 A327.5 327.5 0 0 0 93.4 115.2" stroke="#000" stroke-opacity="0.53" stroke-width="0.8" stroke-dasharray="2.1 0.7" fill="none"/><path d="M99.0 27.1 A302.2 302.2 0 0 0 117.6 107.4" stroke="#000" stroke-opacity="0.39" stroke-width="1.1" stroke-dasharray="1.4 1.9" fill="none"/><path d="M88.8 3.1 A311.2 311.2 0 0 0 99.2 79.9" stroke="#000" stroke-opacity="0.37" stroke-width="0.9" stroke-dasharray="2.0 0.9" fill="none"/><path d="M92.7 5.4 A307.4 307.4 0 0 0 103.8 82.2" stroke="#000" stroke-opacity="0.47" stroke-width="1.0" stroke-dasharray="0.9 1.6" fill="none"/><path d="M82.6 49.0 A321.1 321.1 0 0 0 97.8 108.5" stroke="#000" stroke-opacity="0.51" stroke-width="0.7" stroke-dasharray="1.7 0.8" fill="none"/><path d="M122.3 7.0 A277.8 277.8 0 0 0 145.2 110.7" stroke="#000" stroke-opacity="0.22" stroke-width="0.9" stroke-dasharray="1.5 1.2" fill="none"/><path d="M108.8 25.0 A292.3 292.3 0 0 0 119.6 82.4" stroke="#000" stroke-opacity="0.23" stroke-width="1.0" stroke-dasharray="1.1 1.0" fill="none"/><path d="M68.0 1.3 A332.0 332.0 0 0 0 73.5 60.1" stroke="#000" stroke-opacity="0.34" stroke-width="1.3" stroke-dasharray="0.9 1.1" fill="none"/><path d="M148.2 12.0 A252.1 252.1 0 0 0 168.2 99.1" stroke="#000" stroke-opacity="0.24" stroke-width="1.2" stroke-dasharray="1.3 1.6" fill="none"/><path d="M95.3 15.1 A305.1 305.1 0 0 0 102.9 69.2" stroke="#000" stroke-opacity="0.31" stroke-width="1.2" stroke-dasharray="1.5 1.1" fill="none"/><path d="M81.7 8.7 A318.4 318.4 0 0 0 100.2 107.3" stroke="#000" stroke-opacity="0.38" stroke-width="1.0" stroke-dasharray="1.7 1.2" fill="none"/><path d="M108.2 1.6 A291.8 291.8 0 0 0 127.0 103.1" stroke="#000" stroke-opacity="0.35" stroke-width="1.0" stroke-dasharray="1.6 0.8" fill="none"/><path d="M110.0 -3.7 A290.1 290.1 0 0 0 123.5 87.8" stroke="#000" stroke-opacity="0.24" stroke-width="1.1" stroke-dasharray="2.1 0.7" fill="none"/><path d="M72.8 -3.7 A327.2 327.2 0 0 0 83.2 81.9" stroke="#000" stroke-opacity="0.38" stroke-width="0.6" stroke-dasharray="1.3 1.6" fill="none"/><path d="M72.8 14.7 A327.5 327.5 0 0 0 92.8 113.5" stroke="#000" stroke-opacity="0.45" stroke-width="1.2" stroke-dasharray="1.0 1.3" fill="none"/><path d="M79.1 2.8 A320.9 320.9 0 0 0 96.6 104.6" stroke="#000" stroke-opacity="0.51" stroke-width="1.3" stroke-dasharray="2.1 1.1" fill="none"/><path d="M79.1 -3.3 A320.9 320.9 0 0 0 97.3 106.6" stroke="#000" stroke-opacity="0.50" stroke-width="1.1" stroke-dasharray="1.4 1.0" fill="none"/><path d="M34.9 9.5 A365.2 365.2 0 0 0 42.8 76.1" stroke="#000" stroke-opacity="0.45" stroke-width="0.8" stroke-dasharray="1.7 1.2" fill="none"/><path d="M129.1 64.3 A278.4 278.4 0 0 0 141.3 102.8" stroke="#000" stroke-opacity="0.46" stroke-width="0.7" stroke-dasharray="1.5 1.4" fill="none"/><path d="M127.3 17.0 A273.2 273.2 0 0 0 137.8 76.9" stroke="#000" stroke-opacity="0.44" stroke-width="0.6" stroke-dasharray="2.1 0.7" fill="none"/><path d="M62.2 30.1 A339.1 339.1 0 0 0 72.2 86.9" stroke="#000" stroke-opacity="0.22" stroke-width="0.7" stroke-dasharray="2.2 1.7" fill="none"/><path d="M81.8 10.0 A318.3 318.3 0 0 0 86.7 56.3" stroke="#000" stroke-opacity="0.59" stroke-width="0.7" stroke-dasharray="1.1 0.7" fill="none"/><path d="M90.3 4.5 A309.7 309.7 0 0 0 112.0 113.9" stroke="#000" stroke-opacity="0.57" stroke-width="1.2" stroke-dasharray="1.9 1.0" fill="none"/><path d="M90.9 48.3 A312.9 312.9 0 0 0 102.7 97.5" stroke="#000" stroke-opacity="0.40" stroke-width="0.5" stroke-dasharray="1.2 1.8" fill="none"/><path d="M98.9 19.0 A301.7 301.7 0 0 0 118.6 108.8" stroke="#000" stroke-opacity="0.56" stroke-width="0.9" stroke-dasharray="1.3 1.4" fill="none"/><path d="M109.0 1.4 A291.0 291.0 0 0 0 118.2 72.7" stroke="#000" stroke-opacity="0.23" stroke-width="0.7" stroke-dasharray="1.3 1.9" fill="none"/><path d="M93.5 13.4 A306.8 306.8 0 0 0 114.0 111.1" stroke="#000" stroke-opacity="0.44" stroke-width="0.8" stroke-dasharray="1.3 1.0" fill="none"/><path d="M117.9 4.8 A282.1 282.1 0 0 0 125.3 64.2" stroke="#000" stroke-opacity="0.20" stroke-width="1.0" stroke-dasharray="1.1 0.6" fill="none"/><path d="M50.5 9.4 A349.6 349.6 0 0 0 56.2 63.3" stroke="#000" stroke-opacity="0.47" stroke-width="1.0" stroke-dasharray="1.2 1.6" fill="none"/><path d="M101.5 25.4 A299.6 299.6 0 0 0 119.5 105.2" stroke="#000" stroke-opacity="0.49" stroke-width="0.9" stroke-dasharray="2.0 1.5" fill="none"/><path d="M82.1 10.2 A318.1 318.1 0 0 0 86.4 53.3" stroke="#000" stroke-opacity="0.39" stroke-width="0.9" stroke-dasharray="0.9 1.6" fill="none"/><path d="M55.8 2.4 A344.2 344.2 0 0 0 70.8 100.8" stroke="#000" stroke-opacity="0.42" stroke-width="1.0" stroke-dasharray="1.7 1.0" fill="none"/><path d="M94.7 26.4 A306.5 306.5 0 0 0 109.5 97.5" stroke="#000" stroke-opacity="0.46" stroke-width="0.6" stroke-dasharray="1.4 1.4" fill="none"/><path d="M141.3 38.2 A261.5 261.5 0 0 0 150.0 76.6" stroke="#000" stroke-opacity="0.32" stroke-width="0.5" stroke-dasharray="1.2 0.8" fill="none"/><path d="M125.9 -3.5 A274.1 274.1 0 0 0 145.0 100.6" stroke="#000" stroke-opacity="0.34" stroke-width="1.1" stroke-dasharray="1.7 0.6" fill="none"/><path d="M77.3 9.0 A322.8 322.8 0 0 0 86.9 78.7" stroke="#000" stroke-opacity="0.39" stroke-width="0.9" stroke-dasharray="1.0 1.5" fill="none"/><path d="M146.1 23.1 A255.0 255.0 0 0 0 163.4 95.0" stroke="#000" stroke-opacity="0.51" stroke-width="1.3" stroke-dasharray="1.7 0.7" fill="none"/><path d="M75.7 8.3 A324.4 324.4 0 0 0 90.0 95.4" stroke="#000" stroke-opacity="0.45" stroke-width="1.0" stroke-dasharray="1.7 1.9" fill="none"/><path d="M68.2 19.1 A332.4 332.4 0 0 0 85.5 107.5" stroke="#000" stroke-opacity="0.29" stroke-width="1.0" stroke-dasharray="1.7 0.7" fill="none"/><path d="M94.5 29.8 A307.0 307.0 0 0 0 111.3 104.5" stroke="#000" stroke-opacity="0.51" stroke-width="0.9" stroke-dasharray="2.1 1.2" fill="none"/><path d="M119.7 -0.7 A280.3 280.3 0 0 0 141.7 108.8" stroke="#000" stroke-opacity="0.49" stroke-width="1.3" stroke-dasharray="0.9 1.7" fill="none"/><path d="M41.9 -1.6 A358.1 358.1 0 0 0 55.6 98.4" stroke="#000" stroke-opacity="0.39" stroke-width="1.0" stroke-dasharray="1.8 1.9" fill="none"/><path d="M76.6 -3.4 A323.5 323.5 0 0 0 90.7 94.6" stroke="#000" stroke-opacity="0.37" stroke-width="1.2" stroke-dasharray="2.1 1.7" fill="none"/><path d="M93.1 18.9 A307.4 307.4 0 0 0 110.8 104.3" stroke="#000" stroke-opacity="0.55" stroke-width="1.1" stroke-dasharray="2.2 1.3" fill="none"/><path d="M55.5 16.3 A344.8 344.8 0 0 0 70.3 101.2" stroke="#000" stroke-opacity="0.22" stroke-width="1.3" stroke-dasharray="1.2 1.3" fill="none"/><path d="M111.7 15.0 A288.7 288.7 0 0 0 120.6 72.7" stroke="#000" stroke-opacity="0.52" stroke-width="0.7" stroke-dasharray="1.7 1.4" fill="none"/><path d="M38.0 11.9 A362.1 362.1 0 0 0 47.7 83.9" stroke="#000" stroke-opacity="0.30" stroke-width="0.8" stroke-dasharray="0.8 0.8" fill="none"/><path d="M70.0 1.0 A330.0 330.0 0 0 0 87.8 106.8" stroke="#000" stroke-opacity="0.30" stroke-width="0.7" stroke-dasharray="1.7 1.3" fill="none"/><path d="M131.3 8.1 A268.9 268.9 0 0 0 144.6 84.1" stroke="#000" stroke-opacity="0.26" stroke-width="1.1" stroke-dasharray="0.9 1.2" fill="none"/><path d="M39.2 54.6 A364.9 364.9 0 0 0 53.3 113.8" stroke="#000" stroke-opacity="0.22" stroke-width="1.2" stroke-dasharray="1.4 0.6" fill="none"/><path d="M73.7 4.5 A326.3 326.3 0 0 0 94.1 113.5" stroke="#000" stroke-opacity="0.49" stroke-width="1.1" stroke-dasharray="0.8 1.0" fill="none"/><path d="M148.0 70.2 A261.6 261.6 0 0 0 165.6 116.1" stroke="#000" stroke-opacity="0.42" stroke-width="0.7" stroke-dasharray="0.9 1.2" fill="none"/><path d="M56.5 11.5 A343.7 343.7 0 0 0 66.2 81.9" stroke="#000" stroke-opacity="0.58" stroke-width="0.9" stroke-dasharray="1.2 1.7" fill="none"/><path d="M83.5 63.9 A322.9 322.9 0 0 0 99.0 116.8" stroke="#000" stroke-opacity="0.45" stroke-width="0.9" stroke-dasharray="1.7 1.5" fill="none"/><path d="M94.4 3.8 A305.7 305.7 0 0 0 102.1 68.3" stroke="#000" stroke-opacity="0.21" stroke-width="0.6" stroke-dasharray="1.4 0.6" fill="none"/><path d="M79.1 26.4 A321.9 321.9 0 0 0 89.8 86.3" stroke="#000" stroke-opacity="0.28" stroke-width="1.2" stroke-dasharray="1.5 0.7" fill="none"/><path d="M105.4 7.0 A294.7 294.7 0 0 0 126.2 108.9" stroke="#000" stroke-opacity="0.32" stroke-width="1.1" stroke-dasharray="0.9 1.8" fill="none"/><path d="M21.3 41.0 A380.9 380.9 0 0 0 34.8 108.4" stroke="#000" stroke-opacity="0.44" stroke-width="0.7" stroke-dasharray="1.1 0.7" fill="none"/><path d="M82.1 27.8 A319.1 319.1 0 0 0 90.6 78.1" stroke="#000" stroke-opacity="0.56" stroke-width="1.2" stroke-dasharray="1.5 1.7" fill="none"/><path d="M143.2 40.8 A260.0 260.0 0 0 0 165.2 111.7" stroke="#000" stroke-opacity="0.32" stroke-width="1.3" stroke-dasharray="1.3 1.9" fill="none"/><path d="M70.9 7.6 A329.2 329.2 0 0 0 90.7 112.6" stroke="#000" stroke-opacity="0.23" stroke-width="0.7" stroke-dasharray="1.7 1.9" fill="none"/><path d="M112.8 5.6 A287.2 287.2 0 0 0 121.1 68.6" stroke="#000" stroke-opacity="0.29" stroke-width="0.9" stroke-dasharray="1.3 1.0" fill="none"/><path d="M94.5 4.8 A305.5 305.5 0 0 0 115.3 110.8" stroke="#000" stroke-opacity="0.50" stroke-width="1.2" stroke-dasharray="0.8 1.8" fill="none"/><path d="M103.5 14.1 A296.8 296.8 0 0 0 122.7 105.9" stroke="#000" stroke-opacity="0.39" stroke-width="1.1" stroke-dasharray="1.4 0.9" fill="none"/><path d="M130.5 -2.1 A269.5 269.5 0 0 0 134.1 44.1" stroke="#000" stroke-opacity="0.58" stroke-width="1.3" stroke-dasharray="1.3 1.2" fill="none"/><path d="M100.7 60.7 A305.4 305.4 0 0 0 114.7 109.0" stroke="#000" stroke-opacity="0.57" stroke-width="0.5" stroke-dasharray="1.4 0.9" fill="none"/><path d="M57.6 13.0 A342.7 342.7 0 0 0 66.0 76.4" stroke="#000" stroke-opacity="0.32" stroke-width="1.0" stroke-dasharray="1.5 1.3" fill="none"/><path d="M25.3 37.8 A376.6 376.6 0 0 0 38.7 106.2" stroke="#000" stroke-opacity="0.57" stroke-width="1.0" stroke-dasharray="1.6 1.7" fill="none"/><path d="M100.5 25.4 A300.6 300.6 0 0 0 109.4 76.7" stroke="#000" stroke-opacity="0.26" stroke-width="0.5" stroke-dasharray="1.8 1.1" fill="none"/><path d="M94.2 8.3 A305.9 305.9 0 0 0 109.1 94.6" stroke="#000" stroke-opacity="0.37" stroke-width="1.0" stroke-dasharray="2.1 1.6" fill="none"/><path d="M89.4 -2.6 A310.7 310.7 0 0 0 108.3 106.9" stroke="#000" stroke-opacity="0.43" stroke-width="1.0" stroke-dasharray="1.2 1.8" fill="none"/><path d="M84.7 2.2 A315.3 315.3 0 0 0 101.1 100.2" stroke="#000" stroke-opacity="0.45" stroke-width="1.1" stroke-dasharray="1.3 1.0" fill="none"/><path d="M74.0 4.3 A326.0 326.0 0 0 0 94.0 112.5" stroke="#000" stroke-opacity="0.39" stroke-width="0.9" stroke-dasharray="1.7 1.0" fill="none"/><path d="M118.6 36.8 A283.8 283.8 0 0 0 141.1 116.1" stroke="#000" stroke-opacity="0.45" stroke-width="1.2" stroke-dasharray="2.2 1.3" fill="none"/><path d="M111.5 14.5 A288.8 288.8 0 0 0 124.3 86.2" stroke="#000" stroke-opacity="0.50" stroke-width="1.0" stroke-dasharray="1.0 1.9" fill="none"/><path d="M88.8 20.0 A311.9 311.9 0 0 0 104.5 99.8" stroke="#000" stroke-opacity="0.25" stroke-width="0.6" stroke-dasharray="1.8 1.1" fill="none"/><path d="M54.5 14.6 A345.8 345.8 0 0 0 72.4 110.8" stroke="#000" stroke-opacity="0.51" stroke-width="0.8" stroke-dasharray="1.0 1.7" fill="none"/><path d="M67.8 -4.9 A332.3 332.3 0 0 0 72.0 52.7" stroke="#000" stroke-opacity="0.44" stroke-width="1.1" stroke-dasharray="1.6 2.0" fill="none"/><path d="M52.0 9.1 A348.2 348.2 0 0 0 66.4 99.6" stroke="#000" stroke-opacity="0.43" stroke-width="0.7" stroke-dasharray="1.1 1.4" fill="none"/><path d="M121.0 27.7 A280.4 280.4 0 0 0 138.4 100.8" stroke="#000" stroke-opacity="0.45" stroke-width="0.8" stroke-dasharray="1.2 1.6" fill="none"/><path d="M68.6 9.3 A331.5 331.5 0 0 0 72.2 49.3" stroke="#000" stroke-opacity="0.34" stroke-width="1.0" stroke-dasharray="1.7 1.3" fill="none"/><path d="M77.1 16.1 A323.3 323.3 0 0 0 95.2 107.7" stroke="#000" stroke-opacity="0.37" stroke-width="1.2" stroke-dasharray="0.8 1.4" fill="none"/><path d="M110.8 -0.8 A289.2 289.2 0 0 0 129.0 100.8" stroke="#000" stroke-opacity="0.52" stroke-width="0.9" stroke-dasharray="2.1 1.1" fill="none"/><path d="M36.7 19.0 A363.8 363.8 0 0 0 45.3 80.8" stroke="#000" stroke-opacity="0.25" stroke-width="1.0" stroke-dasharray="0.9 1.8" fill="none"/><path d="M29.2 63.7 A376.2 376.2 0 0 0 41.4 113.5" stroke="#000" stroke-opacity="0.40" stroke-width="1.1" stroke-dasharray="1.3 0.9" fill="none"/><path d="M106.3 12.4 A293.9 293.9 0 0 0 129.4 114.9" stroke="#000" stroke-opacity="0.47" stroke-width="0.7" stroke-dasharray="1.8 1.9" fill="none"/><path d="M88.8 38.2 A313.5 313.5 0 0 0 99.9 90.9" stroke="#000" stroke-opacity="0.58" stroke-width="1.0" stroke-dasharray="1.0 0.9" fill="none"/><path d="M89.9 10.3 A310.3 310.3 0 0 0 99.0 75.1" stroke="#000" stroke-opacity="0.40" stroke-width="0.6" stroke-dasharray="1.6 1.5" fill="none"/><path d="M89.3 18.1 A311.2 311.2 0 0 0 104.5 97.5" stroke="#000" stroke-opacity="0.52" stroke-width="1.0" stroke-dasharray="1.7 1.4" fill="none"/><path d="M99.7 13.8 A300.6 300.6 0 0 0 121.7 113.5" stroke="#000" stroke-opacity="0.20" stroke-width="1.2" stroke-dasharray="1.7 1.8" fill="none"/><path d="M96.0 1.8 A304.0 304.0 0 0 0 103.5 67.0" stroke="#000" stroke-opacity="0.51" stroke-width="1.1" stroke-dasharray="1.5 1.0" fill="none"/><path d="M124.0 65.5 A283.7 283.7 0 0 0 141.2 116.1" stroke="#000" stroke-opacity="0.59" stroke-width="0.6" stroke-dasharray="1.1 1.6" fill="none"/><path d="M78.0 30.4 A323.5 323.5 0 0 0 92.9 101.6" stroke="#000" stroke-opacity="0.31" stroke-width="1.0" stroke-dasharray="1.1 0.9" fill="none"/><path d="M42.3 64.5 A363.4 363.4 0 0 0 53.9 110.9" stroke="#000" stroke-opacity="0.30" stroke-width="0.8" stroke-dasharray="0.9 1.0" fill="none"/><path d="M30.7 44.9 A372.0 372.0 0 0 0 43.9 107.6" stroke="#000" stroke-opacity="0.59" stroke-width="1.1" stroke-dasharray="1.1 1.2" fill="none"/><path d="M91.8 45.8 A311.5 311.5 0 0 0 103.1 94.4" stroke="#000" stroke-opacity="0.41" stroke-width="0.7" stroke-dasharray="1.2 0.8" fill="none"/><path d="M113.0 -0.9 A287.0 287.0 0 0 0 121.4 69.1" stroke="#000" stroke-opacity="0.41" stroke-width="0.7" stroke-dasharray="1.9 1.0" fill="none"/><path d="M154.8 60.7 A252.6 252.6 0 0 0 173.8 112.5" stroke="#000" stroke-opacity="0.39" stroke-width="1.2" stroke-dasharray="1.4 1.4" fill="none"/><path d="M67.4 6.2 A332.7 332.7 0 0 0 82.3 98.7" stroke="#000" stroke-opacity="0.55" stroke-width="1.1" stroke-dasharray="1.4 0.6" fill="none"/><path d="M65.7 -4.8 A334.3 334.3 0 0 0 74.3 75.5" stroke="#000" stroke-opacity="0.39" stroke-width="1.2" stroke-dasharray="2.1 1.6" fill="none"/><path d="M103.7 37.2 A298.6 298.6 0 0 0 125.3 117.0" stroke="#000" stroke-opacity="0.52" stroke-width="0.9" stroke-dasharray="1.5 1.9" fill="none"/><path d="M69.7 13.3 A330.6 330.6 0 0 0 84.5 98.8" stroke="#000" stroke-opacity="0.58" stroke-width="1.3" stroke-dasharray="2.2 1.9" fill="none"/><path d="M75.7 22.7 A325.1 325.1 0 0 0 81.5 65.2" stroke="#000" stroke-opacity="0.53" stroke-width="0.9" stroke-dasharray="1.2 0.7" fill="none"/><path d="M99.0 1.1 A301.0 301.0 0 0 0 113.7 93.1" stroke="#000" stroke-opacity="0.27" stroke-width="1.0" stroke-dasharray="1.0 1.8" fill="none"/><path d="M99.5 10.7 A300.7 300.7 0 0 0 120.7 111.5" stroke="#000" stroke-opacity="0.49" stroke-width="0.7" stroke-dasharray="1.4 1.1" fill="none"/><path d="M113.5 12.5 A286.8 286.8 0 0 0 134.2 107.6" stroke="#000" stroke-opacity="0.23" stroke-width="0.7" stroke-dasharray="1.6 1.7" fill="none"/><path d="M73.8 20.8 A326.8 326.8 0 0 0 82.2 76.2" stroke="#000" stroke-opacity="0.38" stroke-width="0.8" stroke-dasharray="2.1 1.5" fill="none"/><path d="M71.3 24.5 A329.6 329.6 0 0 0 78.6 73.3" stroke="#000" stroke-opacity="0.23" stroke-width="1.0" stroke-dasharray="2.0 1.9" fill="none"/><path d="M116.7 27.9 A284.7 284.7 0 0 0 130.9 92.9" stroke="#000" stroke-opacity="0.42" stroke-width="0.6" stroke-dasharray="1.6 1.3" fill="none"/><path d="M40.1 7.9 A360.0 360.0 0 0 0 51.9 91.9" stroke="#000" stroke-opacity="0.30" stroke-width="1.0" stroke-dasharray="1.6 1.0" fill="none"/><path d="M108.2 30.8 A293.4 293.4 0 0 0 123.2 97.2" stroke="#000" stroke-opacity="0.55" stroke-width="0.8" stroke-dasharray="1.6 1.4" fill="none"/><path d="M89.2 -2.3 A310.8 310.8 0 0 0 106.6 102.4" stroke="#000" stroke-opacity="0.47" stroke-width="0.7" stroke-dasharray="1.5 1.2" fill="none"/><path d="M116.4 65.8 A291.1 291.1 0 0 0 132.2 114.1" stroke="#000" stroke-opacity="0.22" stroke-width="0.6" stroke-dasharray="1.8 1.1" fill="none"/><path d="M104.6 45.8 A298.9 298.9 0 0 0 117.3 97.3" stroke="#000" stroke-opacity="0.36" stroke-width="1.3" stroke-dasharray="1.6 1.9" fill="none"/><path d="M13.7 29.0 A387.4 387.4 0 0 0 20.0 75.4" stroke="#000" stroke-opacity="0.48" stroke-width="0.6" stroke-dasharray="0.9 2.0" fill="none"/><path d="M19.8 29.2 A381.3 381.3 0 0 0 36.9 116.6" stroke="#000" stroke-opacity="0.51" stroke-width="1.1" stroke-dasharray="1.4 1.5" fill="none"/><path d="M18.0 -1.3 A382.0 382.0 0 0 0 25.0 72.6" stroke="#000" stroke-opacity="0.26" stroke-width="1.3" stroke-dasharray="1.8 1.9" fill="none"/><path d="M121.7 20.8 A279.1 279.1 0 0 0 135.6 89.2" stroke="#000" stroke-opacity="0.29" stroke-width="1.1" stroke-dasharray="1.9 1.6" fill="none"/><path d="M114.2 15.1 A286.2 286.2 0 0 0 127.7 88.3" stroke="#000" stroke-opacity="0.39" stroke-width="0.8" stroke-dasharray="1.5 1.9" fill="none"/><path d="M115.2 4.0 A284.8 284.8 0 0 0 133.7 101.2" stroke="#000" stroke-opacity="0.56" stroke-width="1.3" stroke-dasharray="0.9 1.5" fill="none"/><path d="M119.9 23.9 A281.2 281.2 0 0 0 135.4 94.9" stroke="#000" stroke-opacity="0.54" stroke-width="1.0" stroke-dasharray="2.0 0.9" fill="none"/><path d="M75.2 10.7 A325.0 325.0 0 0 0 92.8 106.2" stroke="#000" stroke-opacity="0.29" stroke-width="1.2" stroke-dasharray="1.5 1.5" fill="none"/><path d="M24.8 28.9 A376.3 376.3 0 0 0 34.5 89.6" stroke="#000" stroke-opacity="0.42" stroke-width="0.7" stroke-dasharray="1.5 2.0" fill="none"/><path d="M84.6 10.2 A315.6 315.6 0 0 0 98.3 92.4" stroke="#000" stroke-opacity="0.47" stroke-width="0.8" stroke-dasharray="1.9 1.1" fill="none"/><path d="M129.5 6.3 A270.5 270.5 0 0 0 137.6 65.9" stroke="#000" stroke-opacity="0.33" stroke-width="0.6" stroke-dasharray="2.0 2.0" fill="none"/><path d="M91.9 0.8 A308.1 308.1 0 0 0 108.7 100.3" stroke="#000" stroke-opacity="0.32" stroke-width="0.9" stroke-dasharray="1.0 0.9" fill="none"/><path d="M144.6 6.5 A255.5 255.5 0 0 0 150.1 53.1" stroke="#000" stroke-opacity="0.44" stroke-width="0.7" stroke-dasharray="2.1 1.9" fill="none"/><path d="M85.0 48.7 A318.8 318.8 0 0 0 100.6 109.5" stroke="#000" stroke-opacity="0.37" stroke-width="1.1" stroke-dasharray="1.9 1.6" fill="none"/><path d="M133.8 4.5 A266.2 266.2 0 0 0 142.5 67.5" stroke="#000" stroke-opacity="0.35" stroke-width="1.3" stroke-dasharray="0.9 1.0" fill="none"/><path d="M37.2 2.7 A362.8 362.8 0 0 0 41.0 52.6" stroke="#000" stroke-opacity="0.21" stroke-width="0.8" stroke-dasharray="1.8 1.2" fill="none"/><path d="M108.8 12.7 A291.4 291.4 0 0 0 122.0 87.6" stroke="#000" stroke-opacity="0.36" stroke-width="0.5" stroke-dasharray="2.1 1.6" fill="none"/><path d="M104.0 32.0 A297.7 297.7 0 0 0 121.6 105.5" stroke="#000" stroke-opacity="0.50" stroke-width="0.6" stroke-dasharray="2.0 0.9" fill="none"/><path d="M134.7 20.9 A266.1 266.1 0 0 0 158.5 111.7" stroke="#000" stroke-opacity="0.32" stroke-width="0.8" stroke-dasharray="1.8 1.0" fill="none"/><path d="M102.9 9.9 A297.3 297.3 0 0 0 126.0 115.3" stroke="#000" stroke-opacity="0.60" stroke-width="0.7" stroke-dasharray="1.1 1.2" fill="none"/><path d="M87.7 5.4 A312.3 312.3 0 0 0 107.6 109.7" stroke="#000" stroke-opacity="0.54" stroke-width="0.9" stroke-dasharray="1.5 1.9" fill="none"/><path d="M98.0 28.9 A303.4 303.4 0 0 0 116.5 108.2" stroke="#000" stroke-opacity="0.60" stroke-width="1.1" stroke-dasharray="1.7 1.7" fill="none"/><path d="M142.0 18.4 A258.6 258.6 0 0 0 151.6 71.9" stroke="#000" stroke-opacity="0.57" stroke-width="0.9" stroke-dasharray="0.8 1.5" fill="none"/><circle cx="67.6" cy="56.6" r="25" fill="#0c0c0c"/><ellipse cx="66.6" cy="56.6" rx="6.5" ry="6.5" fill="url(#g5)"/><ellipse cx="66.6" cy="56.6" rx="2.75" ry="2.75" fill="#fff"/></svg>
<div style="left:279px;top:644.0px;width:20px;height:20px;background:#a3a3a3"></div>
<div class="t" style="left:89.0px;top:649.01px;font-size:10.5px;line-height:10.5px;color:#2a2a2a;font-weight:bold;width:400px;text-align:center;-webkit-text-stroke:0">C1</div>
<svg style="left:480px;top:643.5px" width="136" height="112" viewBox="0 0 136 112"><defs><radialGradient id="g6"><stop offset="0" stop-color="#fff"/><stop offset="0.5" stop-color="#f0f0f0"/><stop offset="1" stop-color="#fff" stop-opacity="0"/></radialGradient></defs><rect width="136" height="112" fill="#ffffff"/><path d="M98.7 -5.0 A301.3 301.3 0 0 0 103.2 52.0" stroke="#000" stroke-opacity="0.47" stroke-width="0.9" stroke-dasharray="1.9 1.1" fill="none"/><path d="M70.8 48.4 A332.7 332.7 0 0 0 84.1 104.5" stroke="#000" stroke-opacity="0.49" stroke-width="0.8" stroke-dasharray="1.6 1.6" fill="none"/><path d="M-2.7 48.6 A405.6 405.6 0 0 0 8.0 104.3" stroke="#000" stroke-opacity="0.47" stroke-width="1.2" stroke-dasharray="1.3 0.7" fill="none"/><path d="M76.3 7.1 A323.8 323.8 0 0 0 93.0 102.9" stroke="#000" stroke-opacity="0.24" stroke-width="0.7" stroke-dasharray="1.7 1.0" fill="none"/><path d="M76.9 8.8 A323.2 323.2 0 0 0 90.7 93.9" stroke="#000" stroke-opacity="0.57" stroke-width="1.2" stroke-dasharray="1.5 1.5" fill="none"/><path d="M31.8 21.2 A368.8 368.8 0 0 0 50.0 116.4" stroke="#000" stroke-opacity="0.21" stroke-width="0.8" stroke-dasharray="1.6 1.0" fill="none"/><path d="M88.2 0.6 A311.8 311.8 0 0 0 97.7 76.7" stroke="#000" stroke-opacity="0.47" stroke-width="0.7" stroke-dasharray="1.1 1.3" fill="none"/><path d="M75.6 56.6 A329.3 329.3 0 0 0 88.9 108.0" stroke="#000" stroke-opacity="0.48" stroke-width="0.5" stroke-dasharray="1.9 0.6" fill="none"/><path d="M72.6 19.3 A328.0 328.0 0 0 0 81.6 78.8" stroke="#000" stroke-opacity="0.36" stroke-width="0.6" stroke-dasharray="2.2 0.7" fill="none"/><path d="M19.5 7.4 A380.6 380.6 0 0 0 32.5 99.0" stroke="#000" stroke-opacity="0.59" stroke-width="0.7" stroke-dasharray="2.2 1.8" fill="none"/><path d="M63.9 14.9 A336.4 336.4 0 0 0 82.8 112.2" stroke="#000" stroke-opacity="0.41" stroke-width="0.9" stroke-dasharray="1.8 1.2" fill="none"/><path d="M21.9 3.3 A378.1 378.1 0 0 0 34.0 95.0" stroke="#000" stroke-opacity="0.40" stroke-width="1.1" stroke-dasharray="1.0 0.6" fill="none"/><path d="M19.9 25.5 A381.0 381.0 0 0 0 27.8 81.2" stroke="#000" stroke-opacity="0.57" stroke-width="0.7" stroke-dasharray="1.4 1.8" fill="none"/><path d="M28.0 26.7 A372.9 372.9 0 0 0 36.5 83.2" stroke="#000" stroke-opacity="0.39" stroke-width="0.6" stroke-dasharray="1.3 1.0" fill="none"/><path d="M75.2 8.5 A324.9 324.9 0 0 0 96.5 115.9" stroke="#000" stroke-opacity="0.35" stroke-width="1.0" stroke-dasharray="1.2 1.2" fill="none"/><path d="M77.2 21.1 A323.5 323.5 0 0 0 97.8 115.3" stroke="#000" stroke-opacity="0.32" stroke-width="0.5" stroke-dasharray="1.4 0.7" fill="none"/><path d="M42.8 7.1 A357.2 357.2 0 0 0 56.1 96.7" stroke="#000" stroke-opacity="0.58" stroke-width="1.2" stroke-dasharray="0.9 0.9" fill="none"/><path d="M78.8 12.5 A321.4 321.4 0 0 0 92.7 94.4" stroke="#000" stroke-opacity="0.51" stroke-width="1.2" stroke-dasharray="1.5 1.3" fill="none"/><path d="M31.5 19.4 A369.0 369.0 0 0 0 45.3 101.9" stroke="#000" stroke-opacity="0.26" stroke-width="1.0" stroke-dasharray="0.9 0.7" fill="none"/><path d="M55.0 42.1 A347.6 347.6 0 0 0 71.0 112.0" stroke="#000" stroke-opacity="0.45" stroke-width="1.1" stroke-dasharray="1.0 1.8" fill="none"/><path d="M-3.2 12.2 A403.3 403.3 0 0 0 13.4 115.0" stroke="#000" stroke-opacity="0.38" stroke-width="1.1" stroke-dasharray="1.9 0.8" fill="none"/><path d="M58.1 3.5 A342.0 342.0 0 0 0 75.2 106.8" stroke="#000" stroke-opacity="0.51" stroke-width="0.9" stroke-dasharray="1.2 1.6" fill="none"/><path d="M68.9 56.5 A335.9 335.9 0 0 0 83.8 113.3" stroke="#000" stroke-opacity="0.23" stroke-width="1.2" stroke-dasharray="1.2 2.0" fill="none"/><path d="M-30.7 -4.4 A430.7 430.7 0 0 0 -18.9 100.0" stroke="#000" stroke-opacity="0.23" stroke-width="1.2" stroke-dasharray="1.7 1.3" fill="none"/><path d="M61.6 76.9 A347.1 347.1 0 0 0 73.1 116.5" stroke="#000" stroke-opacity="0.51" stroke-width="1.3" stroke-dasharray="1.8 1.1" fill="none"/><path d="M64.0 -1.3 A336.0 336.0 0 0 0 76.2 89.6" stroke="#000" stroke-opacity="0.42" stroke-width="0.9" stroke-dasharray="1.5 0.7" fill="none"/><path d="M34.1 2.2 A365.9 365.9 0 0 0 42.5 77.9" stroke="#000" stroke-opacity="0.31" stroke-width="0.6" stroke-dasharray="1.6 1.1" fill="none"/><path d="M41.6 34.7 A360.1 360.1 0 0 0 50.8 87.6" stroke="#000" stroke-opacity="0.56" stroke-width="0.8" stroke-dasharray="1.0 1.0" fill="none"/><path d="M-2.1 3.3 A402.1 402.1 0 0 0 6.3 82.1" stroke="#000" stroke-opacity="0.33" stroke-width="0.8" stroke-dasharray="1.4 1.2" fill="none"/><path d="M73.6 25.5 A327.3 327.3 0 0 0 89.1 102.3" stroke="#000" stroke-opacity="0.49" stroke-width="1.0" stroke-dasharray="1.9 1.1" fill="none"/><path d="M57.0 10.5 A343.2 343.2 0 0 0 69.8 93.3" stroke="#000" stroke-opacity="0.22" stroke-width="0.5" stroke-dasharray="1.9 0.8" fill="none"/><path d="M38.8 24.2 A362.0 362.0 0 0 0 44.5 68.5" stroke="#000" stroke-opacity="0.21" stroke-width="0.9" stroke-dasharray="1.9 0.9" fill="none"/><path d="M62.4 32.6 A339.2 339.2 0 0 0 77.0 103.5" stroke="#000" stroke-opacity="0.55" stroke-width="0.6" stroke-dasharray="1.7 0.8" fill="none"/><path d="M30.2 -4.3 A369.8 369.8 0 0 0 45.3 104.6" stroke="#000" stroke-opacity="0.57" stroke-width="1.1" stroke-dasharray="1.7 1.6" fill="none"/><path d="M38.4 56.5 A366.0 366.0 0 0 0 50.1 107.4" stroke="#000" stroke-opacity="0.51" stroke-width="1.1" stroke-dasharray="1.1 1.4" fill="none"/><path d="M69.8 15.9 A330.6 330.6 0 0 0 88.4 110.3" stroke="#000" stroke-opacity="0.60" stroke-width="1.1" stroke-dasharray="1.8 1.7" fill="none"/><path d="M35.0 2.0 A365.0 365.0 0 0 0 41.1 66.2" stroke="#000" stroke-opacity="0.58" stroke-width="0.5" stroke-dasharray="2.1 1.9" fill="none"/><path d="M36.9 -3.7 A363.2 363.2 0 0 0 49.3 94.4" stroke="#000" stroke-opacity="0.26" stroke-width="0.5" stroke-dasharray="0.9 0.6" fill="none"/><path d="M111.7 3.9 A288.4 288.4 0 0 0 118.3 61.6" stroke="#000" stroke-opacity="0.37" stroke-width="0.6" stroke-dasharray="2.2 1.1" fill="none"/><path d="M60.6 23.2 A340.2 340.2 0 0 0 75.2 101.1" stroke="#000" stroke-opacity="0.39" stroke-width="0.7" stroke-dasharray="1.0 1.8" fill="none"/><path d="M-4.4 36.5 A406.1 406.1 0 0 0 10.5 114.8" stroke="#000" stroke-opacity="0.52" stroke-width="0.9" stroke-dasharray="1.0 1.4" fill="none"/><path d="M56.6 7.1 A343.5 343.5 0 0 0 73.6 106.9" stroke="#000" stroke-opacity="0.48" stroke-width="1.1" stroke-dasharray="1.5 1.8" fill="none"/><path d="M114.6 14.1 A285.7 285.7 0 0 0 138.0 114.0" stroke="#000" stroke-opacity="0.34" stroke-width="0.7" stroke-dasharray="1.0 1.1" fill="none"/><path d="M126.2 -4.7 A273.9 273.9 0 0 0 132.8 60.0" stroke="#000" stroke-opacity="0.32" stroke-width="0.6" stroke-dasharray="1.7 1.7" fill="none"/><path d="M112.7 65.7 A294.7 294.7 0 0 0 126.8 110.5" stroke="#000" stroke-opacity="0.53" stroke-width="0.9" stroke-dasharray="2.1 1.3" fill="none"/><path d="M99.3 13.6 A301.0 301.0 0 0 0 111.7 86.5" stroke="#000" stroke-opacity="0.60" stroke-width="1.2" stroke-dasharray="1.6 1.8" fill="none"/><path d="M43.8 3.4 A356.2 356.2 0 0 0 47.4 50.3" stroke="#000" stroke-opacity="0.44" stroke-width="1.1" stroke-dasharray="1.0 1.3" fill="none"/><path d="M31.8 22.8 A368.9 368.9 0 0 0 47.8 109.5" stroke="#000" stroke-opacity="0.23" stroke-width="1.3" stroke-dasharray="1.7 0.8" fill="none"/><path d="M64.7 -1.7 A335.3 335.3 0 0 0 80.8 102.4" stroke="#000" stroke-opacity="0.27" stroke-width="1.0" stroke-dasharray="2.0 1.6" fill="none"/><path d="M80.5 43.4 A322.4 322.4 0 0 0 89.9 88.1" stroke="#000" stroke-opacity="0.38" stroke-width="1.1" stroke-dasharray="1.6 1.6" fill="none"/><path d="M56.9 -4.9 A343.2 343.2 0 0 0 60.9 52.7" stroke="#000" stroke-opacity="0.55" stroke-width="0.5" stroke-dasharray="2.2 1.2" fill="none"/><path d="M0.4 42.7 A401.8 401.8 0 0 0 10.6 99.2" stroke="#000" stroke-opacity="0.35" stroke-width="1.0" stroke-dasharray="0.9 1.8" fill="none"/><path d="M48.7 12.5 A351.6 351.6 0 0 0 62.4 98.2" stroke="#000" stroke-opacity="0.36" stroke-width="0.5" stroke-dasharray="1.5 1.8" fill="none"/><path d="M27.5 -4.3 A372.5 372.5 0 0 0 33.3 65.7" stroke="#000" stroke-opacity="0.60" stroke-width="1.3" stroke-dasharray="1.7 1.3" fill="none"/><path d="M72.4 22.5 A328.4 328.4 0 0 0 93.0 116.7" stroke="#000" stroke-opacity="0.54" stroke-width="0.9" stroke-dasharray="1.2 1.4" fill="none"/><path d="M72.1 36.0 A329.9 329.9 0 0 0 89.7 111.9" stroke="#000" stroke-opacity="0.38" stroke-width="1.3" stroke-dasharray="1.8 0.7" fill="none"/><path d="M27.4 70.6 A379.2 379.2 0 0 0 36.2 107.0" stroke="#000" stroke-opacity="0.40" stroke-width="0.9" stroke-dasharray="1.0 0.6" fill="none"/><path d="M8.9 16.6 A391.4 391.4 0 0 0 14.7 69.0" stroke="#000" stroke-opacity="0.26" stroke-width="0.5" stroke-dasharray="1.8 1.6" fill="none"/><path d="M95.1 -1.1 A304.9 304.9 0 0 0 105.7 80.1" stroke="#000" stroke-opacity="0.55" stroke-width="0.8" stroke-dasharray="1.1 0.9" fill="none"/><path d="M121.6 22.4 A279.3 279.3 0 0 0 131.1 75.8" stroke="#000" stroke-opacity="0.42" stroke-width="0.8" stroke-dasharray="1.7 0.7" fill="none"/><path d="M8.3 6.2 A391.8 391.8 0 0 0 18.2 87.8" stroke="#000" stroke-opacity="0.46" stroke-width="1.3" stroke-dasharray="1.5 1.5" fill="none"/><path d="M74.3 13.2 A326.0 326.0 0 0 0 81.4 68.9" stroke="#000" stroke-opacity="0.59" stroke-width="0.7" stroke-dasharray="1.4 1.1" fill="none"/><path d="M47.1 15.8 A353.3 353.3 0 0 0 52.7 64.8" stroke="#000" stroke-opacity="0.46" stroke-width="0.8" stroke-dasharray="1.7 1.3" fill="none"/><path d="M25.8 29.4 A375.4 375.4 0 0 0 32.1 74.4" stroke="#000" stroke-opacity="0.41" stroke-width="0.6" stroke-dasharray="1.2 0.6" fill="none"/><path d="M32.3 31.4 A369.0 369.0 0 0 0 48.1 111.0" stroke="#000" stroke-opacity="0.49" stroke-width="1.1" stroke-dasharray="1.2 1.3" fill="none"/><path d="M65.9 -0.1 A334.1 334.1 0 0 0 82.0 102.4" stroke="#000" stroke-opacity="0.21" stroke-width="0.5" stroke-dasharray="1.5 1.8" fill="none"/><path d="M49.3 15.3 A351.0 351.0 0 0 0 68.3 114.9" stroke="#000" stroke-opacity="0.24" stroke-width="1.1" stroke-dasharray="1.0 0.8" fill="none"/><path d="M2.7 -1.5 A397.3 397.3 0 0 0 9.2 71.5" stroke="#000" stroke-opacity="0.31" stroke-width="0.6" stroke-dasharray="1.0 0.7" fill="none"/><path d="M47.3 33.6 A354.3 354.3 0 0 0 60.4 100.8" stroke="#000" stroke-opacity="0.44" stroke-width="0.9" stroke-dasharray="1.3 1.5" fill="none"/><path d="M64.5 3.3 A335.5 335.5 0 0 0 68.8 53.7" stroke="#000" stroke-opacity="0.47" stroke-width="0.6" stroke-dasharray="1.1 1.1" fill="none"/><path d="M18.9 3.2 A381.1 381.1 0 0 0 28.3 84.0" stroke="#000" stroke-opacity="0.57" stroke-width="1.1" stroke-dasharray="1.4 1.2" fill="none"/><path d="M14.3 45.0 A388.3 388.3 0 0 0 22.3 90.3" stroke="#000" stroke-opacity="0.56" stroke-width="0.8" stroke-dasharray="1.5 1.0" fill="none"/><path d="M74.7 7.6 A325.4 325.4 0 0 0 89.4 96.9" stroke="#000" stroke-opacity="0.56" stroke-width="0.8" stroke-dasharray="1.6 1.0" fill="none"/><path d="M58.8 0.4 A341.2 341.2 0 0 0 66.6 72.4" stroke="#000" stroke-opacity="0.56" stroke-width="0.6" stroke-dasharray="1.6 1.5" fill="none"/><path d="M26.8 -4.9 A373.2 373.2 0 0 0 41.9 105.3" stroke="#000" stroke-opacity="0.55" stroke-width="1.0" stroke-dasharray="1.5 1.5" fill="none"/><path d="M67.8 19.5 A332.8 332.8 0 0 0 88.3 116.4" stroke="#000" stroke-opacity="0.41" stroke-width="0.8" stroke-dasharray="1.3 1.9" fill="none"/><path d="M74.2 22.3 A326.5 326.5 0 0 0 80.6 67.8" stroke="#000" stroke-opacity="0.46" stroke-width="1.0" stroke-dasharray="1.6 1.8" fill="none"/><path d="M56.4 6.9 A343.7 343.7 0 0 0 75.9 114.4" stroke="#000" stroke-opacity="0.31" stroke-width="1.1" stroke-dasharray="1.3 1.9" fill="none"/><path d="M26.1 3.4 A373.9 373.9 0 0 0 40.4 102.3" stroke="#000" stroke-opacity="0.21" stroke-width="1.1" stroke-dasharray="0.8 0.7" fill="none"/><path d="M49.5 16.9 A350.9 350.9 0 0 0 63.9 100.8" stroke="#000" stroke-opacity="0.39" stroke-width="1.2" stroke-dasharray="1.5 0.9" fill="none"/><path d="M100.1 63.7 A306.6 306.6 0 0 0 116.0 115.5" stroke="#000" stroke-opacity="0.37" stroke-width="0.8" stroke-dasharray="1.3 1.1" fill="none"/><path d="M92.6 6.1 A307.4 307.4 0 0 0 106.1 90.1" stroke="#000" stroke-opacity="0.28" stroke-width="1.2" stroke-dasharray="1.6 1.3" fill="none"/><path d="M73.9 7.5 A326.2 326.2 0 0 0 93.4 111.3" stroke="#000" stroke-opacity="0.46" stroke-width="0.5" stroke-dasharray="2.1 1.8" fill="none"/><path d="M39.3 49.4 A364.1 364.1 0 0 0 47.7 91.9" stroke="#000" stroke-opacity="0.47" stroke-width="0.7" stroke-dasharray="2.2 0.7" fill="none"/><path d="M16.8 11.3 A383.4 383.4 0 0 0 29.1 97.1" stroke="#000" stroke-opacity="0.51" stroke-width="1.1" stroke-dasharray="0.8 1.1" fill="none"/><path d="M45.2 33.9 A356.4 356.4 0 0 0 55.7 92.2" stroke="#000" stroke-opacity="0.21" stroke-width="0.6" stroke-dasharray="1.5 0.9" fill="none"/><path d="M10.0 17.8 A390.4 390.4 0 0 0 23.2 102.3" stroke="#000" stroke-opacity="0.40" stroke-width="0.8" stroke-dasharray="2.0 1.8" fill="none"/><path d="M102.7 6.3 A297.4 297.4 0 0 0 124.5 111.9" stroke="#000" stroke-opacity="0.28" stroke-width="1.1" stroke-dasharray="1.2 1.0" fill="none"/><path d="M69.6 11.9 A330.6 330.6 0 0 0 75.6 63.5" stroke="#000" stroke-opacity="0.37" stroke-width="1.1" stroke-dasharray="1.7 1.0" fill="none"/><path d="M47.1 15.3 A353.2 353.2 0 0 0 56.4 82.1" stroke="#000" stroke-opacity="0.36" stroke-width="0.7" stroke-dasharray="1.0 2.0" fill="none"/><path d="M20.9 26.1 A380.0 380.0 0 0 0 33.3 99.4" stroke="#000" stroke-opacity="0.20" stroke-width="0.6" stroke-dasharray="1.5 1.3" fill="none"/><path d="M10.2 16.7 A390.2 390.2 0 0 0 16.0 69.1" stroke="#000" stroke-opacity="0.59" stroke-width="1.2" stroke-dasharray="0.9 1.1" fill="none"/><path d="M55.5 7.1 A344.6 344.6 0 0 0 75.6 116.0" stroke="#000" stroke-opacity="0.31" stroke-width="1.1" stroke-dasharray="1.0 1.5" fill="none"/><path d="M58.4 18.4 A342.1 342.1 0 0 0 73.5 102.1" stroke="#000" stroke-opacity="0.60" stroke-width="1.0" stroke-dasharray="2.1 0.9" fill="none"/><path d="M43.5 -4.6 A356.6 356.6 0 0 0 59.0 104.3" stroke="#000" stroke-opacity="0.34" stroke-width="0.8" stroke-dasharray="1.1 1.8" fill="none"/><path d="M97.2 28.1 A304.1 304.1 0 0 0 110.4 92.9" stroke="#000" stroke-opacity="0.53" stroke-width="0.5" stroke-dasharray="1.7 1.8" fill="none"/><path d="M20.6 8.1 A379.5 379.5 0 0 0 24.9 57.6" stroke="#000" stroke-opacity="0.34" stroke-width="0.7" stroke-dasharray="1.9 0.8" fill="none"/><path d="M37.8 7.4 A362.3 362.3 0 0 0 52.6 102.7" stroke="#000" stroke-opacity="0.25" stroke-width="1.2" stroke-dasharray="0.9 1.1" fill="none"/><path d="M20.9 5.3 A379.2 379.2 0 0 0 37.1 109.9" stroke="#000" stroke-opacity="0.33" stroke-width="1.0" stroke-dasharray="1.3 1.4" fill="none"/><path d="M42.6 54.5 A361.5 361.5 0 0 0 55.2 108.6" stroke="#000" stroke-opacity="0.24" stroke-width="1.2" stroke-dasharray="1.4 1.3" fill="none"/><path d="M17.1 23.3 A383.6 383.6 0 0 0 31.0 104.6" stroke="#000" stroke-opacity="0.24" stroke-width="0.6" stroke-dasharray="2.1 0.9" fill="none"/><path d="M39.6 20.4 A361.0 361.0 0 0 0 56.3 110.3" stroke="#000" stroke-opacity="0.20" stroke-width="1.0" stroke-dasharray="2.0 0.6" fill="none"/><path d="M72.8 21.5 A327.9 327.9 0 0 0 90.9 109.5" stroke="#000" stroke-opacity="0.44" stroke-width="0.7" stroke-dasharray="1.0 0.6" fill="none"/><path d="M14.3 32.0 A387.0 387.0 0 0 0 31.0 116.7" stroke="#000" stroke-opacity="0.30" stroke-width="0.6" stroke-dasharray="1.3 1.9" fill="none"/><path d="M69.2 -1.6 A330.8 330.8 0 0 0 82.2 92.0" stroke="#000" stroke-opacity="0.52" stroke-width="0.8" stroke-dasharray="1.8 0.7" fill="none"/><path d="M14.5 7.2 A385.6 385.6 0 0 0 24.0 85.7" stroke="#000" stroke-opacity="0.42" stroke-width="0.6" stroke-dasharray="1.2 1.5" fill="none"/><path d="M67.2 20.8 A333.5 333.5 0 0 0 76.3 80.2" stroke="#000" stroke-opacity="0.46" stroke-width="0.8" stroke-dasharray="2.2 0.9" fill="none"/><path d="M37.2 0.9 A362.8 362.8 0 0 0 51.7 101.7" stroke="#000" stroke-opacity="0.29" stroke-width="0.9" stroke-dasharray="2.0 1.8" fill="none"/><path d="M86.5 -2.1 A313.5 313.5 0 0 0 103.7 102.4" stroke="#000" stroke-opacity="0.21" stroke-width="0.9" stroke-dasharray="0.8 0.7" fill="none"/><path d="M30.1 -1.2 A369.9 369.9 0 0 0 46.1 107.6" stroke="#000" stroke-opacity="0.54" stroke-width="1.3" stroke-dasharray="1.1 0.7" fill="none"/><path d="M16.5 43.8 A386.0 386.0 0 0 0 28.3 103.8" stroke="#000" stroke-opacity="0.23" stroke-width="0.5" stroke-dasharray="1.3 1.5" fill="none"/><path d="M64.6 9.9 A335.5 335.5 0 0 0 85.0 115.6" stroke="#000" stroke-opacity="0.59" stroke-width="1.0" stroke-dasharray="1.4 0.7" fill="none"/><path d="M83.4 28.5 A317.9 317.9 0 0 0 98.1 99.4" stroke="#000" stroke-opacity="0.51" stroke-width="1.3" stroke-dasharray="1.8 1.4" fill="none"/><path d="M70.3 -5.0 A329.7 329.7 0 0 0 86.8 103.1" stroke="#000" stroke-opacity="0.59" stroke-width="0.7" stroke-dasharray="0.8 1.0" fill="none"/><path d="M89.9 1.7 A310.1 310.1 0 0 0 97.1 66.7" stroke="#000" stroke-opacity="0.49" stroke-width="0.7" stroke-dasharray="1.3 1.2" fill="none"/><path d="M41.8 1.2 A358.2 358.2 0 0 0 53.8 92.1" stroke="#000" stroke-opacity="0.52" stroke-width="0.9" stroke-dasharray="1.4 1.1" fill="none"/><path d="M89.5 3.3 A310.5 310.5 0 0 0 95.4 60.0" stroke="#000" stroke-opacity="0.21" stroke-width="1.0" stroke-dasharray="1.9 1.0" fill="none"/><path d="M69.0 -3.6 A331.1 331.1 0 0 0 82.4 93.5" stroke="#000" stroke-opacity="0.31" stroke-width="1.1" stroke-dasharray="1.1 0.9" fill="none"/><path d="M46.6 76.1 A361.5 361.5 0 0 0 57.5 115.7" stroke="#000" stroke-opacity="0.52" stroke-width="0.7" stroke-dasharray="1.0 1.3" fill="none"/><path d="M56.5 1.6 A343.5 343.5 0 0 0 73.6 107.0" stroke="#000" stroke-opacity="0.25" stroke-width="1.2" stroke-dasharray="1.0 0.9" fill="none"/><path d="M90.7 32.1 A311.0 311.0 0 0 0 104.4 96.6" stroke="#000" stroke-opacity="0.48" stroke-width="0.9" stroke-dasharray="1.9 1.0" fill="none"/><path d="M-10.3 5.6 A410.3 410.3 0 0 0 -6.7 54.7" stroke="#000" stroke-opacity="0.26" stroke-width="0.6" stroke-dasharray="2.1 0.9" fill="none"/><path d="M95.9 16.1 A304.5 304.5 0 0 0 114.9 107.2" stroke="#000" stroke-opacity="0.60" stroke-width="0.5" stroke-dasharray="1.9 0.8" fill="none"/><path d="M92.6 22.2 A308.2 308.2 0 0 0 97.7 60.0" stroke="#000" stroke-opacity="0.42" stroke-width="0.9" stroke-dasharray="1.9 0.7" fill="none"/><path d="M138.7 -4.5 A261.3 261.3 0 0 0 155.0 91.0" stroke="#000" stroke-opacity="0.22" stroke-width="0.6" stroke-dasharray="0.9 0.8" fill="none"/><path d="M48.5 18.7 A352.0 352.0 0 0 0 60.8 93.8" stroke="#000" stroke-opacity="0.30" stroke-width="1.3" stroke-dasharray="1.6 1.3" fill="none"/><path d="M57.7 4.0 A342.4 342.4 0 0 0 73.1 101.7" stroke="#000" stroke-opacity="0.55" stroke-width="1.0" stroke-dasharray="0.8 1.1" fill="none"/><path d="M4.1 19.4 A396.3 396.3 0 0 0 18.4 107.0" stroke="#000" stroke-opacity="0.51" stroke-width="1.1" stroke-dasharray="2.1 1.0" fill="none"/><path d="M119.5 37.5 A283.0 283.0 0 0 0 132.0 90.9" stroke="#000" stroke-opacity="0.54" stroke-width="1.2" stroke-dasharray="1.1 0.7" fill="none"/><path d="M10.7 37.1 A391.0 391.0 0 0 0 17.2 79.8" stroke="#000" stroke-opacity="0.25" stroke-width="0.6" stroke-dasharray="2.0 1.5" fill="none"/><path d="M20.4 35.1 A381.2 381.2 0 0 0 33.4 104.5" stroke="#000" stroke-opacity="0.56" stroke-width="0.5" stroke-dasharray="0.8 1.9" fill="none"/><path d="M35.9 10.9 A364.3 364.3 0 0 0 52.2 108.3" stroke="#000" stroke-opacity="0.43" stroke-width="1.0" stroke-dasharray="1.4 1.8" fill="none"/><path d="M85.9 15.6 A314.5 314.5 0 0 0 97.0 84.0" stroke="#000" stroke-opacity="0.42" stroke-width="1.3" stroke-dasharray="1.3 1.9" fill="none"/><path d="M62.9 39.4 A339.4 339.4 0 0 0 76.6 102.9" stroke="#000" stroke-opacity="0.47" stroke-width="1.2" stroke-dasharray="1.7 1.0" fill="none"/><path d="M93.3 55.4 A311.6 311.6 0 0 0 110.4 115.1" stroke="#000" stroke-opacity="0.21" stroke-width="1.2" stroke-dasharray="1.8 1.5" fill="none"/><path d="M47.6 29.5 A353.6 353.6 0 0 0 55.8 81.1" stroke="#000" stroke-opacity="0.60" stroke-width="1.2" stroke-dasharray="1.4 1.2" fill="none"/><path d="M28.5 60.3 A376.4 376.4 0 0 0 40.5 111.6" stroke="#000" stroke-opacity="0.21" stroke-width="0.6" stroke-dasharray="1.7 1.8" fill="none"/><path d="M62.1 32.7 A339.5 339.5 0 0 0 70.1 79.9" stroke="#000" stroke-opacity="0.59" stroke-width="1.2" stroke-dasharray="1.1 2.0" fill="none"/><path d="M111.3 -1.8 A288.7 288.7 0 0 0 115.7 50.5" stroke="#000" stroke-opacity="0.36" stroke-width="1.3" stroke-dasharray="1.8 0.9" fill="none"/><path d="M125.1 46.1 A278.8 278.8 0 0 0 141.5 104.3" stroke="#000" stroke-opacity="0.42" stroke-width="1.0" stroke-dasharray="1.5 1.5" fill="none"/><path d="M69.1 7.3 A331.0 331.0 0 0 0 86.4 106.0" stroke="#000" stroke-opacity="0.24" stroke-width="1.0" stroke-dasharray="2.0 1.2" fill="none"/><path d="M26.1 5.4 A373.9 373.9 0 0 0 36.6 88.3" stroke="#000" stroke-opacity="0.29" stroke-width="0.9" stroke-dasharray="0.9 1.2" fill="none"/><path d="M12.7 30.1 A388.5 388.5 0 0 0 26.6 107.4" stroke="#000" stroke-opacity="0.55" stroke-width="0.8" stroke-dasharray="1.7 1.0" fill="none"/><path d="M46.3 9.6 A353.8 353.8 0 0 0 55.8 81.9" stroke="#000" stroke-opacity="0.32" stroke-width="1.0" stroke-dasharray="1.6 0.8" fill="none"/><path d="M61.4 6.1 A338.7 338.7 0 0 0 75.2 96.0" stroke="#000" stroke-opacity="0.49" stroke-width="1.2" stroke-dasharray="2.2 1.8" fill="none"/><path d="M40.0 -2.2 A360.1 360.1 0 0 0 53.3 97.0" stroke="#000" stroke-opacity="0.53" stroke-width="1.0" stroke-dasharray="2.2 1.1" fill="none"/><path d="M79.9 -2.2 A320.1 320.1 0 0 0 96.9 102.9" stroke="#000" stroke-opacity="0.46" stroke-width="1.0" stroke-dasharray="1.7 1.5" fill="none"/><path d="M89.4 -3.1 A310.6 310.6 0 0 0 101.1 84.5" stroke="#000" stroke-opacity="0.43" stroke-width="1.3" stroke-dasharray="1.9 1.2" fill="none"/><path d="M41.9 18.5 A358.5 358.5 0 0 0 46.3 58.8" stroke="#000" stroke-opacity="0.36" stroke-width="0.5" stroke-dasharray="1.7 1.5" fill="none"/><path d="M-5.5 36.3 A407.1 407.1 0 0 0 9.8 115.9" stroke="#000" stroke-opacity="0.39" stroke-width="0.7" stroke-dasharray="1.4 1.5" fill="none"/><path d="M21.0 37.9 A380.9 380.9 0 0 0 26.6 75.3" stroke="#000" stroke-opacity="0.21" stroke-width="1.0" stroke-dasharray="1.1 0.8" fill="none"/><path d="M9.8 -3.3 A390.2 390.2 0 0 0 18.3 81.3" stroke="#000" stroke-opacity="0.51" stroke-width="0.8" stroke-dasharray="1.6 1.4" fill="none"/><path d="M53.5 60.5 A351.7 351.7 0 0 0 68.2 116.7" stroke="#000" stroke-opacity="0.45" stroke-width="0.6" stroke-dasharray="1.6 1.3" fill="none"/><path d="M47.7 27.8 A353.4 353.4 0 0 0 65.6 114.3" stroke="#000" stroke-opacity="0.59" stroke-width="0.9" stroke-dasharray="2.0 1.9" fill="none"/><path d="M23.6 21.4 A377.0 377.0 0 0 0 40.8 114.5" stroke="#000" stroke-opacity="0.48" stroke-width="0.8" stroke-dasharray="1.9 1.2" fill="none"/><path d="M41.0 8.7 A359.1 359.1 0 0 0 49.3 77.4" stroke="#000" stroke-opacity="0.58" stroke-width="0.5" stroke-dasharray="2.0 1.2" fill="none"/><path d="M57.8 45.6 A345.2 345.2 0 0 0 67.2 91.9" stroke="#000" stroke-opacity="0.39" stroke-width="0.9" stroke-dasharray="1.3 0.8" fill="none"/><path d="M71.9 0.8 A328.1 328.1 0 0 0 75.1 46.0" stroke="#000" stroke-opacity="0.39" stroke-width="1.1" stroke-dasharray="1.3 1.9" fill="none"/><path d="M49.8 -1.8 A350.2 350.2 0 0 0 65.7 104.2" stroke="#000" stroke-opacity="0.30" stroke-width="1.3" stroke-dasharray="1.3 1.9" fill="none"/><path d="M72.1 20.5 A328.5 328.5 0 0 0 88.7 104.9" stroke="#000" stroke-opacity="0.48" stroke-width="1.2" stroke-dasharray="1.7 0.8" fill="none"/><path d="M71.5 -4.1 A328.5 328.5 0 0 0 74.5 44.7" stroke="#000" stroke-opacity="0.32" stroke-width="0.7" stroke-dasharray="2.0 1.7" fill="none"/><path d="M76.5 31.1 A325.0 325.0 0 0 0 89.3 95.4" stroke="#000" stroke-opacity="0.32" stroke-width="1.3" stroke-dasharray="2.0 0.7" fill="none"/><path d="M111.2 11.5 A289.0 289.0 0 0 0 117.2 59.6" stroke="#000" stroke-opacity="0.49" stroke-width="0.8" stroke-dasharray="1.1 1.5" fill="none"/><path d="M10.5 33.4 A390.9 390.9 0 0 0 15.7 72.0" stroke="#000" stroke-opacity="0.42" stroke-width="0.7" stroke-dasharray="1.2 1.9" fill="none"/><path d="M68.3 8.1 A331.8 331.8 0 0 0 72.0 49.7" stroke="#000" stroke-opacity="0.36" stroke-width="0.9" stroke-dasharray="2.1 0.9" fill="none"/><path d="M52.6 14.4 A347.7 347.7 0 0 0 64.9 92.7" stroke="#000" stroke-opacity="0.24" stroke-width="0.6" stroke-dasharray="1.7 1.6" fill="none"/><path d="M49.5 46.9 A353.6 353.6 0 0 0 64.2 110.6" stroke="#000" stroke-opacity="0.49" stroke-width="1.2" stroke-dasharray="1.9 1.2" fill="none"/><path d="M52.7 -1.1 A347.3 347.3 0 0 0 55.6 44.6" stroke="#000" stroke-opacity="0.57" stroke-width="0.8" stroke-dasharray="1.9 1.0" fill="none"/><path d="M28.8 6.3 A371.2 371.2 0 0 0 44.4 106.6" stroke="#000" stroke-opacity="0.35" stroke-width="0.8" stroke-dasharray="1.8 1.0" fill="none"/><path d="M29.7 9.0 A370.4 370.4 0 0 0 45.7 108.2" stroke="#000" stroke-opacity="0.24" stroke-width="1.1" stroke-dasharray="1.4 0.9" fill="none"/><path d="M44.5 1.7 A355.5 355.5 0 0 0 55.0 86.0" stroke="#000" stroke-opacity="0.36" stroke-width="1.0" stroke-dasharray="1.1 0.6" fill="none"/><path d="M22.9 -2.6 A377.1 377.1 0 0 0 31.7 80.7" stroke="#000" stroke-opacity="0.38" stroke-width="0.8" stroke-dasharray="1.8 0.7" fill="none"/><path d="M89.3 25.0 A311.8 311.8 0 0 0 107.8 108.6" stroke="#000" stroke-opacity="0.46" stroke-width="1.3" stroke-dasharray="1.2 0.6" fill="none"/><path d="M52.9 7.4 A347.2 347.2 0 0 0 57.8 58.9" stroke="#000" stroke-opacity="0.24" stroke-width="1.0" stroke-dasharray="2.0 0.8" fill="none"/><path d="M80.7 -1.9 A319.3 319.3 0 0 0 99.5 108.1" stroke="#000" stroke-opacity="0.46" stroke-width="0.5" stroke-dasharray="1.4 1.2" fill="none"/><path d="M20.6 -3.3 A379.4 379.4 0 0 0 25.3 59.5" stroke="#000" stroke-opacity="0.55" stroke-width="0.6" stroke-dasharray="1.4 0.9" fill="none"/><path d="M8.9 26.8 A392.0 392.0 0 0 0 24.8 113.4" stroke="#000" stroke-opacity="0.43" stroke-width="0.5" stroke-dasharray="1.9 0.9" fill="none"/><path d="M118.5 3.7 A281.5 281.5 0 0 0 133.6 91.0" stroke="#000" stroke-opacity="0.58" stroke-width="1.1" stroke-dasharray="1.5 1.0" fill="none"/><path d="M46.6 10.2 A353.6 353.6 0 0 0 52.7 66.3" stroke="#000" stroke-opacity="0.56" stroke-width="0.7" stroke-dasharray="2.2 1.3" fill="none"/><path d="M51.7 76.3 A356.5 356.5 0 0 0 63.1 116.7" stroke="#000" stroke-opacity="0.26" stroke-width="1.0" stroke-dasharray="1.7 1.1" fill="none"/><path d="M10.8 3.5 A389.2 389.2 0 0 0 17.9 74.2" stroke="#000" stroke-opacity="0.26" stroke-width="0.8" stroke-dasharray="1.1 1.6" fill="none"/><path d="M33.7 24.2 A367.1 367.1 0 0 0 44.2 90.2" stroke="#000" stroke-opacity="0.48" stroke-width="1.2" stroke-dasharray="2.1 1.3" fill="none"/><path d="M30.4 58.6 A374.2 374.2 0 0 0 44.3 116.3" stroke="#000" stroke-opacity="0.45" stroke-width="0.9" stroke-dasharray="1.8 1.7" fill="none"/><path d="M70.4 21.5 A330.3 330.3 0 0 0 88.2 109.0" stroke="#000" stroke-opacity="0.34" stroke-width="1.0" stroke-dasharray="1.8 0.7" fill="none"/><path d="M23.5 0.9 A376.5 376.5 0 0 0 35.7 95.2" stroke="#000" stroke-opacity="0.20" stroke-width="0.9" stroke-dasharray="1.1 1.9" fill="none"/><path d="M59.5 4.8 A340.5 340.5 0 0 0 75.2 102.3" stroke="#000" stroke-opacity="0.53" stroke-width="1.1" stroke-dasharray="1.9 1.6" fill="none"/><path d="M113.1 -0.5 A286.9 286.9 0 0 0 132.1 102.9" stroke="#000" stroke-opacity="0.24" stroke-width="1.2" stroke-dasharray="1.6 1.5" fill="none"/><path d="M24.2 51.2 A379.3 379.3 0 0 0 34.5 101.4" stroke="#000" stroke-opacity="0.26" stroke-width="1.2" stroke-dasharray="2.1 1.7" fill="none"/><path d="M16.7 29.1 A384.4 384.4 0 0 0 21.9 69.1" stroke="#000" stroke-opacity="0.23" stroke-width="1.2" stroke-dasharray="1.0 1.8" fill="none"/><path d="M47.7 21.4 A352.9 352.9 0 0 0 66.7 115.9" stroke="#000" stroke-opacity="0.54" stroke-width="0.6" stroke-dasharray="1.9 1.1" fill="none"/><path d="M80.3 15.1 A320.0 320.0 0 0 0 92.8 89.6" stroke="#000" stroke-opacity="0.46" stroke-width="0.9" stroke-dasharray="1.4 1.4" fill="none"/><path d="M104.8 38.6 A297.7 297.7 0 0 0 122.2 107.1" stroke="#000" stroke-opacity="0.48" stroke-width="0.8" stroke-dasharray="1.0 1.4" fill="none"/><path d="M30.0 19.6 A370.5 370.5 0 0 0 39.8 86.6" stroke="#000" stroke-opacity="0.40" stroke-width="1.2" stroke-dasharray="1.7 1.9" fill="none"/><path d="M70.9 8.2 A329.2 329.2 0 0 0 80.7 80.1" stroke="#000" stroke-opacity="0.48" stroke-width="1.0" stroke-dasharray="0.9 0.8" fill="none"/><path d="M88.7 16.8 A311.8 311.8 0 0 0 110.7 116.3" stroke="#000" stroke-opacity="0.47" stroke-width="1.1" stroke-dasharray="1.2 1.1" fill="none"/><path d="M42.7 19.6 A357.9 357.9 0 0 0 47.8 63.5" stroke="#000" stroke-opacity="0.45" stroke-width="0.8" stroke-dasharray="1.7 1.9" fill="none"/><path d="M107.1 11.9 A293.1 293.1 0 0 0 121.0 90.0" stroke="#000" stroke-opacity="0.26" stroke-width="0.5" stroke-dasharray="1.3 1.7" fill="none"/><path d="M36.1 1.8 A363.9 363.9 0 0 0 43.2 71.7" stroke="#000" stroke-opacity="0.30" stroke-width="1.2" stroke-dasharray="1.9 1.9" fill="none"/><path d="M50.5 15.8 A349.9 349.9 0 0 0 57.2 70.2" stroke="#000" stroke-opacity="0.33" stroke-width="1.1" stroke-dasharray="1.8 1.0" fill="none"/><path d="M114.4 -1.2 A285.6 285.6 0 0 0 131.7 98.1" stroke="#000" stroke-opacity="0.23" stroke-width="0.9" stroke-dasharray="1.1 2.0" fill="none"/><path d="M34.4 7.6 A365.6 365.6 0 0 0 45.6 89.8" stroke="#000" stroke-opacity="0.30" stroke-width="0.9" stroke-dasharray="1.2 1.6" fill="none"/><path d="M81.8 20.2 A318.8 318.8 0 0 0 90.7 77.4" stroke="#000" stroke-opacity="0.40" stroke-width="1.2" stroke-dasharray="0.9 0.9" fill="none"/><path d="M60.6 18.4 A339.9 339.9 0 0 0 79.7 113.6" stroke="#000" stroke-opacity="0.56" stroke-width="0.9" stroke-dasharray="1.3 1.0" fill="none"/><path d="M27.6 1.5 A372.4 372.4 0 0 0 41.6 101.2" stroke="#000" stroke-opacity="0.58" stroke-width="1.2" stroke-dasharray="1.0 0.9" fill="none"/><path d="M44.6 21.3 A356.1 356.1 0 0 0 54.1 84.4" stroke="#000" stroke-opacity="0.32" stroke-width="1.0" stroke-dasharray="1.8 1.9" fill="none"/><path d="M47.8 -3.4 A352.2 352.2 0 0 0 59.9 91.3" stroke="#000" stroke-opacity="0.47" stroke-width="0.9" stroke-dasharray="1.1 0.6" fill="none"/><path d="M94.9 7.4 A305.2 305.2 0 0 0 101.7 64.2" stroke="#000" stroke-opacity="0.44" stroke-width="0.9" stroke-dasharray="1.1 1.3" fill="none"/><path d="M100.1 42.5 A302.9 302.9 0 0 0 119.8 114.9" stroke="#000" stroke-opacity="0.50" stroke-width="0.7" stroke-dasharray="1.5 0.9" fill="none"/><path d="M82.5 61.3 A323.4 323.4 0 0 0 96.9 112.7" stroke="#000" stroke-opacity="0.23" stroke-width="1.1" stroke-dasharray="1.2 0.8" fill="none"/><path d="M69.9 6.6 A330.2 330.2 0 0 0 83.8 95.1" stroke="#000" stroke-opacity="0.33" stroke-width="0.6" stroke-dasharray="1.7 1.2" fill="none"/><path d="M91.3 18.7 A309.2 309.2 0 0 0 113.3 115.9" stroke="#000" stroke-opacity="0.39" stroke-width="0.9" stroke-dasharray="1.0 1.3" fill="none"/><path d="M9.9 77.7 A397.7 397.7 0 0 0 19.2 115.0" stroke="#000" stroke-opacity="0.21" stroke-width="0.7" stroke-dasharray="1.2 1.8" fill="none"/><path d="M78.0 16.1 A322.4 322.4 0 0 0 88.5 83.0" stroke="#000" stroke-opacity="0.40" stroke-width="1.1" stroke-dasharray="1.8 0.8" fill="none"/><path d="M30.5 2.2 A369.5 369.5 0 0 0 33.0 43.4" stroke="#000" stroke-opacity="0.46" stroke-width="0.7" stroke-dasharray="1.2 1.9" fill="none"/><path d="M30.7 28.1 A370.3 370.3 0 0 0 45.3 106.4" stroke="#000" stroke-opacity="0.33" stroke-width="0.7" stroke-dasharray="2.0 1.4" fill="none"/><path d="M62.6 -1.4 A337.4 337.4 0 0 0 79.8 106.2" stroke="#000" stroke-opacity="0.37" stroke-width="1.0" stroke-dasharray="1.2 0.6" fill="none"/><path d="M18.0 1.9 A382.0 382.0 0 0 0 33.2 106.7" stroke="#000" stroke-opacity="0.35" stroke-width="0.9" stroke-dasharray="2.0 1.6" fill="none"/><path d="M74.6 9.6 A325.5 325.5 0 0 0 91.0 102.4" stroke="#000" stroke-opacity="0.25" stroke-width="0.7" stroke-dasharray="0.9 1.0" fill="none"/><path d="M32.0 19.2 A368.5 368.5 0 0 0 45.5 100.7" stroke="#000" stroke-opacity="0.57" stroke-width="1.0" stroke-dasharray="1.3 1.4" fill="none"/><path d="M26.9 30.0 A374.3 374.3 0 0 0 32.1 69.0" stroke="#000" stroke-opacity="0.46" stroke-width="0.5" stroke-dasharray="1.0 0.7" fill="none"/><circle cx="69.2" cy="56.6" r="25" fill="#0c0c0c"/><ellipse cx="68.2" cy="56.6" rx="9.1" ry="5.2" fill="url(#g6)"/><ellipse cx="68.2" cy="56.6" rx="3.8500000000000005" ry="2.2" fill="#fff"/></svg>
<div style="left:460px;top:644.0px;width:20px;height:20px;background:#a3a3a3"></div>
<div class="t" style="left:270.0px;top:649.01px;font-size:10.5px;line-height:10.5px;color:#2a2a2a;font-weight:bold;width:400px;text-align:center;-webkit-text-stroke:0">C2</div>
<div style="left:140px;top:763px;width:866px;height:1.5px;background:#8d9aa2"></div>
<div style="left:140px;top:764.5px;width:866px;height:35.5px;background:#4b5e6a"></div>
<div style="left:1003px;top:764px;width:3px;height:36px;background:#3a3a3a"></div>
<div style="left:145px;top:773px;width:89px;height:19.5px;background:#44565f;border-radius:3px;box-shadow:0 2px 3px rgba(0,0,0,0.3)"></div>
<div class="t" style="left:151px;top:779.08px;font-size:10.3px;line-height:10.3px;color:#eef1f2;font-weight:bold;-webkit-text-stroke:0.1px currentColor">Seznam hlášení</div>
<div style="left:839px;top:766px;width:1px;height:32px;background:#7f8f98"></div>
<div style="left:931px;top:766px;width:1px;height:32px;background:#7f8f98"></div>
<div class="t" style="left:683.0px;top:771.34px;font-size:9.4px;line-height:9.4px;color:#eef1f2;font-weight:bold;width:400px;text-align:center;-webkit-text-stroke:0">Uživatel</div>
<div class="t" style="left:848.7px;top:784.14px;font-size:9.4px;line-height:9.4px;color:#eef1f2;font-weight:bold;letter-spacing:0.2px;-webkit-text-stroke:0">Mistr&nbsp;&nbsp;&nbsp;&nbsp;-&nbsp;&nbsp;&nbsp;&nbsp;Mistr</div>
<div class="t" style="left:768.5px;top:771.34px;font-size:9.4px;line-height:9.4px;color:#eef1f2;font-weight:bold;width:400px;text-align:center;-webkit-text-stroke:0">Stroj</div>
<div class="t" style="left:769.3px;top:784.57px;font-size:8.9px;line-height:8.9px;color:#eef1f2;font-weight:bold;width:400px;text-align:center;-webkit-text-stroke:0">FESTTest 5.xx</div>
</body></html>
